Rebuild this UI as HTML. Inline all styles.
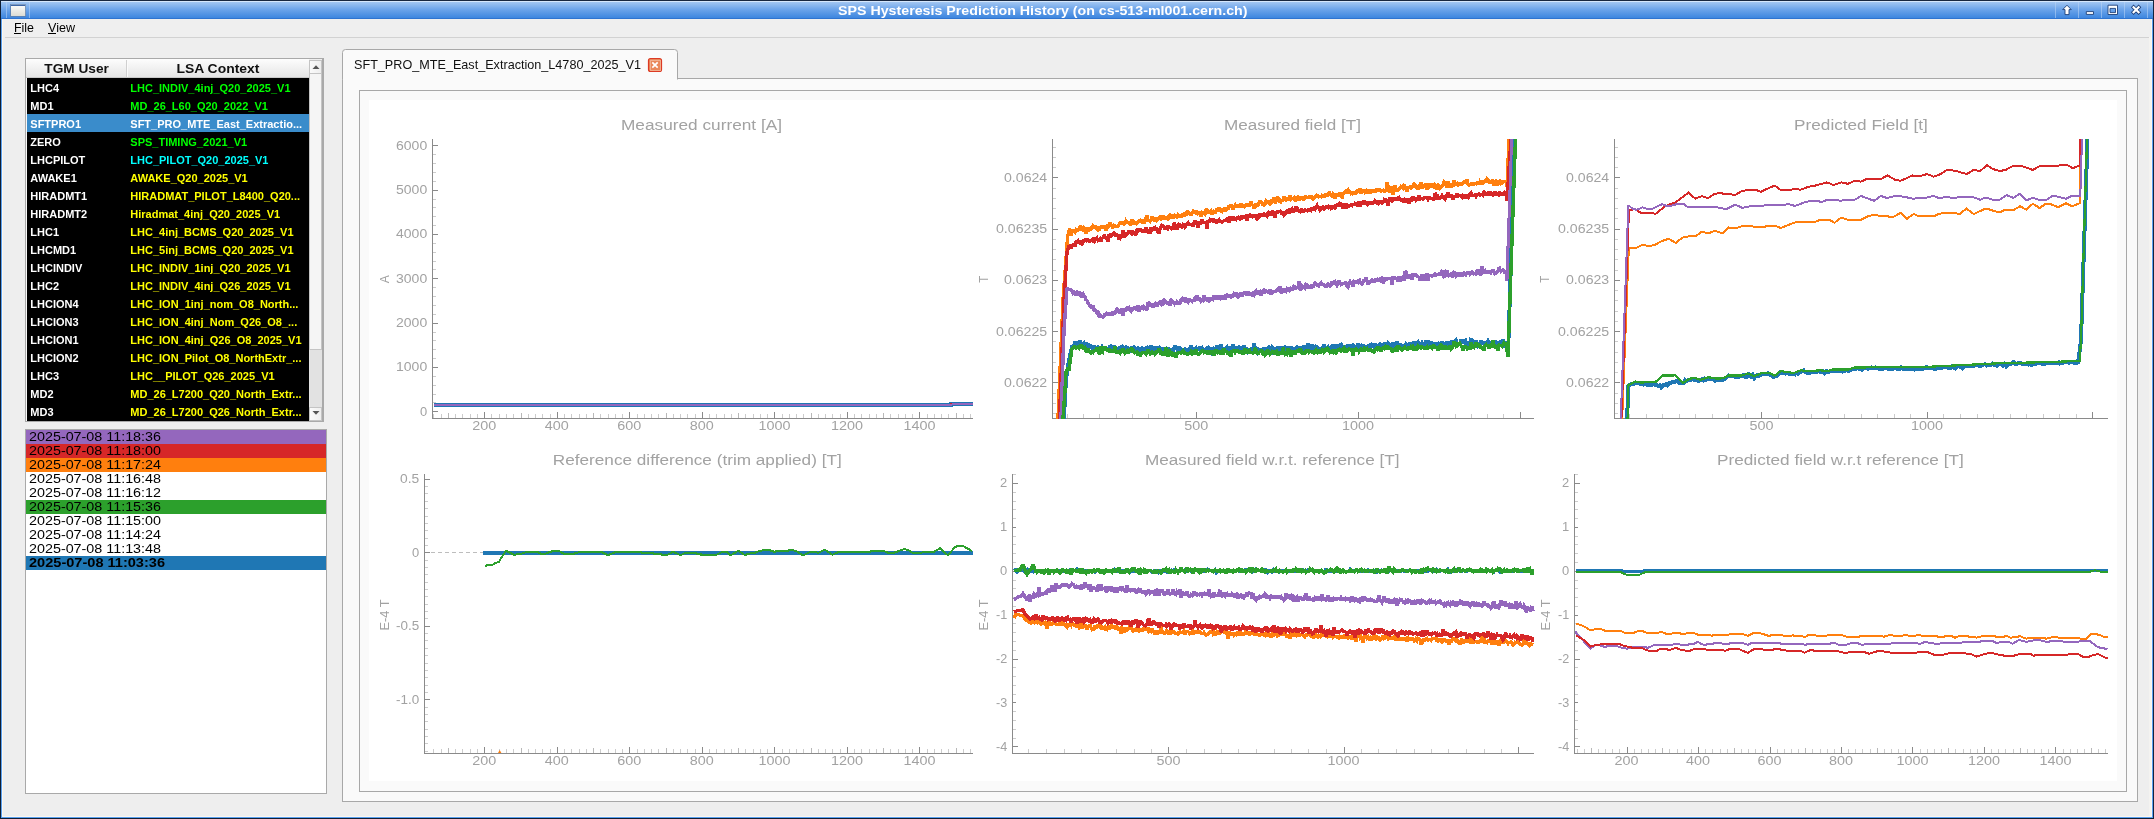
<!DOCTYPE html><html><head><meta charset="utf-8"><style>html,body{margin:0;padding:0;overflow:hidden;background:#eeeeee}svg{display:block;will-change:transform}text{font-family:"Liberation Sans",sans-serif}</style></head><body>
<svg width="2154" height="819" viewBox="0 0 2154 819" shape-rendering="crispEdges">
<defs>
<linearGradient id="tb" x1="0" y1="0" x2="0" y2="1"><stop offset="0" stop-color="#a9cbf3"/><stop offset="0.45" stop-color="#6ea5ea"/><stop offset="1" stop-color="#3883de"/></linearGradient>
<linearGradient id="hd" x1="0" y1="0" x2="0" y2="1"><stop offset="0" stop-color="#fdfdfd"/><stop offset="1" stop-color="#e4e4e4"/></linearGradient>
<linearGradient id="sb" x1="0" y1="0" x2="1" y2="0"><stop offset="0" stop-color="#fafafa"/><stop offset="1" stop-color="#eeeeee"/></linearGradient>
</defs>
<rect x="0" y="0" width="2154" height="819" fill="#eeeeee"/>
<rect x="0" y="0" width="2154" height="1" fill="#18273f"/>
<rect x="0" y="0" width="1" height="819" fill="#0f1e33"/>
<rect x="1" y="19" width="1" height="800" fill="#5aa0f0"/>
<rect x="2" y="19" width="1" height="798" fill="#fbf7ef"/>
<rect x="2153" y="0" width="1" height="819" fill="#13233c"/>
<rect x="2152" y="19" width="1" height="800" fill="#5aa0f0"/>
<rect x="2151" y="19" width="1" height="798" fill="#fbf7ef"/>
<rect x="2149" y="37" width="2" height="779" fill="#f4f3f0"/>
<rect x="0" y="818" width="2154" height="1" fill="#0f1e33"/>
<rect x="1" y="817" width="2152" height="1" fill="#5aa0f0"/>
<rect x="2" y="816" width="2150" height="1" fill="#fbf7ef"/>
<rect x="1" y="1" width="2152" height="18" fill="url(#tb)"/>
<rect x="1" y="18" width="2152" height="1" fill="#2f74d0"/>
<rect x="1" y="1" width="2152" height="1" fill="#d6e7fb"/>
<rect x="6" y="2" width="1" height="16" fill="#bcd6f6" opacity="0.55"/>
<rect x="29" y="2" width="1" height="16" fill="#bcd6f6" opacity="0.55"/>
<rect x="2055" y="2" width="1" height="16" fill="#bcd6f6" opacity="0.55"/>
<rect x="2078" y="2" width="1" height="16" fill="#bcd6f6" opacity="0.55"/>
<rect x="2101" y="2" width="1" height="16" fill="#bcd6f6" opacity="0.55"/>
<rect x="2124" y="2" width="1" height="16" fill="#bcd6f6" opacity="0.55"/>
<rect x="2147" y="2" width="1" height="16" fill="#bcd6f6" opacity="0.55"/>
<linearGradient id="wi" x1="0" y1="0" x2="0" y2="1"><stop offset="0" stop-color="#ffffff"/><stop offset="1" stop-color="#dcdcd4"/></linearGradient>
<rect x="10.5" y="4" width="15" height="12" fill="url(#wi)" stroke="#5d7fae" stroke-width="0.8"/>
<rect x="11" y="4.5" width="14" height="1.6" fill="#3e66a6"/>
<text x="838" y="14.9" font-size="13" fill="#ffffff" font-weight="bold" textLength="409.5" lengthAdjust="spacingAndGlyphs">SPS Hysteresis Prediction History (on cs-513-ml001.cern.ch)</text>
<path d="M2067,5.2 L2071.3,9.6 L2069,9.6 L2069,14.6 L2065,14.6 L2065,9.6 L2062.7,9.6 Z" fill="#ffffff" stroke="#1d3f78" stroke-width="0.9" stroke-linejoin="round" shape-rendering="geometricPrecision"/>
<path d="M2086.3,11.6 H2093.5 V14.4 H2086.3 Z" fill="#ffffff" stroke="#1d3f78" stroke-width="0.9" stroke-linejoin="round" shape-rendering="geometricPrecision"/>
<path d="M2108,5.2 H2117.5 V14.5 H2108 Z M2110,8.4 V12.6 H2115.5 V8.4 Z" fill="#ffffff" fill-rule="evenodd" stroke="#1d3f78" stroke-width="0.9" shape-rendering="geometricPrecision"/>
<path d="M2133.6,7.3 L2138.6,12.3 M2138.6,7.3 L2133.6,12.3" stroke="#1d3f78" stroke-width="3.8" stroke-linecap="square" shape-rendering="geometricPrecision"/>
<path d="M2133.6,7.3 L2138.6,12.3 M2138.6,7.3 L2133.6,12.3" stroke="#ffffff" stroke-width="2.2" stroke-linecap="square" shape-rendering="geometricPrecision"/>
<rect x="3" y="19" width="2147" height="18" fill="#efefef"/>
<rect x="5" y="37" width="2144" height="1" fill="#d2d2d2"/>
<text x="14" y="32" font-size="13" fill="#000" textLength="20" lengthAdjust="spacingAndGlyphs">File</text>
<rect x="14" y="33" width="7" height="1" fill="#000"/>
<text x="48" y="32" font-size="13" fill="#000" textLength="27" lengthAdjust="spacingAndGlyphs">View</text>
<rect x="48" y="33" width="8" height="1" fill="#000"/>
<rect x="25" y="58" width="299" height="364" fill="#a9a9a9"/>
<rect x="26" y="59" width="297" height="362" fill="#f8f8f8"/>
<rect x="26" y="59" width="283" height="19" fill="url(#hd)"/>
<rect x="26" y="77" width="283" height="1" fill="#c9c9c9"/>
<rect x="126" y="60" width="1" height="17" fill="#d0d0d0"/>
<rect x="127" y="60" width="1" height="17" fill="#fbfbfb"/>
<text x="44.3" y="72.9" font-size="12" fill="#111" font-weight="bold" textLength="64.5" lengthAdjust="spacingAndGlyphs">TGM User</text>
<text x="176.4" y="72.9" font-size="12" fill="#111" font-weight="bold" textLength="83" lengthAdjust="spacingAndGlyphs">LSA Context</text>
<rect x="27" y="78" width="282" height="343" fill="#000000"/>
<text x="30.3" y="92" font-size="11" fill="#ffffff" font-weight="bold">LHC4</text>
<text x="130.3" y="92" font-size="11" fill="#00ff00" font-weight="bold">LHC_INDIV_4inj_Q20_2025_V1</text>
<text x="30.3" y="110" font-size="11" fill="#ffffff" font-weight="bold">MD1</text>
<text x="130.3" y="110" font-size="11" fill="#00ff00" font-weight="bold">MD_26_L60_Q20_2022_V1</text>
<rect x="27" y="114" width="282" height="18" fill="#3a8ccb"/>
<text x="30.3" y="128" font-size="11" fill="#ffffff" font-weight="bold">SFTPRO1</text>
<text x="130.3" y="128" font-size="11" fill="#ffffff" font-weight="bold">SFT_PRO_MTE_East_Extractio...</text>
<text x="30.3" y="146" font-size="11" fill="#ffffff" font-weight="bold">ZERO</text>
<text x="130.3" y="146" font-size="11" fill="#00ff00" font-weight="bold">SPS_TIMING_2021_V1</text>
<text x="30.3" y="164" font-size="11" fill="#ffffff" font-weight="bold">LHCPILOT</text>
<text x="130.3" y="164" font-size="11" fill="#00ffff" font-weight="bold">LHC_PILOT_Q20_2025_V1</text>
<text x="30.3" y="182" font-size="11" fill="#ffffff" font-weight="bold">AWAKE1</text>
<text x="130.3" y="182" font-size="11" fill="#ffff00" font-weight="bold">AWAKE_Q20_2025_V1</text>
<text x="30.3" y="200" font-size="11" fill="#ffffff" font-weight="bold">HIRADMT1</text>
<text x="130.3" y="200" font-size="11" fill="#ffff00" font-weight="bold">HIRADMAT_PILOT_L8400_Q20...</text>
<text x="30.3" y="218" font-size="11" fill="#ffffff" font-weight="bold">HIRADMT2</text>
<text x="130.3" y="218" font-size="11" fill="#ffff00" font-weight="bold">Hiradmat_4inj_Q20_2025_V1</text>
<text x="30.3" y="236" font-size="11" fill="#ffffff" font-weight="bold">LHC1</text>
<text x="130.3" y="236" font-size="11" fill="#ffff00" font-weight="bold">LHC_4inj_BCMS_Q20_2025_V1</text>
<text x="30.3" y="254" font-size="11" fill="#ffffff" font-weight="bold">LHCMD1</text>
<text x="130.3" y="254" font-size="11" fill="#ffff00" font-weight="bold">LHC_5inj_BCMS_Q20_2025_V1</text>
<text x="30.3" y="272" font-size="11" fill="#ffffff" font-weight="bold">LHCINDIV</text>
<text x="130.3" y="272" font-size="11" fill="#ffff00" font-weight="bold">LHC_INDIV_1inj_Q20_2025_V1</text>
<text x="30.3" y="290" font-size="11" fill="#ffffff" font-weight="bold">LHC2</text>
<text x="130.3" y="290" font-size="11" fill="#ffff00" font-weight="bold">LHC_INDIV_4inj_Q26_2025_V1</text>
<text x="30.3" y="308" font-size="11" fill="#ffffff" font-weight="bold">LHCION4</text>
<text x="130.3" y="308" font-size="11" fill="#ffff00" font-weight="bold">LHC_ION_1inj_nom_O8_North...</text>
<text x="30.3" y="326" font-size="11" fill="#ffffff" font-weight="bold">LHCION3</text>
<text x="130.3" y="326" font-size="11" fill="#ffff00" font-weight="bold">LHC_ION_4inj_Nom_Q26_O8_...</text>
<text x="30.3" y="344" font-size="11" fill="#ffffff" font-weight="bold">LHCION1</text>
<text x="130.3" y="344" font-size="11" fill="#ffff00" font-weight="bold">LHC_ION_4inj_Q26_O8_2025_V1</text>
<text x="30.3" y="362" font-size="11" fill="#ffffff" font-weight="bold">LHCION2</text>
<text x="130.3" y="362" font-size="11" fill="#ffff00" font-weight="bold">LHC_ION_Pilot_O8_NorthExtr_...</text>
<text x="30.3" y="380" font-size="11" fill="#ffffff" font-weight="bold">LHC3</text>
<text x="130.3" y="380" font-size="11" fill="#ffff00" font-weight="bold">LHC__PILOT_Q26_2025_V1</text>
<text x="30.3" y="398" font-size="11" fill="#ffffff" font-weight="bold">MD2</text>
<text x="130.3" y="398" font-size="11" fill="#ffff00" font-weight="bold">MD_26_L7200_Q20_North_Extr...</text>
<text x="30.3" y="416" font-size="11" fill="#ffffff" font-weight="bold">MD3</text>
<text x="130.3" y="416" font-size="11" fill="#ffff00" font-weight="bold">MD_26_L7200_Q26_North_Extr...</text>
<rect x="309" y="59" width="14" height="362" fill="#eeeeee"/>
<rect x="309" y="60" width="13" height="14" fill="#c4c4c4"/>
<rect x="310" y="61" width="11" height="12" fill="url(#sb)"/>
<path d="M312.5,69 L316,65.3 L319.5,69 Z" fill="#555" shape-rendering="geometricPrecision"/>
<rect x="309" y="74" width="13" height="276" fill="#c4c4c4"/>
<rect x="310" y="74" width="11" height="275" fill="#f5f5f5"/>
<rect x="309" y="350" width="13" height="57" fill="#e2e2e2"/>
<rect x="309" y="407" width="13" height="14" fill="#c4c4c4"/>
<rect x="310" y="408" width="11" height="12" fill="url(#sb)"/>
<path d="M312.5,411 L316,414.7 L319.5,411 Z" fill="#555" shape-rendering="geometricPrecision"/>
<rect x="322" y="59" width="1" height="362" fill="#a9a9a9"/>
<rect x="25" y="429" width="302" height="365" fill="#a9a9a9"/>
<rect x="26" y="430" width="300" height="363" fill="#ffffff"/>
<rect x="26" y="430" width="300" height="14" fill="#9467bd"/>
<text x="29" y="441" font-size="12" fill="#000" textLength="132" lengthAdjust="spacingAndGlyphs">2025-07-08 11:18:36</text>
<rect x="26" y="444" width="300" height="14" fill="#d62728"/>
<text x="29" y="455" font-size="12" fill="#000" textLength="132" lengthAdjust="spacingAndGlyphs">2025-07-08 11:18:00</text>
<rect x="26" y="458" width="300" height="14" fill="#ff7f0e"/>
<text x="29" y="469" font-size="12" fill="#000" textLength="132" lengthAdjust="spacingAndGlyphs">2025-07-08 11:17:24</text>
<text x="29" y="483" font-size="12" fill="#000" textLength="132" lengthAdjust="spacingAndGlyphs">2025-07-08 11:16:48</text>
<text x="29" y="497" font-size="12" fill="#000" textLength="132" lengthAdjust="spacingAndGlyphs">2025-07-08 11:16:12</text>
<rect x="26" y="500" width="300" height="14" fill="#2ca02c"/>
<text x="29" y="511" font-size="12" fill="#000" textLength="132" lengthAdjust="spacingAndGlyphs">2025-07-08 11:15:36</text>
<text x="29" y="525" font-size="12" fill="#000" textLength="132" lengthAdjust="spacingAndGlyphs">2025-07-08 11:15:00</text>
<text x="29" y="539" font-size="12" fill="#000" textLength="132" lengthAdjust="spacingAndGlyphs">2025-07-08 11:14:24</text>
<text x="29" y="553" font-size="12" fill="#000" textLength="132" lengthAdjust="spacingAndGlyphs">2025-07-08 11:13:48</text>
<rect x="26" y="556" width="300" height="14" fill="#1f77b4"/>
<text x="29" y="567" font-size="12" fill="#000" font-weight="bold" textLength="136" lengthAdjust="spacingAndGlyphs">2025-07-08 11:03:36</text>
<rect x="342" y="78" width="1796" height="724" fill="#a8a8a8"/>
<rect x="343" y="79" width="1794" height="722" fill="#fafafa"/>
<path d="M342.5,79.5 V52.5 Q342.5,49.5 345.5,49.5 H674.5 Q677.5,49.5 677.5,52.5 V79.5" fill="#fafafa" stroke="#a8a8a8" stroke-width="1" shape-rendering="geometricPrecision"/>
<rect x="343" y="78" width="334" height="2" fill="#fafafa"/>
<text x="354" y="69.3" font-size="13" fill="#111" textLength="287" lengthAdjust="spacingAndGlyphs">SFT_PRO_MTE_East_Extraction_L4780_2025_V1</text>
<rect x="648.5" y="58.5" width="13" height="13" rx="2" fill="#e9875a" stroke="#dc3a24" stroke-width="1.2" shape-rendering="geometricPrecision"/>
<rect x="650" y="60" width="10" height="10" fill="none" stroke="#f3b89a" stroke-width="0.8"/>
<path d="M652.3,62.3 L657.7,67.7 M657.7,62.3 L652.3,67.7" stroke="#ffffff" stroke-width="1.7" stroke-linecap="butt" shape-rendering="geometricPrecision"/>
<rect x="359" y="90" width="1768" height="702" fill="#a8a8a8"/>
<rect x="360" y="91" width="1766" height="700" fill="#fafafa"/>
<rect x="369" y="100" width="1748" height="681" fill="#ffffff"/>
<defs>
<clipPath id="c1"><rect x="433" y="139" width="541" height="280"/></clipPath>
<clipPath id="c2"><rect x="1053" y="139" width="482" height="280"/></clipPath>
<clipPath id="c3"><rect x="1615" y="139" width="494" height="280"/></clipPath>
<clipPath id="c4"><rect x="425" y="474" width="549" height="280"/></clipPath>
<clipPath id="c5"><rect x="1013" y="474" width="522" height="280"/></clipPath>
<clipPath id="c6"><rect x="1575" y="474" width="534" height="280"/></clipPath>
</defs>
<text x="621.0" y="129.8" font-size="15.4" fill="#a2a2a2" textLength="161.0" lengthAdjust="spacingAndGlyphs">Measured current [A]</text>
<text x="1224.1" y="129.7" font-size="15.4" fill="#a2a2a2" textLength="136.8" lengthAdjust="spacingAndGlyphs">Measured field [T]</text>
<text x="1794.1" y="129.6" font-size="15.4" fill="#a2a2a2" textLength="133.7" lengthAdjust="spacingAndGlyphs">Predicted Field [t]</text>
<text x="552.8" y="465" font-size="15.4" fill="#a2a2a2" textLength="288.9" lengthAdjust="spacingAndGlyphs">Reference difference (trim applied) [T]</text>
<text x="1145.0" y="465.2" font-size="15.4" fill="#a2a2a2" textLength="254.5" lengthAdjust="spacingAndGlyphs">Measured field w.r.t. reference [T]</text>
<text x="1717.0" y="465.1" font-size="15.4" fill="#a2a2a2" textLength="246.7" lengthAdjust="spacingAndGlyphs">Predicted field w.r.t reference [T]</text>
<rect x="432" y="139" width="1" height="280" fill="#8a8a8a"/>
<rect x="432" y="418" width="541" height="1" fill="#8a8a8a"/>
<rect x="432" y="411" width="6" height="1" fill="#8a8a8a"/>
<text x="427.2" y="415.6" font-size="12" fill="#a2a2a2" text-anchor="end" textLength="7.2" lengthAdjust="spacingAndGlyphs">0</text>
<rect x="432" y="367" width="6" height="1" fill="#8a8a8a"/>
<text x="427.2" y="371.3" font-size="12" fill="#a2a2a2" text-anchor="end" textLength="31.2" lengthAdjust="spacingAndGlyphs">1000</text>
<rect x="432" y="323" width="6" height="1" fill="#8a8a8a"/>
<text x="427.2" y="326.9" font-size="12" fill="#a2a2a2" text-anchor="end" textLength="31.2" lengthAdjust="spacingAndGlyphs">2000</text>
<rect x="432" y="278" width="6" height="1" fill="#8a8a8a"/>
<text x="427.2" y="282.6" font-size="12" fill="#a2a2a2" text-anchor="end" textLength="31.2" lengthAdjust="spacingAndGlyphs">3000</text>
<rect x="432" y="234" width="6" height="1" fill="#8a8a8a"/>
<text x="427.2" y="238.3" font-size="12" fill="#a2a2a2" text-anchor="end" textLength="31.2" lengthAdjust="spacingAndGlyphs">4000</text>
<rect x="432" y="190" width="6" height="1" fill="#8a8a8a"/>
<text x="427.2" y="193.9" font-size="12" fill="#a2a2a2" text-anchor="end" textLength="31.2" lengthAdjust="spacingAndGlyphs">5000</text>
<rect x="432" y="145" width="6" height="1" fill="#8a8a8a"/>
<text x="427.2" y="149.6" font-size="12" fill="#a2a2a2" text-anchor="end" textLength="31.2" lengthAdjust="spacingAndGlyphs">6000</text>
<rect x="433" y="402" width="3" height="1" fill="#cccccc"/>
<rect x="433" y="394" width="3" height="1" fill="#cccccc"/>
<rect x="433" y="385" width="3" height="1" fill="#cccccc"/>
<rect x="433" y="376" width="3" height="1" fill="#cccccc"/>
<rect x="433" y="358" width="3" height="1" fill="#cccccc"/>
<rect x="433" y="349" width="3" height="1" fill="#cccccc"/>
<rect x="433" y="340" width="3" height="1" fill="#cccccc"/>
<rect x="433" y="332" width="3" height="1" fill="#cccccc"/>
<rect x="433" y="314" width="3" height="1" fill="#cccccc"/>
<rect x="433" y="305" width="3" height="1" fill="#cccccc"/>
<rect x="433" y="296" width="3" height="1" fill="#cccccc"/>
<rect x="433" y="287" width="3" height="1" fill="#cccccc"/>
<rect x="433" y="269" width="3" height="1" fill="#cccccc"/>
<rect x="433" y="261" width="3" height="1" fill="#cccccc"/>
<rect x="433" y="252" width="3" height="1" fill="#cccccc"/>
<rect x="433" y="243" width="3" height="1" fill="#cccccc"/>
<rect x="433" y="225" width="3" height="1" fill="#cccccc"/>
<rect x="433" y="216" width="3" height="1" fill="#cccccc"/>
<rect x="433" y="207" width="3" height="1" fill="#cccccc"/>
<rect x="433" y="199" width="3" height="1" fill="#cccccc"/>
<rect x="433" y="181" width="3" height="1" fill="#cccccc"/>
<rect x="433" y="172" width="3" height="1" fill="#cccccc"/>
<rect x="433" y="163" width="3" height="1" fill="#cccccc"/>
<rect x="433" y="154" width="3" height="1" fill="#cccccc"/>
<rect x="484" y="412" width="1" height="6" fill="#8a8a8a"/>
<text x="484.2" y="430" font-size="12" fill="#a2a2a2" text-anchor="middle" textLength="24" lengthAdjust="spacingAndGlyphs">200</text>
<rect x="557" y="412" width="1" height="6" fill="#8a8a8a"/>
<text x="556.8" y="430" font-size="12" fill="#a2a2a2" text-anchor="middle" textLength="24" lengthAdjust="spacingAndGlyphs">400</text>
<rect x="629" y="412" width="1" height="6" fill="#8a8a8a"/>
<text x="629.3" y="430" font-size="12" fill="#a2a2a2" text-anchor="middle" textLength="24" lengthAdjust="spacingAndGlyphs">600</text>
<rect x="702" y="412" width="1" height="6" fill="#8a8a8a"/>
<text x="701.8" y="430" font-size="12" fill="#a2a2a2" text-anchor="middle" textLength="24" lengthAdjust="spacingAndGlyphs">800</text>
<rect x="774" y="412" width="1" height="6" fill="#8a8a8a"/>
<text x="774.4" y="430" font-size="12" fill="#a2a2a2" text-anchor="middle" textLength="32" lengthAdjust="spacingAndGlyphs">1000</text>
<rect x="847" y="412" width="1" height="6" fill="#8a8a8a"/>
<text x="846.9" y="430" font-size="12" fill="#a2a2a2" text-anchor="middle" textLength="32" lengthAdjust="spacingAndGlyphs">1200</text>
<rect x="919" y="412" width="1" height="6" fill="#8a8a8a"/>
<text x="919.4" y="430" font-size="12" fill="#a2a2a2" text-anchor="middle" textLength="32" lengthAdjust="spacingAndGlyphs">1400</text>
<rect x="433" y="414" width="1" height="4" fill="#cccccc"/>
<rect x="441" y="414" width="1" height="4" fill="#cccccc"/>
<rect x="455" y="414" width="1" height="4" fill="#cccccc"/>
<rect x="462" y="414" width="1" height="4" fill="#cccccc"/>
<rect x="470" y="414" width="1" height="4" fill="#cccccc"/>
<rect x="477" y="414" width="1" height="4" fill="#cccccc"/>
<rect x="491" y="414" width="1" height="4" fill="#cccccc"/>
<rect x="499" y="414" width="1" height="4" fill="#cccccc"/>
<rect x="506" y="414" width="1" height="4" fill="#cccccc"/>
<rect x="513" y="414" width="1" height="4" fill="#cccccc"/>
<rect x="528" y="414" width="1" height="4" fill="#cccccc"/>
<rect x="535" y="414" width="1" height="4" fill="#cccccc"/>
<rect x="542" y="414" width="1" height="4" fill="#cccccc"/>
<rect x="550" y="414" width="1" height="4" fill="#cccccc"/>
<rect x="564" y="414" width="1" height="4" fill="#cccccc"/>
<rect x="571" y="414" width="1" height="4" fill="#cccccc"/>
<rect x="579" y="414" width="1" height="4" fill="#cccccc"/>
<rect x="586" y="414" width="1" height="4" fill="#cccccc"/>
<rect x="600" y="414" width="1" height="4" fill="#cccccc"/>
<rect x="608" y="414" width="1" height="4" fill="#cccccc"/>
<rect x="615" y="414" width="1" height="4" fill="#cccccc"/>
<rect x="622" y="414" width="1" height="4" fill="#cccccc"/>
<rect x="637" y="414" width="1" height="4" fill="#cccccc"/>
<rect x="644" y="414" width="1" height="4" fill="#cccccc"/>
<rect x="651" y="414" width="1" height="4" fill="#cccccc"/>
<rect x="658" y="414" width="1" height="4" fill="#cccccc"/>
<rect x="673" y="414" width="1" height="4" fill="#cccccc"/>
<rect x="680" y="414" width="1" height="4" fill="#cccccc"/>
<rect x="687" y="414" width="1" height="4" fill="#cccccc"/>
<rect x="695" y="414" width="1" height="4" fill="#cccccc"/>
<rect x="709" y="414" width="1" height="4" fill="#cccccc"/>
<rect x="716" y="414" width="1" height="4" fill="#cccccc"/>
<rect x="724" y="414" width="1" height="4" fill="#cccccc"/>
<rect x="731" y="414" width="1" height="4" fill="#cccccc"/>
<rect x="745" y="414" width="1" height="4" fill="#cccccc"/>
<rect x="753" y="414" width="1" height="4" fill="#cccccc"/>
<rect x="760" y="414" width="1" height="4" fill="#cccccc"/>
<rect x="767" y="414" width="1" height="4" fill="#cccccc"/>
<rect x="782" y="414" width="1" height="4" fill="#cccccc"/>
<rect x="789" y="414" width="1" height="4" fill="#cccccc"/>
<rect x="796" y="414" width="1" height="4" fill="#cccccc"/>
<rect x="803" y="414" width="1" height="4" fill="#cccccc"/>
<rect x="818" y="414" width="1" height="4" fill="#cccccc"/>
<rect x="825" y="414" width="1" height="4" fill="#cccccc"/>
<rect x="832" y="414" width="1" height="4" fill="#cccccc"/>
<rect x="840" y="414" width="1" height="4" fill="#cccccc"/>
<rect x="854" y="414" width="1" height="4" fill="#cccccc"/>
<rect x="861" y="414" width="1" height="4" fill="#cccccc"/>
<rect x="869" y="414" width="1" height="4" fill="#cccccc"/>
<rect x="876" y="414" width="1" height="4" fill="#cccccc"/>
<rect x="890" y="414" width="1" height="4" fill="#cccccc"/>
<rect x="898" y="414" width="1" height="4" fill="#cccccc"/>
<rect x="905" y="414" width="1" height="4" fill="#cccccc"/>
<rect x="912" y="414" width="1" height="4" fill="#cccccc"/>
<rect x="927" y="414" width="1" height="4" fill="#cccccc"/>
<rect x="934" y="414" width="1" height="4" fill="#cccccc"/>
<rect x="941" y="414" width="1" height="4" fill="#cccccc"/>
<rect x="948" y="414" width="1" height="4" fill="#cccccc"/>
<rect x="963" y="414" width="1" height="4" fill="#cccccc"/>
<rect x="970" y="414" width="1" height="4" fill="#cccccc"/>
<rect x="448" y="413" width="1" height="5" fill="#b8b8b8"/>
<rect x="521" y="413" width="1" height="5" fill="#b8b8b8"/>
<rect x="593" y="413" width="1" height="5" fill="#b8b8b8"/>
<rect x="666" y="413" width="1" height="5" fill="#b8b8b8"/>
<rect x="738" y="413" width="1" height="5" fill="#b8b8b8"/>
<rect x="811" y="413" width="1" height="5" fill="#b8b8b8"/>
<rect x="883" y="413" width="1" height="5" fill="#b8b8b8"/>
<rect x="956" y="413" width="1" height="5" fill="#b8b8b8"/>
<text x="388.9" y="279.3" font-size="12" fill="#a2a2a2" text-anchor="middle" transform="rotate(-90 388.9 279.3)" textLength="8" lengthAdjust="spacingAndGlyphs">A</text>
<path d="M434.0,405.0 L951.0,405.0 L951.0,404.0 L972.5,404.0" fill="none" stroke="#1f77b4" stroke-width="4" stroke-linejoin="miter" stroke-miterlimit="2" clip-path="url(#c1)" shape-rendering="crispEdges"/>
<path d="M434.0,405.0 L951.0,405.0 L951.0,404.0 L972.5,404.0" fill="none" stroke="#9467bd" stroke-width="2" stroke-linejoin="miter" stroke-miterlimit="2" clip-path="url(#c1)" shape-rendering="crispEdges"/>
<rect x="950" y="403" width="2" height="1.2" fill="#d62728"/>
<rect x="1052" y="139" width="1" height="280" fill="#8a8a8a"/>
<rect x="1052" y="418" width="482" height="1" fill="#8a8a8a"/>
<rect x="1052" y="177" width="6" height="1" fill="#8a8a8a"/>
<text x="1047.2" y="181.6" font-size="12" fill="#a2a2a2" text-anchor="end" textLength="43.2" lengthAdjust="spacingAndGlyphs">0.0624</text>
<rect x="1052" y="229" width="6" height="1" fill="#8a8a8a"/>
<text x="1047.2" y="232.9" font-size="12" fill="#a2a2a2" text-anchor="end" textLength="51.2" lengthAdjust="spacingAndGlyphs">0.06235</text>
<rect x="1052" y="280" width="6" height="1" fill="#8a8a8a"/>
<text x="1047.2" y="284.2" font-size="12" fill="#a2a2a2" text-anchor="end" textLength="43.2" lengthAdjust="spacingAndGlyphs">0.0623</text>
<rect x="1052" y="331" width="6" height="1" fill="#8a8a8a"/>
<text x="1047.2" y="335.5" font-size="12" fill="#a2a2a2" text-anchor="end" textLength="51.2" lengthAdjust="spacingAndGlyphs">0.06225</text>
<rect x="1052" y="382" width="6" height="1" fill="#8a8a8a"/>
<text x="1047.2" y="386.8" font-size="12" fill="#a2a2a2" text-anchor="end" textLength="43.2" lengthAdjust="spacingAndGlyphs">0.0622</text>
<rect x="1053" y="147" width="3" height="1" fill="#cccccc"/>
<rect x="1053" y="157" width="3" height="1" fill="#cccccc"/>
<rect x="1053" y="167" width="3" height="1" fill="#cccccc"/>
<rect x="1053" y="188" width="3" height="1" fill="#cccccc"/>
<rect x="1053" y="198" width="3" height="1" fill="#cccccc"/>
<rect x="1053" y="208" width="3" height="1" fill="#cccccc"/>
<rect x="1053" y="218" width="3" height="1" fill="#cccccc"/>
<rect x="1053" y="239" width="3" height="1" fill="#cccccc"/>
<rect x="1053" y="249" width="3" height="1" fill="#cccccc"/>
<rect x="1053" y="259" width="3" height="1" fill="#cccccc"/>
<rect x="1053" y="270" width="3" height="1" fill="#cccccc"/>
<rect x="1053" y="290" width="3" height="1" fill="#cccccc"/>
<rect x="1053" y="300" width="3" height="1" fill="#cccccc"/>
<rect x="1053" y="311" width="3" height="1" fill="#cccccc"/>
<rect x="1053" y="321" width="3" height="1" fill="#cccccc"/>
<rect x="1053" y="341" width="3" height="1" fill="#cccccc"/>
<rect x="1053" y="352" width="3" height="1" fill="#cccccc"/>
<rect x="1053" y="362" width="3" height="1" fill="#cccccc"/>
<rect x="1053" y="372" width="3" height="1" fill="#cccccc"/>
<rect x="1053" y="393" width="3" height="1" fill="#cccccc"/>
<rect x="1053" y="403" width="3" height="1" fill="#cccccc"/>
<rect x="1053" y="413" width="3" height="1" fill="#cccccc"/>
<rect x="1196" y="412" width="1" height="6" fill="#8a8a8a"/>
<text x="1196.3" y="430" font-size="12" fill="#a2a2a2" text-anchor="middle" textLength="24" lengthAdjust="spacingAndGlyphs">500</text>
<rect x="1358" y="412" width="1" height="6" fill="#8a8a8a"/>
<text x="1357.9" y="430" font-size="12" fill="#a2a2a2" text-anchor="middle" textLength="32" lengthAdjust="spacingAndGlyphs">1000</text>
<rect x="1520" y="412" width="1" height="6" fill="#8a8a8a"/>
<rect x="1067" y="414" width="1" height="4" fill="#cccccc"/>
<rect x="1083" y="414" width="1" height="4" fill="#cccccc"/>
<rect x="1099" y="414" width="1" height="4" fill="#cccccc"/>
<rect x="1116" y="414" width="1" height="4" fill="#cccccc"/>
<rect x="1132" y="414" width="1" height="4" fill="#cccccc"/>
<rect x="1148" y="414" width="1" height="4" fill="#cccccc"/>
<rect x="1164" y="414" width="1" height="4" fill="#cccccc"/>
<rect x="1180" y="414" width="1" height="4" fill="#cccccc"/>
<rect x="1212" y="414" width="1" height="4" fill="#cccccc"/>
<rect x="1229" y="414" width="1" height="4" fill="#cccccc"/>
<rect x="1245" y="414" width="1" height="4" fill="#cccccc"/>
<rect x="1261" y="414" width="1" height="4" fill="#cccccc"/>
<rect x="1277" y="414" width="1" height="4" fill="#cccccc"/>
<rect x="1293" y="414" width="1" height="4" fill="#cccccc"/>
<rect x="1309" y="414" width="1" height="4" fill="#cccccc"/>
<rect x="1326" y="414" width="1" height="4" fill="#cccccc"/>
<rect x="1342" y="414" width="1" height="4" fill="#cccccc"/>
<rect x="1374" y="414" width="1" height="4" fill="#cccccc"/>
<rect x="1390" y="414" width="1" height="4" fill="#cccccc"/>
<rect x="1406" y="414" width="1" height="4" fill="#cccccc"/>
<rect x="1423" y="414" width="1" height="4" fill="#cccccc"/>
<rect x="1439" y="414" width="1" height="4" fill="#cccccc"/>
<rect x="1455" y="414" width="1" height="4" fill="#cccccc"/>
<rect x="1471" y="414" width="1" height="4" fill="#cccccc"/>
<rect x="1487" y="414" width="1" height="4" fill="#cccccc"/>
<rect x="1503" y="414" width="1" height="4" fill="#cccccc"/>
<text x="987.8" y="279.3" font-size="12" fill="#a2a2a2" text-anchor="middle" transform="rotate(-90 987.8 279.3)" textLength="7" lengthAdjust="spacingAndGlyphs">T</text>
<path d="M1057.0,430.0 L1058.0,418.0 L1063.0,300.0 L1067.6,237.0 L1069.0,230.7 L1070.0,229.0 L1071.0,235.2 L1072.0,231.6 L1073.0,230.6 L1074.0,230.9 L1075.0,231.9 L1076.0,229.6 L1077.0,230.1 L1078.0,230.3 L1079.0,228.9 L1080.0,226.9 L1081.0,226.7 L1082.0,229.8 L1083.0,230.1 L1084.0,228.2 L1085.0,229.5 L1086.0,233.2 L1087.0,230.7 L1088.0,227.6 L1089.0,229.9 L1090.0,229.7 L1091.0,228.3 L1092.0,228.5 L1093.0,225.9 L1094.0,227.0 L1095.0,226.6 L1096.0,226.9 L1097.0,229.1 L1098.0,230.3 L1099.0,229.8 L1100.0,227.2 L1101.0,227.0 L1102.0,226.7 L1103.0,227.2 L1104.0,227.0 L1105.0,226.6 L1106.0,230.4 L1107.0,226.1 L1108.0,226.8 L1109.0,224.9 L1110.0,222.1 L1111.0,225.7 L1112.0,226.0 L1113.0,227.8 L1114.0,225.4 L1115.0,226.0 L1116.0,226.2 L1117.0,226.6 L1118.0,226.4 L1119.0,224.4 L1120.0,222.9 L1121.0,223.4 L1122.0,222.5 L1123.0,222.5 L1124.0,223.9 L1125.0,223.0 L1126.0,220.6 L1127.0,221.8 L1128.0,222.5 L1129.0,222.9 L1130.0,224.0 L1131.0,225.1 L1132.0,219.2 L1133.0,222.9 L1134.0,222.5 L1135.0,224.7 L1136.0,221.2 L1137.0,223.3 L1138.0,221.9 L1139.0,221.1 L1140.0,220.4 L1141.0,221.4 L1142.0,219.4 L1143.0,221.3 L1144.0,223.1 L1145.0,221.4 L1146.0,218.2 L1147.0,215.6 L1148.0,220.0 L1149.0,220.6 L1150.0,221.5 L1151.0,219.5 L1152.0,216.0 L1153.0,219.7 L1154.0,220.1 L1155.0,219.9 L1156.0,217.7 L1157.0,220.4 L1158.0,219.6 L1159.0,218.5 L1160.0,216.9 L1161.0,217.0 L1162.0,220.1 L1163.0,215.3 L1164.0,219.6 L1165.0,218.1 L1166.0,218.0 L1167.0,218.8 L1168.0,219.1 L1169.0,216.0 L1170.0,215.2 L1171.0,218.0 L1172.0,216.0 L1173.0,216.6 L1174.0,217.2 L1175.0,215.2 L1176.0,215.4 L1177.0,216.8 L1178.0,215.0 L1179.0,216.6 L1180.0,214.6 L1181.0,217.1 L1182.0,214.8 L1183.0,215.0 L1184.0,214.0 L1185.0,215.0 L1186.0,214.8 L1187.0,212.1 L1188.0,211.9 L1189.0,214.2 L1190.0,212.3 L1191.0,214.9 L1192.0,212.8 L1193.0,211.4 L1194.0,213.1 L1195.0,210.1 L1196.0,213.4 L1197.0,213.8 L1198.0,212.3 L1199.0,212.9 L1200.0,211.8 L1201.0,216.6 L1202.0,212.5 L1203.0,213.1 L1204.0,213.5 L1205.0,214.2 L1206.0,209.2 L1207.0,210.1 L1208.0,212.1 L1209.0,211.8 L1210.0,212.1 L1211.0,211.1 L1212.0,214.5 L1213.0,211.6 L1214.0,210.4 L1215.0,213.6 L1216.0,211.5 L1217.0,208.2 L1218.0,210.3 L1219.0,207.0 L1220.0,210.8 L1221.0,211.0 L1222.0,211.5 L1223.0,209.3 L1224.0,209.1 L1225.0,211.4 L1226.0,209.9 L1227.0,207.8 L1228.0,209.5 L1229.0,205.3 L1230.0,207.0 L1231.0,204.4 L1232.0,207.5 L1233.0,209.1 L1234.0,206.6 L1235.0,205.4 L1236.0,207.7 L1237.0,204.3 L1238.0,206.7 L1239.0,204.8 L1240.0,207.1 L1241.0,203.7 L1242.0,205.4 L1243.0,206.2 L1244.0,206.8 L1245.0,205.6 L1246.0,204.8 L1247.0,205.5 L1248.0,205.1 L1249.0,204.7 L1250.0,205.1 L1251.0,201.3 L1252.0,204.5 L1253.0,205.3 L1254.0,208.4 L1255.0,205.8 L1256.0,203.8 L1257.0,205.6 L1258.0,204.9 L1259.0,203.1 L1260.0,200.4 L1261.0,202.2 L1262.0,202.5 L1263.0,205.8 L1264.0,204.5 L1265.0,204.5 L1266.0,201.2 L1267.0,202.1 L1268.0,200.8 L1269.0,203.6 L1270.0,203.9 L1271.0,200.0 L1272.0,202.5 L1273.0,201.6 L1274.0,197.6 L1275.0,203.0 L1276.0,201.6 L1277.0,197.6 L1278.0,197.5 L1279.0,199.0 L1280.0,202.9 L1281.0,201.3 L1282.0,200.7 L1283.0,199.8 L1284.0,196.4 L1285.0,197.8 L1286.0,199.9 L1287.0,199.1 L1288.0,198.9 L1289.0,199.1 L1290.0,195.0 L1291.0,199.5 L1292.0,198.7 L1293.0,198.4 L1294.0,197.6 L1295.0,200.1 L1296.0,200.3 L1297.0,196.0 L1298.0,198.8 L1299.0,198.0 L1300.0,198.9 L1301.0,197.3 L1302.0,197.4 L1303.0,199.3 L1304.0,199.4 L1305.0,197.2 L1306.0,196.5 L1307.0,197.4 L1308.0,197.2 L1309.0,196.9 L1310.0,197.7 L1311.0,196.9 L1312.0,196.7 L1313.0,198.9 L1314.0,198.6 L1315.0,196.2 L1316.0,197.6 L1317.0,195.3 L1318.0,195.5 L1319.0,196.7 L1320.0,196.2 L1321.0,196.8 L1322.0,195.4 L1323.0,196.2 L1324.0,196.8 L1325.0,196.2 L1326.0,193.7 L1327.0,196.2 L1328.0,194.6 L1329.0,192.2 L1330.0,194.2 L1331.0,194.7 L1332.0,195.8 L1333.0,193.9 L1334.0,195.1 L1335.0,198.9 L1336.0,195.7 L1337.0,193.2 L1338.0,196.1 L1339.0,194.1 L1340.0,194.8 L1341.0,192.3 L1342.0,198.2 L1343.0,193.7 L1344.0,192.7 L1345.0,191.8 L1346.0,193.4 L1347.0,191.0 L1348.0,190.1 L1349.0,192.3 L1350.0,191.9 L1351.0,193.6 L1352.0,192.7 L1353.0,193.8 L1354.0,193.2 L1355.0,192.5 L1356.0,193.0 L1357.0,191.0 L1358.0,189.4 L1359.0,192.2 L1360.0,188.2 L1361.0,193.5 L1362.0,190.9 L1363.0,191.7 L1364.0,190.9 L1365.0,192.3 L1366.0,191.1 L1367.0,192.9 L1368.0,191.2 L1369.0,190.1 L1370.0,193.3 L1371.0,190.6 L1372.0,190.7 L1373.0,191.5 L1374.0,190.9 L1375.0,191.3 L1376.0,190.9 L1377.0,188.3 L1378.0,190.3 L1379.0,190.0 L1380.0,190.1 L1381.0,191.3 L1382.0,190.4 L1383.0,190.2 L1384.0,191.0 L1385.0,190.9 L1386.0,190.5 L1387.0,182.7 L1388.0,185.6 L1389.0,192.2 L1390.0,189.3 L1391.0,186.1 L1392.0,189.4 L1393.0,194.3 L1394.0,187.8 L1395.0,185.3 L1396.0,188.6 L1397.0,190.7 L1398.0,190.6 L1399.0,189.1 L1400.0,188.2 L1401.0,186.6 L1402.0,187.5 L1403.0,186.0 L1404.0,188.0 L1405.0,186.6 L1406.0,188.3 L1407.0,191.0 L1408.0,187.8 L1409.0,187.8 L1410.0,187.2 L1411.0,188.2 L1412.0,186.7 L1413.0,186.1 L1414.0,184.1 L1415.0,184.8 L1416.0,187.4 L1417.0,187.2 L1418.0,189.7 L1419.0,187.0 L1420.0,184.9 L1421.0,182.4 L1422.0,188.3 L1423.0,184.9 L1424.0,187.4 L1425.0,184.6 L1426.0,184.7 L1427.0,189.7 L1428.0,185.9 L1429.0,183.4 L1430.0,186.7 L1431.0,186.3 L1432.0,183.7 L1433.0,185.6 L1434.0,186.8 L1435.0,184.9 L1436.0,185.9 L1437.0,190.1 L1438.0,185.0 L1439.0,185.7 L1440.0,187.7 L1441.0,186.5 L1442.0,186.1 L1443.0,185.5 L1444.0,181.8 L1445.0,182.6 L1446.0,184.2 L1447.0,187.8 L1448.0,181.7 L1449.0,185.3 L1450.0,185.4 L1451.0,186.9 L1452.0,183.9 L1453.0,187.1 L1454.0,180.6 L1455.0,184.0 L1456.0,183.7 L1457.0,183.4 L1458.0,184.8 L1459.0,183.7 L1460.0,184.2 L1461.0,183.8 L1462.0,184.0 L1463.0,183.0 L1464.0,182.8 L1465.0,180.3 L1466.0,183.9 L1467.0,179.6 L1468.0,183.7 L1469.0,185.0 L1470.0,184.3 L1471.0,184.0 L1472.0,184.1 L1473.0,184.3 L1474.0,184.1 L1475.0,183.3 L1476.0,183.6 L1477.0,182.5 L1478.0,182.9 L1479.0,184.3 L1480.0,181.7 L1481.0,182.9 L1482.0,181.7 L1483.0,182.9 L1484.0,181.7 L1485.0,181.1 L1486.0,182.2 L1487.0,178.6 L1488.0,179.4 L1489.0,181.0 L1490.0,183.0 L1491.0,181.3 L1492.0,181.0 L1493.0,180.8 L1494.0,185.8 L1495.0,180.0 L1496.0,182.3 L1497.0,184.9 L1498.0,183.2 L1499.0,181.3 L1500.0,181.1 L1501.0,183.7 L1502.0,183.2 L1503.0,181.7 L1504.0,181.2 L1505.0,181.6 L1506.0,181.4 L1507.0,187.0 L1509.0,139.0 L1510.0,100.0" fill="none" stroke="#ff7f0e" stroke-width="3.4" stroke-linejoin="miter" stroke-miterlimit="2" clip-path="url(#c2)" shape-rendering="crispEdges"/>
<path d="M1058.0,430.0 L1059.5,418.0 L1064.0,300.0 L1067.0,252.0 L1068.0,248.9 L1069.0,245.1 L1070.0,247.0 L1071.0,248.3 L1072.0,244.3 L1073.0,246.0 L1074.0,243.6 L1075.0,246.4 L1076.0,242.1 L1077.0,242.0 L1078.0,241.0 L1079.0,243.4 L1080.0,240.5 L1081.0,243.6 L1082.0,244.2 L1083.0,242.4 L1084.0,239.5 L1085.0,241.0 L1086.0,238.6 L1087.0,240.4 L1088.0,239.9 L1089.0,241.5 L1090.0,241.2 L1091.0,240.7 L1092.0,239.6 L1093.0,241.4 L1094.0,241.8 L1095.0,237.4 L1096.0,239.4 L1097.0,238.3 L1098.0,240.4 L1099.0,239.5 L1100.0,238.8 L1101.0,241.5 L1102.0,237.4 L1103.0,238.7 L1104.0,235.0 L1105.0,237.2 L1106.0,238.3 L1107.0,237.8 L1108.0,241.7 L1109.0,234.0 L1110.0,235.7 L1111.0,235.9 L1112.0,234.7 L1113.0,234.5 L1114.0,233.3 L1115.0,235.1 L1116.0,234.7 L1117.0,234.8 L1118.0,236.1 L1119.0,239.8 L1120.0,237.8 L1121.0,235.2 L1122.0,234.8 L1123.0,230.1 L1124.0,236.5 L1125.0,236.3 L1126.0,234.2 L1127.0,234.5 L1128.0,232.7 L1129.0,231.0 L1130.0,233.7 L1131.0,232.2 L1132.0,233.7 L1133.0,232.3 L1134.0,233.3 L1135.0,233.9 L1136.0,234.2 L1137.0,230.0 L1138.0,230.7 L1139.0,228.8 L1140.0,231.5 L1141.0,230.0 L1142.0,231.1 L1143.0,230.9 L1144.0,231.7 L1145.0,231.0 L1146.0,227.7 L1147.0,230.8 L1148.0,232.0 L1149.0,231.0 L1150.0,233.4 L1151.0,227.4 L1152.0,230.0 L1153.0,229.8 L1154.0,227.8 L1155.0,227.4 L1156.0,229.5 L1157.0,229.2 L1158.0,231.9 L1159.0,233.5 L1160.0,228.6 L1161.0,226.4 L1162.0,225.3 L1163.0,225.6 L1164.0,226.8 L1165.0,229.6 L1166.0,228.2 L1167.0,227.2 L1168.0,228.6 L1169.0,227.0 L1170.0,227.4 L1171.0,228.1 L1172.0,226.4 L1173.0,229.6 L1174.0,222.9 L1175.0,224.7 L1176.0,225.5 L1177.0,229.4 L1178.0,225.7 L1179.0,224.3 L1180.0,225.1 L1181.0,226.7 L1182.0,227.1 L1183.0,224.9 L1184.0,223.3 L1185.0,226.7 L1186.0,225.7 L1187.0,223.5 L1188.0,222.5 L1189.0,224.8 L1190.0,223.3 L1191.0,225.7 L1192.0,223.7 L1193.0,226.0 L1194.0,223.1 L1195.0,220.1 L1196.0,222.9 L1197.0,224.1 L1198.0,227.2 L1199.0,221.8 L1200.0,223.1 L1201.0,223.4 L1202.0,219.8 L1203.0,223.5 L1204.0,222.2 L1205.0,222.3 L1206.0,222.7 L1207.0,228.7 L1208.0,220.1 L1209.0,222.9 L1210.0,219.6 L1211.0,220.5 L1212.0,220.8 L1213.0,218.5 L1214.0,222.2 L1215.0,219.3 L1216.0,222.5 L1217.0,222.3 L1218.0,220.3 L1219.0,219.6 L1220.0,222.8 L1221.0,220.4 L1222.0,221.9 L1223.0,221.6 L1224.0,220.5 L1225.0,220.2 L1226.0,220.3 L1227.0,219.1 L1228.0,218.3 L1229.0,222.3 L1230.0,216.2 L1231.0,220.5 L1232.0,216.9 L1233.0,219.9 L1234.0,218.1 L1235.0,218.6 L1236.0,219.5 L1237.0,218.1 L1238.0,217.3 L1239.0,218.5 L1240.0,219.1 L1241.0,216.9 L1242.0,216.6 L1243.0,217.8 L1244.0,217.7 L1245.0,215.2 L1246.0,217.3 L1247.0,220.0 L1248.0,217.5 L1249.0,214.2 L1250.0,215.6 L1251.0,215.9 L1252.0,216.6 L1253.0,215.1 L1254.0,217.7 L1255.0,216.0 L1256.0,214.8 L1257.0,219.0 L1258.0,218.3 L1259.0,216.3 L1260.0,213.5 L1261.0,215.7 L1262.0,215.3 L1263.0,215.0 L1264.0,214.0 L1265.0,214.9 L1266.0,215.5 L1267.0,216.4 L1268.0,212.6 L1269.0,211.4 L1270.0,214.3 L1271.0,215.4 L1272.0,210.9 L1273.0,214.3 L1274.0,213.2 L1275.0,217.4 L1276.0,212.5 L1277.0,211.8 L1278.0,212.5 L1279.0,211.7 L1280.0,211.2 L1281.0,212.2 L1282.0,214.0 L1283.0,211.9 L1284.0,215.2 L1285.0,214.3 L1286.0,211.8 L1287.0,211.2 L1288.0,209.9 L1289.0,213.3 L1290.0,208.8 L1291.0,210.5 L1292.0,209.3 L1293.0,211.5 L1294.0,211.2 L1295.0,209.3 L1296.0,206.9 L1297.0,210.1 L1298.0,209.6 L1299.0,211.1 L1300.0,211.5 L1301.0,210.3 L1302.0,212.1 L1303.0,210.4 L1304.0,211.0 L1305.0,210.0 L1306.0,210.5 L1307.0,210.8 L1308.0,209.5 L1309.0,209.2 L1310.0,209.8 L1311.0,210.5 L1312.0,207.7 L1313.0,210.4 L1314.0,208.5 L1315.0,209.5 L1316.0,206.6 L1317.0,205.5 L1318.0,208.3 L1319.0,206.7 L1320.0,209.7 L1321.0,208.6 L1322.0,207.3 L1323.0,207.0 L1324.0,208.8 L1325.0,208.1 L1326.0,207.1 L1327.0,207.3 L1328.0,207.7 L1329.0,206.3 L1330.0,206.6 L1331.0,208.5 L1332.0,207.8 L1333.0,206.0 L1334.0,207.8 L1335.0,208.1 L1336.0,204.3 L1337.0,206.2 L1338.0,203.7 L1339.0,206.1 L1340.0,203.2 L1341.0,203.8 L1342.0,204.4 L1343.0,208.5 L1344.0,204.0 L1345.0,208.3 L1346.0,203.5 L1347.0,206.6 L1348.0,207.7 L1349.0,204.5 L1350.0,205.6 L1351.0,204.8 L1352.0,205.6 L1353.0,204.4 L1354.0,204.6 L1355.0,203.4 L1356.0,203.8 L1357.0,205.0 L1358.0,204.2 L1359.0,201.6 L1360.0,207.0 L1361.0,201.1 L1362.0,204.1 L1363.0,201.9 L1364.0,201.8 L1365.0,202.9 L1366.0,203.7 L1367.0,201.1 L1368.0,204.2 L1369.0,203.3 L1370.0,202.6 L1371.0,202.6 L1372.0,204.5 L1373.0,202.2 L1374.0,203.6 L1375.0,201.2 L1376.0,202.5 L1377.0,202.9 L1378.0,200.9 L1379.0,203.1 L1380.0,202.0 L1381.0,202.0 L1382.0,203.0 L1383.0,202.6 L1384.0,200.4 L1385.0,198.2 L1386.0,202.3 L1387.0,199.8 L1388.0,205.3 L1389.0,200.4 L1390.0,197.8 L1391.0,200.4 L1392.0,200.9 L1393.0,200.5 L1394.0,197.8 L1395.0,200.4 L1396.0,198.2 L1397.0,200.8 L1398.0,197.8 L1399.0,197.3 L1400.0,199.0 L1401.0,199.9 L1402.0,199.6 L1403.0,199.9 L1404.0,201.8 L1405.0,199.8 L1406.0,200.7 L1407.0,201.0 L1408.0,198.7 L1409.0,203.5 L1410.0,198.1 L1411.0,199.8 L1412.0,200.0 L1413.0,196.2 L1414.0,200.8 L1415.0,197.5 L1416.0,200.3 L1417.0,199.5 L1418.0,199.1 L1419.0,195.3 L1420.0,198.9 L1421.0,198.4 L1422.0,198.4 L1423.0,198.9 L1424.0,198.1 L1425.0,197.3 L1426.0,197.4 L1427.0,198.3 L1428.0,199.6 L1429.0,198.1 L1430.0,197.8 L1431.0,198.4 L1432.0,198.6 L1433.0,198.9 L1434.0,199.0 L1435.0,192.9 L1436.0,196.5 L1437.0,197.8 L1438.0,196.3 L1439.0,198.1 L1440.0,197.9 L1441.0,197.0 L1442.0,195.5 L1443.0,196.9 L1444.0,197.9 L1445.0,198.9 L1446.0,196.2 L1447.0,196.4 L1448.0,192.8 L1449.0,195.8 L1450.0,196.6 L1451.0,195.7 L1452.0,195.8 L1453.0,199.3 L1454.0,197.6 L1455.0,195.4 L1456.0,197.9 L1457.0,193.7 L1458.0,196.7 L1459.0,195.2 L1460.0,195.4 L1461.0,196.4 L1462.0,197.4 L1463.0,195.8 L1464.0,197.1 L1465.0,197.0 L1466.0,194.6 L1467.0,197.3 L1468.0,197.8 L1469.0,196.3 L1470.0,193.7 L1471.0,192.7 L1472.0,195.4 L1473.0,195.6 L1474.0,195.6 L1475.0,195.1 L1476.0,196.6 L1477.0,195.0 L1478.0,194.6 L1479.0,194.1 L1480.0,195.3 L1481.0,194.8 L1482.0,194.4 L1483.0,195.1 L1484.0,192.2 L1485.0,192.9 L1486.0,194.2 L1487.0,193.4 L1488.0,193.1 L1489.0,194.9 L1490.0,191.6 L1491.0,195.8 L1492.0,194.0 L1493.0,195.0 L1494.0,194.7 L1495.0,191.0 L1496.0,195.1 L1497.0,194.1 L1498.0,193.5 L1499.0,194.8 L1500.0,192.9 L1501.0,193.2 L1502.0,194.0 L1503.0,193.3 L1504.0,194.8 L1505.0,192.4 L1506.0,193.3 L1507.0,201.0 L1511.0,139.0 L1512.0,100.0" fill="none" stroke="#d62728" stroke-width="3.4" stroke-linejoin="miter" stroke-miterlimit="2" clip-path="url(#c2)" shape-rendering="crispEdges"/>
<path d="M1059.0,430.0 L1061.0,418.0 L1064.0,330.0 L1067.0,288.0 L1068.0,288.8 L1069.0,289.2 L1070.0,289.4 L1071.0,290.3 L1072.0,290.8 L1073.0,293.0 L1074.0,292.2 L1075.0,294.3 L1076.0,294.1 L1077.0,292.6 L1078.0,294.1 L1079.0,293.1 L1080.0,293.0 L1081.0,297.0 L1082.0,295.6 L1083.0,294.1 L1084.0,296.1 L1085.0,296.4 L1086.0,299.8 L1087.0,300.4 L1088.0,303.1 L1089.0,304.6 L1090.0,306.2 L1091.0,305.7 L1092.0,308.4 L1093.0,305.6 L1094.0,310.2 L1095.0,310.1 L1096.0,310.6 L1097.0,312.9 L1098.0,312.1 L1099.0,315.8 L1100.0,315.0 L1101.0,315.8 L1102.0,316.7 L1103.0,316.9 L1104.0,315.9 L1105.0,314.0 L1106.0,315.8 L1107.0,313.2 L1108.0,313.8 L1109.0,314.2 L1110.0,313.9 L1111.0,313.4 L1112.0,315.0 L1113.0,312.1 L1114.0,313.4 L1115.0,313.1 L1116.0,310.7 L1117.0,309.3 L1118.0,310.9 L1119.0,311.5 L1120.0,313.4 L1121.0,310.0 L1122.0,310.0 L1123.0,316.0 L1124.0,308.1 L1125.0,312.0 L1126.0,308.7 L1127.0,308.0 L1128.0,309.2 L1129.0,308.1 L1130.0,310.4 L1131.0,311.1 L1132.0,307.3 L1133.0,309.2 L1134.0,308.0 L1135.0,306.4 L1136.0,309.3 L1137.0,309.7 L1138.0,305.7 L1139.0,311.5 L1140.0,306.0 L1141.0,309.9 L1142.0,306.9 L1143.0,306.5 L1144.0,308.2 L1145.0,307.3 L1146.0,308.1 L1147.0,310.1 L1148.0,302.3 L1149.0,303.1 L1150.0,306.1 L1151.0,304.6 L1152.0,305.1 L1153.0,307.0 L1154.0,305.1 L1155.0,304.0 L1156.0,306.6 L1157.0,303.1 L1158.0,304.5 L1159.0,303.1 L1160.0,302.5 L1161.0,300.4 L1162.0,304.8 L1163.0,304.4 L1164.0,300.1 L1165.0,300.4 L1166.0,301.5 L1167.0,303.1 L1168.0,303.3 L1169.0,301.7 L1170.0,305.3 L1171.0,300.0 L1172.0,300.5 L1173.0,302.4 L1174.0,303.5 L1175.0,301.2 L1176.0,304.5 L1177.0,301.9 L1178.0,302.6 L1179.0,302.7 L1180.0,303.9 L1181.0,299.5 L1182.0,298.6 L1183.0,300.0 L1184.0,300.6 L1185.0,297.5 L1186.0,301.2 L1187.0,301.2 L1188.0,302.1 L1189.0,298.2 L1190.0,300.8 L1191.0,300.5 L1192.0,301.4 L1193.0,299.6 L1194.0,301.3 L1195.0,298.3 L1196.0,296.9 L1197.0,295.8 L1198.0,300.8 L1199.0,298.6 L1200.0,299.1 L1201.0,301.2 L1202.0,300.3 L1203.0,300.8 L1204.0,295.7 L1205.0,298.7 L1206.0,297.5 L1207.0,300.9 L1208.0,299.4 L1209.0,301.0 L1210.0,299.9 L1211.0,297.6 L1212.0,299.0 L1213.0,299.5 L1214.0,295.8 L1215.0,299.3 L1216.0,297.6 L1217.0,295.5 L1218.0,298.0 L1219.0,297.6 L1220.0,295.8 L1221.0,298.8 L1222.0,298.5 L1223.0,296.8 L1224.0,296.4 L1225.0,299.0 L1226.0,297.3 L1227.0,295.1 L1228.0,295.5 L1229.0,297.5 L1230.0,294.7 L1231.0,297.2 L1232.0,296.8 L1233.0,296.5 L1234.0,293.9 L1235.0,294.9 L1236.0,294.6 L1237.0,293.1 L1238.0,297.0 L1239.0,296.3 L1240.0,294.4 L1241.0,292.4 L1242.0,296.8 L1243.0,292.1 L1244.0,293.9 L1245.0,291.9 L1246.0,293.6 L1247.0,294.9 L1248.0,291.6 L1249.0,295.7 L1250.0,292.5 L1251.0,294.3 L1252.0,294.9 L1253.0,293.6 L1254.0,294.8 L1255.0,292.1 L1256.0,291.1 L1257.0,294.4 L1258.0,292.4 L1259.0,291.9 L1260.0,291.4 L1261.0,295.5 L1262.0,293.6 L1263.0,290.8 L1264.0,290.1 L1265.0,291.8 L1266.0,290.8 L1267.0,291.3 L1268.0,291.5 L1269.0,293.4 L1270.0,289.5 L1271.0,294.2 L1272.0,292.2 L1273.0,292.3 L1274.0,291.4 L1275.0,291.4 L1276.0,291.1 L1277.0,289.9 L1278.0,289.9 L1279.0,287.7 L1280.0,287.5 L1281.0,293.2 L1282.0,290.2 L1283.0,290.1 L1284.0,290.9 L1285.0,290.2 L1286.0,291.0 L1287.0,288.5 L1288.0,289.5 L1289.0,287.5 L1290.0,289.7 L1291.0,288.4 L1292.0,288.7 L1293.0,289.1 L1294.0,286.3 L1295.0,286.5 L1296.0,288.0 L1297.0,287.4 L1298.0,287.5 L1299.0,280.8 L1300.0,288.7 L1301.0,289.9 L1302.0,285.6 L1303.0,286.2 L1304.0,287.7 L1305.0,288.3 L1306.0,284.4 L1307.0,285.3 L1308.0,287.3 L1309.0,287.6 L1310.0,287.1 L1311.0,288.6 L1312.0,284.9 L1313.0,287.7 L1314.0,284.5 L1315.0,283.2 L1316.0,284.6 L1317.0,285.5 L1318.0,284.5 L1319.0,285.6 L1320.0,283.6 L1321.0,282.6 L1322.0,284.3 L1323.0,284.3 L1324.0,285.6 L1325.0,285.7 L1326.0,287.1 L1327.0,284.4 L1328.0,284.1 L1329.0,284.9 L1330.0,286.0 L1331.0,284.3 L1332.0,281.6 L1333.0,283.3 L1334.0,282.1 L1335.0,281.6 L1336.0,283.9 L1337.0,285.4 L1338.0,283.4 L1339.0,280.5 L1340.0,282.7 L1341.0,284.6 L1342.0,284.1 L1343.0,283.7 L1344.0,283.4 L1345.0,282.5 L1346.0,283.2 L1347.0,286.3 L1348.0,287.2 L1349.0,282.7 L1350.0,281.5 L1351.0,282.9 L1352.0,281.9 L1353.0,286.5 L1354.0,281.6 L1355.0,282.4 L1356.0,281.5 L1357.0,282.0 L1358.0,282.7 L1359.0,279.1 L1360.0,281.4 L1361.0,283.4 L1362.0,283.9 L1363.0,282.3 L1364.0,279.8 L1365.0,281.3 L1366.0,277.2 L1367.0,280.7 L1368.0,284.5 L1369.0,282.8 L1370.0,280.3 L1371.0,282.1 L1372.0,280.1 L1373.0,280.2 L1374.0,281.0 L1375.0,281.1 L1376.0,278.2 L1377.0,281.1 L1378.0,279.5 L1379.0,280.0 L1380.0,280.7 L1381.0,278.2 L1382.0,278.0 L1383.0,283.1 L1384.0,280.9 L1385.0,278.6 L1386.0,278.8 L1387.0,279.5 L1388.0,278.6 L1389.0,278.3 L1390.0,278.5 L1391.0,278.8 L1392.0,284.3 L1393.0,276.6 L1394.0,278.3 L1395.0,277.9 L1396.0,278.4 L1397.0,279.6 L1398.0,277.9 L1399.0,278.0 L1400.0,281.7 L1401.0,276.0 L1402.0,279.0 L1403.0,278.9 L1404.0,279.2 L1405.0,272.5 L1406.0,272.0 L1407.0,276.4 L1408.0,278.4 L1409.0,276.7 L1410.0,274.2 L1411.0,278.3 L1412.0,279.4 L1413.0,273.5 L1414.0,276.2 L1415.0,274.7 L1416.0,275.1 L1417.0,276.3 L1418.0,276.6 L1419.0,277.5 L1420.0,280.2 L1421.0,276.6 L1422.0,277.4 L1423.0,274.6 L1424.0,280.7 L1425.0,277.6 L1426.0,276.9 L1427.0,273.4 L1428.0,280.7 L1429.0,276.2 L1430.0,275.7 L1431.0,275.4 L1432.0,276.1 L1433.0,275.6 L1434.0,274.9 L1435.0,273.7 L1436.0,274.9 L1437.0,274.3 L1438.0,274.5 L1439.0,274.6 L1440.0,272.9 L1441.0,275.5 L1442.0,271.4 L1443.0,271.8 L1444.0,276.5 L1445.0,276.0 L1446.0,271.3 L1447.0,271.6 L1448.0,276.6 L1449.0,275.6 L1450.0,275.5 L1451.0,274.2 L1452.0,276.0 L1453.0,275.9 L1454.0,272.2 L1455.0,272.8 L1456.0,275.6 L1457.0,274.5 L1458.0,276.6 L1459.0,272.2 L1460.0,275.9 L1461.0,274.2 L1462.0,275.0 L1463.0,275.2 L1464.0,272.8 L1465.0,273.2 L1466.0,274.6 L1467.0,273.3 L1468.0,271.3 L1469.0,273.4 L1470.0,274.6 L1471.0,273.6 L1472.0,272.1 L1473.0,272.5 L1474.0,273.8 L1475.0,273.7 L1476.0,274.2 L1477.0,270.1 L1478.0,271.1 L1479.0,270.9 L1480.0,274.0 L1481.0,275.0 L1482.0,266.7 L1483.0,272.7 L1484.0,271.7 L1485.0,270.7 L1486.0,273.6 L1487.0,270.2 L1488.0,272.7 L1489.0,270.3 L1490.0,274.0 L1491.0,271.4 L1492.0,271.3 L1493.0,269.6 L1494.0,272.5 L1495.0,273.8 L1496.0,273.3 L1497.0,272.0 L1498.0,271.1 L1499.0,267.0 L1500.0,269.8 L1501.0,271.3 L1502.0,270.6 L1503.0,269.6 L1504.0,270.5 L1505.0,273.9 L1506.0,270.3 L1507.0,281.0 L1512.0,139.0 L1513.0,100.0" fill="none" stroke="#9467bd" stroke-width="3.4" stroke-linejoin="miter" stroke-miterlimit="2" clip-path="url(#c2)" shape-rendering="crispEdges"/>
<path d="M1062.0,430.0 L1064.0,418.0 L1066.0,380.0 L1069.0,360.0 L1072.0,347.0 L1073.0,347.4 L1074.0,345.8 L1075.0,341.3 L1076.0,346.4 L1077.0,342.2 L1078.0,343.8 L1079.0,343.6 L1080.0,341.1 L1081.0,343.5 L1082.0,343.8 L1083.0,344.1 L1084.0,343.3 L1085.0,345.3 L1086.0,342.8 L1087.0,344.5 L1088.0,346.0 L1089.0,345.5 L1090.0,348.0 L1091.0,346.4 L1092.0,347.8 L1093.0,348.6 L1094.0,345.6 L1095.0,350.9 L1096.0,349.1 L1097.0,347.9 L1098.0,347.3 L1099.0,349.7 L1100.0,346.7 L1101.0,348.5 L1102.0,346.9 L1103.0,348.3 L1104.0,347.9 L1105.0,348.1 L1106.0,348.7 L1107.0,349.1 L1108.0,349.5 L1109.0,349.2 L1110.0,346.5 L1111.0,346.4 L1112.0,350.1 L1113.0,347.7 L1114.0,346.9 L1115.0,347.1 L1116.0,348.0 L1117.0,351.2 L1118.0,349.6 L1119.0,348.1 L1120.0,348.3 L1121.0,347.4 L1122.0,346.8 L1123.0,350.4 L1124.0,350.1 L1125.0,348.2 L1126.0,347.4 L1127.0,348.8 L1128.0,348.0 L1129.0,348.9 L1130.0,349.9 L1131.0,348.3 L1132.0,348.9 L1133.0,348.4 L1134.0,347.6 L1135.0,349.2 L1136.0,347.6 L1137.0,349.5 L1138.0,348.4 L1139.0,347.5 L1140.0,352.9 L1141.0,347.4 L1142.0,348.6 L1143.0,350.6 L1144.0,349.2 L1145.0,349.7 L1146.0,347.9 L1147.0,347.6 L1148.0,349.6 L1149.0,348.0 L1150.0,350.3 L1151.0,345.8 L1152.0,346.9 L1153.0,350.7 L1154.0,349.4 L1155.0,346.9 L1156.0,349.9 L1157.0,350.4 L1158.0,348.1 L1159.0,347.6 L1160.0,350.4 L1161.0,350.2 L1162.0,349.3 L1163.0,350.5 L1164.0,350.1 L1165.0,347.4 L1166.0,351.2 L1167.0,349.5 L1168.0,350.8 L1169.0,349.3 L1170.0,350.1 L1171.0,351.2 L1172.0,348.7 L1173.0,350.5 L1174.0,349.0 L1175.0,345.6 L1176.0,347.7 L1177.0,349.0 L1178.0,350.4 L1179.0,348.9 L1180.0,347.2 L1181.0,350.7 L1182.0,352.5 L1183.0,349.9 L1184.0,349.9 L1185.0,349.2 L1186.0,349.4 L1187.0,349.9 L1188.0,350.2 L1189.0,349.9 L1190.0,347.9 L1191.0,349.1 L1192.0,347.9 L1193.0,349.7 L1194.0,349.6 L1195.0,349.0 L1196.0,348.0 L1197.0,350.0 L1198.0,349.0 L1199.0,349.5 L1200.0,346.7 L1201.0,349.1 L1202.0,348.3 L1203.0,350.0 L1204.0,352.4 L1205.0,350.5 L1206.0,349.1 L1207.0,348.2 L1208.0,347.7 L1209.0,349.8 L1210.0,352.6 L1211.0,353.2 L1212.0,347.3 L1213.0,349.0 L1214.0,350.5 L1215.0,349.8 L1216.0,349.1 L1217.0,345.1 L1218.0,348.4 L1219.0,349.6 L1220.0,346.5 L1221.0,345.0 L1222.0,349.0 L1223.0,350.4 L1224.0,349.6 L1225.0,349.2 L1226.0,348.4 L1227.0,347.3 L1228.0,350.0 L1229.0,348.9 L1230.0,346.6 L1231.0,349.5 L1232.0,348.8 L1233.0,344.4 L1234.0,350.7 L1235.0,346.3 L1236.0,349.3 L1237.0,348.6 L1238.0,349.1 L1239.0,347.7 L1240.0,348.9 L1241.0,348.5 L1242.0,349.7 L1243.0,350.2 L1244.0,345.2 L1245.0,349.6 L1246.0,347.5 L1247.0,349.2 L1248.0,351.6 L1249.0,350.5 L1250.0,350.2 L1251.0,349.4 L1252.0,350.1 L1253.0,354.0 L1254.0,343.4 L1255.0,347.8 L1256.0,351.1 L1257.0,352.2 L1258.0,349.3 L1259.0,350.0 L1260.0,349.6 L1261.0,349.8 L1262.0,350.1 L1263.0,349.3 L1264.0,350.2 L1265.0,349.5 L1266.0,347.7 L1267.0,350.9 L1268.0,347.9 L1269.0,347.3 L1270.0,350.4 L1271.0,349.6 L1272.0,347.6 L1273.0,349.0 L1274.0,354.6 L1275.0,349.6 L1276.0,347.4 L1277.0,349.6 L1278.0,346.5 L1279.0,349.4 L1280.0,348.4 L1281.0,349.1 L1282.0,350.8 L1283.0,346.3 L1284.0,351.1 L1285.0,347.8 L1286.0,346.2 L1287.0,350.6 L1288.0,350.0 L1289.0,347.0 L1290.0,350.7 L1291.0,351.5 L1292.0,348.1 L1293.0,348.7 L1294.0,353.1 L1295.0,350.3 L1296.0,348.0 L1297.0,347.4 L1298.0,349.6 L1299.0,347.8 L1300.0,347.7 L1301.0,348.2 L1302.0,349.2 L1303.0,349.6 L1304.0,346.0 L1305.0,347.3 L1306.0,350.8 L1307.0,350.5 L1308.0,343.5 L1309.0,348.4 L1310.0,350.0 L1311.0,346.6 L1312.0,344.8 L1313.0,347.8 L1314.0,347.5 L1315.0,346.7 L1316.0,348.8 L1317.0,347.7 L1318.0,349.0 L1319.0,353.0 L1320.0,347.0 L1321.0,350.5 L1322.0,351.0 L1323.0,347.8 L1324.0,345.0 L1325.0,348.9 L1326.0,347.9 L1327.0,348.2 L1328.0,347.2 L1329.0,348.8 L1330.0,347.9 L1331.0,347.1 L1332.0,349.6 L1333.0,344.3 L1334.0,349.1 L1335.0,346.8 L1336.0,346.2 L1337.0,346.9 L1338.0,346.3 L1339.0,348.3 L1340.0,345.1 L1341.0,344.5 L1342.0,346.8 L1343.0,351.5 L1344.0,348.0 L1345.0,345.7 L1346.0,348.5 L1347.0,345.1 L1348.0,347.2 L1349.0,346.3 L1350.0,345.7 L1351.0,346.2 L1352.0,346.9 L1353.0,345.4 L1354.0,346.7 L1355.0,347.6 L1356.0,346.9 L1357.0,350.0 L1358.0,345.4 L1359.0,345.4 L1360.0,346.3 L1361.0,346.5 L1362.0,346.0 L1363.0,344.5 L1364.0,348.8 L1365.0,347.8 L1366.0,346.9 L1367.0,346.5 L1368.0,347.4 L1369.0,348.5 L1370.0,344.0 L1371.0,346.0 L1372.0,344.8 L1373.0,345.5 L1374.0,346.6 L1375.0,344.0 L1376.0,345.6 L1377.0,345.6 L1378.0,346.2 L1379.0,346.9 L1380.0,344.2 L1381.0,344.8 L1382.0,345.2 L1383.0,346.0 L1384.0,344.9 L1385.0,342.8 L1386.0,345.5 L1387.0,346.3 L1388.0,343.7 L1389.0,344.8 L1390.0,343.4 L1391.0,346.9 L1392.0,346.0 L1393.0,342.8 L1394.0,346.1 L1395.0,347.4 L1396.0,343.4 L1397.0,341.5 L1398.0,345.0 L1399.0,346.6 L1400.0,345.3 L1401.0,344.1 L1402.0,347.9 L1403.0,345.1 L1404.0,346.6 L1405.0,346.6 L1406.0,344.6 L1407.0,345.9 L1408.0,346.9 L1409.0,343.1 L1410.0,344.5 L1411.0,344.0 L1412.0,344.2 L1413.0,345.8 L1414.0,341.6 L1415.0,346.0 L1416.0,345.3 L1417.0,343.8 L1418.0,342.7 L1419.0,345.1 L1420.0,345.8 L1421.0,344.4 L1422.0,342.9 L1423.0,344.2 L1424.0,343.6 L1425.0,343.4 L1426.0,341.1 L1427.0,346.2 L1428.0,340.6 L1429.0,345.3 L1430.0,342.7 L1431.0,342.6 L1432.0,343.6 L1433.0,343.9 L1434.0,344.7 L1435.0,343.9 L1436.0,344.3 L1437.0,342.7 L1438.0,346.3 L1439.0,343.6 L1440.0,344.1 L1441.0,346.9 L1442.0,341.9 L1443.0,344.0 L1444.0,345.3 L1445.0,344.8 L1446.0,343.6 L1447.0,341.7 L1448.0,343.6 L1449.0,345.0 L1450.0,345.0 L1451.0,342.9 L1452.0,340.6 L1453.0,346.0 L1454.0,342.5 L1455.0,341.6 L1456.0,340.5 L1457.0,343.3 L1458.0,344.1 L1459.0,344.1 L1460.0,345.0 L1461.0,339.6 L1462.0,342.2 L1463.0,342.1 L1464.0,341.4 L1465.0,340.9 L1466.0,347.1 L1467.0,344.4 L1468.0,343.8 L1469.0,341.7 L1470.0,344.8 L1471.0,339.9 L1472.0,340.3 L1473.0,346.4 L1474.0,344.6 L1475.0,343.4 L1476.0,341.2 L1477.0,343.5 L1478.0,346.2 L1479.0,345.7 L1480.0,343.2 L1481.0,341.4 L1482.0,343.1 L1483.0,343.5 L1484.0,343.3 L1485.0,342.9 L1486.0,345.5 L1487.0,342.5 L1488.0,341.0 L1489.0,342.6 L1490.0,342.6 L1491.0,343.8 L1492.0,343.4 L1493.0,343.8 L1494.0,343.4 L1495.0,341.1 L1496.0,342.9 L1497.0,343.1 L1498.0,343.0 L1499.0,343.0 L1500.0,344.0 L1501.0,341.9 L1502.0,342.3 L1503.0,339.6 L1504.0,342.8 L1505.0,347.4 L1506.0,341.4 L1508.0,356.0 L1515.0,139.0 L1516.0,100.0" fill="none" stroke="#1f77b4" stroke-width="3.9" stroke-linejoin="miter" stroke-miterlimit="2" clip-path="url(#c2)" shape-rendering="crispEdges"/>
<path d="M1061.0,430.0 L1063.0,418.0 L1065.0,390.0 L1066.0,372.0 L1068.0,368.0 L1069.0,371.0 L1070.0,362.0 L1072.0,349.0 L1074.0,347.0 L1075.0,347.0 L1076.0,347.9 L1077.0,347.8 L1078.0,347.2 L1079.0,348.2 L1080.0,345.1 L1081.0,346.5 L1082.0,346.0 L1083.0,348.4 L1084.0,348.1 L1085.0,347.4 L1086.0,351.0 L1087.0,352.7 L1088.0,348.5 L1089.0,351.1 L1090.0,351.3 L1091.0,352.8 L1092.0,351.7 L1093.0,352.5 L1094.0,350.4 L1095.0,350.6 L1096.0,350.4 L1097.0,347.7 L1098.0,349.9 L1099.0,352.8 L1100.0,354.0 L1101.0,346.3 L1102.0,354.1 L1103.0,350.2 L1104.0,346.3 L1105.0,349.1 L1106.0,348.5 L1107.0,350.5 L1108.0,350.2 L1109.0,348.9 L1110.0,352.4 L1111.0,351.3 L1112.0,350.8 L1113.0,352.5 L1114.0,350.5 L1115.0,346.4 L1116.0,353.2 L1117.0,351.7 L1118.0,351.9 L1119.0,352.8 L1120.0,353.4 L1121.0,349.4 L1122.0,352.5 L1123.0,348.6 L1124.0,351.5 L1125.0,353.1 L1126.0,351.5 L1127.0,350.5 L1128.0,353.6 L1129.0,350.7 L1130.0,349.8 L1131.0,348.6 L1132.0,349.1 L1133.0,352.7 L1134.0,351.4 L1135.0,352.8 L1136.0,352.3 L1137.0,352.0 L1138.0,355.9 L1139.0,353.4 L1140.0,353.3 L1141.0,354.6 L1142.0,352.6 L1143.0,352.2 L1144.0,352.8 L1145.0,352.8 L1146.0,354.2 L1147.0,352.2 L1148.0,349.9 L1149.0,352.3 L1150.0,353.2 L1151.0,354.8 L1152.0,351.9 L1153.0,352.3 L1154.0,352.3 L1155.0,354.6 L1156.0,353.6 L1157.0,351.0 L1158.0,352.7 L1159.0,348.2 L1160.0,351.3 L1161.0,353.7 L1162.0,353.9 L1163.0,352.8 L1164.0,353.3 L1165.0,355.5 L1166.0,347.7 L1167.0,352.2 L1168.0,356.4 L1169.0,349.4 L1170.0,356.2 L1171.0,351.4 L1172.0,353.2 L1173.0,354.7 L1174.0,352.8 L1175.0,354.4 L1176.0,357.8 L1177.0,354.0 L1178.0,352.6 L1179.0,352.8 L1180.0,352.6 L1181.0,352.9 L1182.0,352.8 L1183.0,351.3 L1184.0,353.3 L1185.0,352.9 L1186.0,353.5 L1187.0,353.9 L1188.0,354.0 L1189.0,353.7 L1190.0,353.1 L1191.0,351.5 L1192.0,353.2 L1193.0,354.9 L1194.0,350.3 L1195.0,352.4 L1196.0,349.3 L1197.0,354.7 L1198.0,353.7 L1199.0,353.9 L1200.0,353.3 L1201.0,352.2 L1202.0,351.1 L1203.0,350.8 L1204.0,352.3 L1205.0,351.4 L1206.0,352.2 L1207.0,350.8 L1208.0,354.4 L1209.0,349.9 L1210.0,354.3 L1211.0,352.5 L1212.0,352.2 L1213.0,351.2 L1214.0,355.2 L1215.0,352.8 L1216.0,349.4 L1217.0,351.0 L1218.0,352.7 L1219.0,352.0 L1220.0,353.0 L1221.0,352.2 L1222.0,351.3 L1223.0,354.4 L1224.0,348.8 L1225.0,351.1 L1226.0,351.3 L1227.0,351.7 L1228.0,353.9 L1229.0,351.6 L1230.0,354.7 L1231.0,356.3 L1232.0,351.2 L1233.0,351.1 L1234.0,350.9 L1235.0,352.6 L1236.0,351.3 L1237.0,350.4 L1238.0,350.9 L1239.0,352.5 L1240.0,352.6 L1241.0,350.2 L1242.0,352.9 L1243.0,352.7 L1244.0,353.1 L1245.0,348.5 L1246.0,352.6 L1247.0,351.5 L1248.0,353.7 L1249.0,348.9 L1250.0,352.5 L1251.0,352.7 L1252.0,352.5 L1253.0,353.1 L1254.0,351.4 L1255.0,349.2 L1256.0,349.9 L1257.0,353.0 L1258.0,354.6 L1259.0,352.4 L1260.0,351.7 L1261.0,351.6 L1262.0,350.0 L1263.0,353.8 L1264.0,353.3 L1265.0,355.2 L1266.0,353.8 L1267.0,350.8 L1268.0,350.5 L1269.0,351.7 L1270.0,354.0 L1271.0,352.9 L1272.0,351.6 L1273.0,352.1 L1274.0,352.9 L1275.0,353.1 L1276.0,350.3 L1277.0,351.7 L1278.0,355.3 L1279.0,353.6 L1280.0,352.6 L1281.0,353.1 L1282.0,354.3 L1283.0,347.8 L1284.0,352.2 L1285.0,354.2 L1286.0,353.0 L1287.0,353.9 L1288.0,349.6 L1289.0,349.8 L1290.0,351.5 L1291.0,356.3 L1292.0,352.6 L1293.0,350.9 L1294.0,354.1 L1295.0,350.9 L1296.0,352.5 L1297.0,351.0 L1298.0,350.3 L1299.0,352.5 L1300.0,350.1 L1301.0,349.9 L1302.0,353.2 L1303.0,352.7 L1304.0,353.5 L1305.0,353.2 L1306.0,351.0 L1307.0,351.0 L1308.0,349.4 L1309.0,352.0 L1310.0,351.2 L1311.0,351.3 L1312.0,352.3 L1313.0,352.8 L1314.0,353.3 L1315.0,351.2 L1316.0,350.0 L1317.0,352.3 L1318.0,351.9 L1319.0,353.7 L1320.0,349.2 L1321.0,351.4 L1322.0,350.1 L1323.0,348.2 L1324.0,351.9 L1325.0,351.0 L1326.0,348.6 L1327.0,348.2 L1328.0,349.1 L1329.0,350.7 L1330.0,352.6 L1331.0,351.8 L1332.0,351.9 L1333.0,349.2 L1334.0,352.7 L1335.0,352.5 L1336.0,352.9 L1337.0,350.3 L1338.0,350.1 L1339.0,349.3 L1340.0,350.7 L1341.0,351.0 L1342.0,349.7 L1343.0,348.9 L1344.0,348.0 L1345.0,352.7 L1346.0,351.1 L1347.0,348.9 L1348.0,350.3 L1349.0,349.1 L1350.0,349.6 L1351.0,350.0 L1352.0,348.8 L1353.0,355.5 L1354.0,349.9 L1355.0,349.5 L1356.0,349.1 L1357.0,351.8 L1358.0,349.3 L1359.0,351.5 L1360.0,350.2 L1361.0,349.2 L1362.0,350.0 L1363.0,350.0 L1364.0,348.5 L1365.0,349.9 L1366.0,348.7 L1367.0,348.4 L1368.0,350.0 L1369.0,349.8 L1370.0,350.5 L1371.0,350.1 L1372.0,350.9 L1373.0,351.4 L1374.0,351.9 L1375.0,349.5 L1376.0,348.5 L1377.0,349.4 L1378.0,346.6 L1379.0,349.2 L1380.0,349.4 L1381.0,351.7 L1382.0,347.2 L1383.0,348.4 L1384.0,348.7 L1385.0,347.4 L1386.0,349.8 L1387.0,347.5 L1388.0,346.1 L1389.0,349.5 L1390.0,348.4 L1391.0,349.1 L1392.0,351.2 L1393.0,351.2 L1394.0,349.5 L1395.0,348.4 L1396.0,347.6 L1397.0,351.5 L1398.0,345.9 L1399.0,347.3 L1400.0,348.0 L1401.0,348.8 L1402.0,350.0 L1403.0,349.3 L1404.0,348.3 L1405.0,347.3 L1406.0,348.7 L1407.0,349.4 L1408.0,349.6 L1409.0,346.0 L1410.0,349.4 L1411.0,347.1 L1412.0,348.3 L1413.0,346.5 L1414.0,348.0 L1415.0,350.2 L1416.0,348.3 L1417.0,348.9 L1418.0,346.3 L1419.0,347.5 L1420.0,347.7 L1421.0,345.8 L1422.0,347.7 L1423.0,347.2 L1424.0,347.2 L1425.0,349.7 L1426.0,347.7 L1427.0,346.7 L1428.0,348.3 L1429.0,347.8 L1430.0,346.8 L1431.0,347.3 L1432.0,348.1 L1433.0,345.7 L1434.0,345.8 L1435.0,347.1 L1436.0,347.3 L1437.0,348.6 L1438.0,350.0 L1439.0,347.4 L1440.0,346.2 L1441.0,345.3 L1442.0,349.3 L1443.0,345.9 L1444.0,349.1 L1445.0,345.6 L1446.0,347.1 L1447.0,347.9 L1448.0,347.3 L1449.0,349.5 L1450.0,345.2 L1451.0,349.3 L1452.0,348.4 L1453.0,346.7 L1454.0,341.0 L1455.0,345.0 L1456.0,346.6 L1457.0,346.3 L1458.0,342.7 L1459.0,344.9 L1460.0,343.5 L1461.0,345.3 L1462.0,347.0 L1463.0,350.6 L1464.0,345.7 L1465.0,346.7 L1466.0,347.0 L1467.0,347.8 L1468.0,349.9 L1469.0,346.4 L1470.0,349.3 L1471.0,342.5 L1472.0,346.1 L1473.0,347.1 L1474.0,347.6 L1475.0,345.1 L1476.0,343.1 L1477.0,345.7 L1478.0,345.1 L1479.0,345.1 L1480.0,347.1 L1481.0,347.3 L1482.0,348.1 L1483.0,346.2 L1484.0,350.2 L1485.0,345.7 L1486.0,344.6 L1487.0,346.6 L1488.0,344.4 L1489.0,348.2 L1490.0,347.0 L1491.0,345.6 L1492.0,343.8 L1493.0,340.6 L1494.0,346.7 L1495.0,347.4 L1496.0,347.1 L1497.0,345.2 L1498.0,350.9 L1499.0,345.1 L1500.0,345.7 L1501.0,345.6 L1502.0,346.6 L1503.0,345.3 L1504.0,343.1 L1505.0,344.3 L1506.0,344.1 L1508.0,357.0 L1515.5,139.0 L1516.5,100.0" fill="none" stroke="#2ca02c" stroke-width="3.4" stroke-linejoin="miter" stroke-miterlimit="2" clip-path="url(#c2)" shape-rendering="crispEdges"/>
<rect x="1614" y="139" width="1" height="280" fill="#8a8a8a"/>
<rect x="1614" y="418" width="494" height="1" fill="#8a8a8a"/>
<rect x="1614" y="177" width="6" height="1" fill="#8a8a8a"/>
<text x="1609.2" y="181.6" font-size="12" fill="#a2a2a2" text-anchor="end" textLength="43.2" lengthAdjust="spacingAndGlyphs">0.0624</text>
<rect x="1614" y="229" width="6" height="1" fill="#8a8a8a"/>
<text x="1609.2" y="232.9" font-size="12" fill="#a2a2a2" text-anchor="end" textLength="51.2" lengthAdjust="spacingAndGlyphs">0.06235</text>
<rect x="1614" y="280" width="6" height="1" fill="#8a8a8a"/>
<text x="1609.2" y="284.2" font-size="12" fill="#a2a2a2" text-anchor="end" textLength="43.2" lengthAdjust="spacingAndGlyphs">0.0623</text>
<rect x="1614" y="331" width="6" height="1" fill="#8a8a8a"/>
<text x="1609.2" y="335.5" font-size="12" fill="#a2a2a2" text-anchor="end" textLength="51.2" lengthAdjust="spacingAndGlyphs">0.06225</text>
<rect x="1614" y="382" width="6" height="1" fill="#8a8a8a"/>
<text x="1609.2" y="386.8" font-size="12" fill="#a2a2a2" text-anchor="end" textLength="43.2" lengthAdjust="spacingAndGlyphs">0.0622</text>
<rect x="1615" y="147" width="3" height="1" fill="#cccccc"/>
<rect x="1615" y="157" width="3" height="1" fill="#cccccc"/>
<rect x="1615" y="167" width="3" height="1" fill="#cccccc"/>
<rect x="1615" y="188" width="3" height="1" fill="#cccccc"/>
<rect x="1615" y="198" width="3" height="1" fill="#cccccc"/>
<rect x="1615" y="208" width="3" height="1" fill="#cccccc"/>
<rect x="1615" y="218" width="3" height="1" fill="#cccccc"/>
<rect x="1615" y="239" width="3" height="1" fill="#cccccc"/>
<rect x="1615" y="249" width="3" height="1" fill="#cccccc"/>
<rect x="1615" y="259" width="3" height="1" fill="#cccccc"/>
<rect x="1615" y="270" width="3" height="1" fill="#cccccc"/>
<rect x="1615" y="290" width="3" height="1" fill="#cccccc"/>
<rect x="1615" y="300" width="3" height="1" fill="#cccccc"/>
<rect x="1615" y="311" width="3" height="1" fill="#cccccc"/>
<rect x="1615" y="321" width="3" height="1" fill="#cccccc"/>
<rect x="1615" y="341" width="3" height="1" fill="#cccccc"/>
<rect x="1615" y="352" width="3" height="1" fill="#cccccc"/>
<rect x="1615" y="362" width="3" height="1" fill="#cccccc"/>
<rect x="1615" y="372" width="3" height="1" fill="#cccccc"/>
<rect x="1615" y="393" width="3" height="1" fill="#cccccc"/>
<rect x="1615" y="403" width="3" height="1" fill="#cccccc"/>
<rect x="1615" y="413" width="3" height="1" fill="#cccccc"/>
<rect x="1761" y="412" width="1" height="6" fill="#8a8a8a"/>
<text x="1761.4" y="430" font-size="12" fill="#a2a2a2" text-anchor="middle" textLength="24" lengthAdjust="spacingAndGlyphs">500</text>
<rect x="1927" y="412" width="1" height="6" fill="#8a8a8a"/>
<text x="1926.9" y="430" font-size="12" fill="#a2a2a2" text-anchor="middle" textLength="32" lengthAdjust="spacingAndGlyphs">1000</text>
<rect x="2092" y="412" width="1" height="6" fill="#8a8a8a"/>
<rect x="1629" y="414" width="1" height="4" fill="#cccccc"/>
<rect x="1646" y="414" width="1" height="4" fill="#cccccc"/>
<rect x="1662" y="414" width="1" height="4" fill="#cccccc"/>
<rect x="1679" y="414" width="1" height="4" fill="#cccccc"/>
<rect x="1695" y="414" width="1" height="4" fill="#cccccc"/>
<rect x="1712" y="414" width="1" height="4" fill="#cccccc"/>
<rect x="1728" y="414" width="1" height="4" fill="#cccccc"/>
<rect x="1745" y="414" width="1" height="4" fill="#cccccc"/>
<rect x="1778" y="414" width="1" height="4" fill="#cccccc"/>
<rect x="1794" y="414" width="1" height="4" fill="#cccccc"/>
<rect x="1811" y="414" width="1" height="4" fill="#cccccc"/>
<rect x="1828" y="414" width="1" height="4" fill="#cccccc"/>
<rect x="1844" y="414" width="1" height="4" fill="#cccccc"/>
<rect x="1861" y="414" width="1" height="4" fill="#cccccc"/>
<rect x="1877" y="414" width="1" height="4" fill="#cccccc"/>
<rect x="1894" y="414" width="1" height="4" fill="#cccccc"/>
<rect x="1910" y="414" width="1" height="4" fill="#cccccc"/>
<rect x="1943" y="414" width="1" height="4" fill="#cccccc"/>
<rect x="1960" y="414" width="1" height="4" fill="#cccccc"/>
<rect x="1977" y="414" width="1" height="4" fill="#cccccc"/>
<rect x="1993" y="414" width="1" height="4" fill="#cccccc"/>
<rect x="2010" y="414" width="1" height="4" fill="#cccccc"/>
<rect x="2026" y="414" width="1" height="4" fill="#cccccc"/>
<rect x="2043" y="414" width="1" height="4" fill="#cccccc"/>
<rect x="2059" y="414" width="1" height="4" fill="#cccccc"/>
<rect x="2076" y="414" width="1" height="4" fill="#cccccc"/>
<text x="1549.5" y="279.3" font-size="12" fill="#a2a2a2" text-anchor="middle" transform="rotate(-90 1549.5 279.3)" textLength="7" lengthAdjust="spacingAndGlyphs">T</text>
<path d="M1626.5,430.0 L1627.2,418.0 L1628.2,386.0 L1628.2,385.9 L1629.7,385.1 L1631.2,384.3 L1632.7,384.5 L1634.2,383.7 L1635.7,382.4 L1637.2,383.0 L1638.7,382.6 L1640.2,384.0 L1641.7,384.2 L1643.2,384.5 L1644.7,383.8 L1646.2,384.6 L1647.7,384.7 L1649.2,384.6 L1650.7,384.8 L1652.2,384.8 L1653.7,384.3 L1655.2,385.0 L1656.7,384.8 L1658.2,386.0 L1659.7,385.2 L1661.2,387.3 L1662.7,385.3 L1664.2,385.2 L1665.7,384.3 L1667.2,385.3 L1668.7,383.4 L1670.2,382.7 L1671.7,382.5 L1673.2,381.6 L1674.7,381.8 L1676.2,381.0 L1677.7,381.8 L1679.2,382.9 L1680.7,382.6 L1682.2,383.3 L1683.7,382.7 L1685.2,380.1 L1686.7,380.9 L1688.2,379.9 L1689.7,380.0 L1691.2,379.5 L1692.7,378.9 L1694.2,379.9 L1695.7,379.4 L1697.2,380.2 L1698.7,380.9 L1700.2,380.5 L1701.7,379.2 L1703.2,380.3 L1704.7,378.7 L1706.2,380.0 L1707.7,378.6 L1709.2,379.2 L1710.7,378.4 L1712.2,379.0 L1713.7,378.8 L1715.2,380.8 L1716.7,379.7 L1718.2,380.2 L1719.7,380.1 L1721.2,379.4 L1722.7,379.9 L1724.2,379.0 L1725.7,377.9 L1727.2,376.8 L1728.7,375.7 L1730.2,376.3 L1731.7,376.2 L1733.2,376.3 L1734.7,376.6 L1736.2,376.9 L1737.7,376.9 L1739.2,376.7 L1740.7,376.3 L1742.2,376.1 L1743.7,375.1 L1745.2,377.3 L1746.7,377.2 L1748.2,373.3 L1749.7,375.7 L1751.2,376.7 L1752.7,375.1 L1754.2,378.2 L1755.7,376.3 L1757.2,375.4 L1758.7,375.7 L1760.2,375.1 L1761.7,374.1 L1763.2,373.7 L1764.7,373.9 L1766.2,374.2 L1767.7,373.3 L1769.2,374.4 L1770.7,375.0 L1772.2,375.9 L1773.7,376.9 L1775.2,376.3 L1776.7,375.8 L1778.2,374.8 L1779.7,372.4 L1781.2,372.8 L1782.7,372.5 L1784.2,372.9 L1785.7,373.5 L1787.2,373.3 L1788.7,373.6 L1790.2,373.9 L1791.7,373.8 L1793.2,374.4 L1794.7,374.5 L1796.2,372.9 L1797.7,373.8 L1799.2,372.4 L1800.7,371.9 L1802.2,371.3 L1803.7,370.5 L1805.2,372.2 L1806.7,372.7 L1808.2,372.0 L1809.7,373.0 L1811.2,372.0 L1812.7,372.3 L1814.2,371.7 L1815.7,372.0 L1817.2,371.7 L1818.7,371.1 L1820.2,372.0 L1821.7,371.8 L1823.2,371.3 L1824.7,373.0 L1826.2,371.0 L1827.7,371.6 L1829.2,371.6 L1830.7,371.3 L1832.2,370.7 L1833.7,371.0 L1835.2,370.7 L1836.7,371.0 L1838.2,370.0 L1839.7,371.0 L1841.2,370.5 L1842.7,371.4 L1844.2,370.2 L1845.7,370.6 L1847.2,370.3 L1848.7,370.9 L1850.2,370.5 L1851.7,369.2 L1853.2,368.8 L1854.7,368.9 L1856.2,368.8 L1857.7,367.9 L1859.2,368.9 L1860.7,368.0 L1862.2,369.6 L1863.7,368.3 L1865.2,367.8 L1866.7,367.9 L1868.2,368.7 L1869.7,368.1 L1871.2,367.5 L1872.7,368.2 L1874.2,368.2 L1875.7,367.5 L1877.2,368.0 L1878.7,368.7 L1880.2,368.6 L1881.7,368.8 L1883.2,368.8 L1884.7,368.1 L1886.2,368.2 L1887.7,368.6 L1889.2,369.3 L1890.7,369.2 L1892.2,369.1 L1893.7,368.3 L1895.2,368.5 L1896.7,368.3 L1898.2,369.3 L1899.7,368.7 L1901.2,367.2 L1902.7,368.3 L1904.2,369.2 L1905.7,368.3 L1907.2,369.0 L1908.7,368.8 L1910.2,368.8 L1911.7,368.5 L1913.2,368.6 L1914.7,369.5 L1916.2,368.4 L1917.7,368.6 L1919.2,368.4 L1920.7,369.2 L1922.2,368.8 L1923.7,368.4 L1925.2,368.3 L1926.7,367.1 L1928.2,368.1 L1929.7,367.7 L1931.2,367.8 L1932.7,368.4 L1934.2,368.7 L1935.7,369.2 L1937.2,367.4 L1938.7,368.2 L1940.2,367.7 L1941.7,367.9 L1943.2,367.5 L1944.7,366.9 L1946.2,366.8 L1947.7,367.6 L1949.2,368.0 L1950.7,368.4 L1952.2,366.7 L1953.7,367.4 L1955.2,368.5 L1956.7,366.6 L1958.2,366.3 L1959.7,366.7 L1961.2,366.9 L1962.7,368.2 L1964.2,366.9 L1965.7,365.9 L1967.2,365.7 L1968.7,366.0 L1970.2,365.8 L1971.7,365.5 L1973.2,365.5 L1974.7,365.5 L1976.2,365.3 L1977.7,365.4 L1979.2,365.7 L1980.7,365.7 L1982.2,364.6 L1983.7,364.6 L1985.2,364.3 L1986.7,365.4 L1988.2,364.6 L1989.7,365.3 L1991.2,364.7 L1992.7,363.6 L1994.2,364.9 L1995.7,364.4 L1997.2,365.6 L1998.7,364.6 L2000.2,364.2 L2001.7,363.8 L2003.2,365.8 L2004.7,364.1 L2006.2,366.3 L2007.7,364.4 L2009.2,364.2 L2010.7,364.0 L2012.2,363.1 L2013.7,362.0 L2015.2,364.1 L2016.7,364.3 L2018.2,363.3 L2019.7,363.3 L2021.2,363.1 L2022.7,364.1 L2024.2,364.3 L2025.7,363.7 L2027.2,363.8 L2028.7,364.5 L2030.2,364.0 L2031.7,364.9 L2033.2,363.5 L2034.7,363.6 L2036.2,363.9 L2037.7,363.2 L2039.2,363.4 L2040.7,362.7 L2042.2,364.1 L2043.7,364.3 L2045.2,363.4 L2046.7,363.0 L2048.2,363.3 L2049.7,363.0 L2051.2,362.7 L2052.7,363.1 L2054.2,363.0 L2055.7,363.0 L2057.2,363.3 L2058.7,362.3 L2060.2,363.5 L2061.7,363.4 L2063.2,362.9 L2064.7,362.0 L2066.2,362.1 L2067.7,362.4 L2069.2,362.9 L2070.7,362.2 L2072.2,362.4 L2073.7,362.6 L2075.2,362.7 L2076.7,362.9 L2078.2,362.0 L2081.0,340.0 L2087.5,139.0 L2088.0,100.0" fill="none" stroke="#1f77b4" stroke-width="4.0" stroke-linejoin="miter" stroke-miterlimit="2" clip-path="url(#c3)" shape-rendering="crispEdges"/>
<path d="M1627.0,430.0 L1627.6,418.0 L1628.2,385.2 L1628.2,385.2 L1635.7,381.5 L1641.0,382.6 L1649.6,382.0 L1656.0,381.5 L1662.4,375.6 L1675.2,375.4 L1682.7,383.1 L1689.1,378.8 L1694.4,378.0 L1700.8,379.9 L1708.3,377.2 L1715.8,378.6 L1723.2,378.3 L1728.6,375.6 L1742.5,375.4 L1747.8,373.5 L1754.2,376.2 L1761.7,373.0 L1769.2,373.0 L1774.5,375.6 L1780.9,371.1 L1793.7,373.0 L1801.2,370.1 L1806.5,371.4 L1820.4,370.3 L1827.9,371.1 L1833.2,369.4 L1849.2,369.4 L1854.6,367.6 L1872.8,367.3 L1918.3,367.3 L1952.4,365.6 L1997.9,363.3 L2043.4,362.2 L2079.6,361.0 L2081.0,340.0 L2087.0,139.0 L2087.5,100.0" fill="none" stroke="#2ca02c" stroke-width="2.2" stroke-linejoin="miter" stroke-miterlimit="2" clip-path="url(#c3)" shape-rendering="crispEdges"/>
<path d="M1621.7,430.0 L1622.2,418.0 L1628.8,248.4 L1630.7,247.9 L1636.1,247.9 L1642.5,244.7 L1649.3,246.2 L1655.2,244.7 L1661.0,241.5 L1668.8,238.6 L1675.7,243.0 L1682.5,237.6 L1686.4,236.7 L1696.2,235.7 L1701.1,232.3 L1709.9,232.8 L1714.8,230.8 L1722.6,233.2 L1728.4,227.4 L1735.3,228.4 L1743.1,225.9 L1751.9,225.9 L1753.8,227.1 L1765.4,226.9 L1766.5,225.8 L1775.3,225.8 L1780.8,228.0 L1794.0,222.7 L1798.4,222.0 L1814.8,222.0 L1820.3,219.8 L1829.1,219.8 L1834.6,222.7 L1841.2,217.6 L1847.8,219.8 L1861.0,219.8 L1868.7,216.0 L1874.2,214.8 L1879.7,215.9 L1887.4,215.9 L1889.6,217.0 L1894.0,216.5 L1900.5,212.9 L1907.0,218.7 L1913.7,214.0 L1918.0,215.9 L1934.6,215.9 L1939.0,213.7 L1950.0,212.6 L1956.7,213.5 L1959.6,214.0 L1966.5,208.6 L1973.8,214.0 L1986.0,208.4 L1995.8,211.5 L2001.6,211.5 L2005.5,209.6 L2014.3,209.6 L2020.2,206.2 L2026.1,209.6 L2032.9,203.7 L2039.7,208.1 L2045.6,203.7 L2050.5,204.2 L2058.3,207.1 L2066.1,203.2 L2072.0,206.2 L2079.8,203.2 L2080.5,139.0 L2081.0,100.0" fill="none" stroke="#ff7f0e" stroke-width="2.0" stroke-linejoin="miter" stroke-miterlimit="2" clip-path="url(#c3)" shape-rendering="crispEdges"/>
<path d="M1621.0,430.0 L1621.5,418.0 L1629.0,209.8 L1629.8,209.8 L1634.7,209.3 L1641.5,213.0 L1653.2,213.2 L1655.2,214.2 L1665.0,206.4 L1670.8,203.9 L1674.7,203.0 L1688.4,192.7 L1695.2,198.6 L1702.1,196.1 L1707.9,198.1 L1714.8,193.7 L1721.6,193.2 L1724.5,194.2 L1730.4,194.2 L1735.3,195.1 L1742.1,190.7 L1749.0,190.3 L1756.6,190.1 L1761.0,191.8 L1766.5,189.0 L1774.7,185.7 L1781.3,190.4 L1790.7,189.6 L1797.3,189.0 L1800.5,189.8 L1808.2,186.8 L1816.0,185.4 L1827.0,182.4 L1833.5,185.0 L1841.2,182.4 L1847.8,183.8 L1854.4,181.0 L1861.0,181.6 L1866.5,179.1 L1880.8,179.1 L1887.4,175.3 L1895.0,179.7 L1900.5,180.8 L1912.6,175.5 L1921.4,175.8 L1927.0,174.0 L1933.5,176.6 L1939.0,175.0 L1946.7,170.0 L1948.9,170.0 L1956.7,171.0 L1962.6,173.0 L1967.0,173.9 L1973.3,170.0 L1980.2,171.0 L1987.0,165.1 L1992.9,169.0 L1999.7,171.0 L2005.5,170.0 L2013.4,165.6 L2022.1,166.1 L2032.9,170.0 L2039.7,166.1 L2046.6,165.6 L2057.3,165.6 L2067.1,165.1 L2072.9,168.1 L2079.8,165.6 L2080.3,139.0 L2080.5,100.0" fill="none" stroke="#d62728" stroke-width="2.0" stroke-linejoin="miter" stroke-miterlimit="2" clip-path="url(#c3)" shape-rendering="crispEdges"/>
<path d="M1620.3,430.0 L1620.8,418.0 L1628.3,206.4 L1629.8,206.4 L1632.7,208.8 L1636.6,209.8 L1642.5,207.4 L1648.3,209.3 L1652.2,208.8 L1662.0,204.2 L1665.9,205.6 L1671.8,205.6 L1678.6,203.6 L1683.5,203.9 L1687.4,206.9 L1713.8,206.6 L1719.6,207.8 L1726.5,209.1 L1735.3,204.6 L1742.1,207.8 L1749.9,206.4 L1763.2,206.0 L1765.4,204.7 L1785.2,204.7 L1788.0,203.8 L1795.0,206.0 L1805.0,202.2 L1811.5,200.8 L1818.0,200.8 L1820.9,202.2 L1827.0,200.0 L1838.0,200.0 L1840.7,201.1 L1843.4,200.0 L1854.4,200.0 L1861.0,196.0 L1874.2,200.8 L1880.8,196.0 L1887.4,198.1 L1890.7,196.7 L1898.4,196.0 L1903.8,196.7 L1913.7,198.9 L1917.0,197.8 L1925.8,197.8 L1933.5,196.0 L1940.0,198.4 L1944.5,197.0 L1953.8,197.9 L1961.6,196.9 L1972.3,196.9 L1980.2,199.8 L1986.0,197.4 L1992.9,199.8 L1999.7,199.8 L2006.5,195.1 L2013.4,197.9 L2019.7,193.9 L2026.5,200.3 L2032.9,197.9 L2038.8,199.8 L2046.6,199.8 L2052.4,195.7 L2058.3,196.7 L2066.1,198.8 L2072.0,195.7 L2080.3,195.7 L2082.0,139.0 L2083.0,100.0" fill="none" stroke="#9467bd" stroke-width="2.0" stroke-linejoin="miter" stroke-miterlimit="2" clip-path="url(#c3)" shape-rendering="crispEdges"/>
<rect x="424" y="474" width="1" height="280" fill="#8a8a8a"/>
<rect x="424" y="753" width="549" height="1" fill="#8a8a8a"/>
<rect x="424" y="479" width="6" height="1" fill="#8a8a8a"/>
<text x="419.2" y="483.1" font-size="12" fill="#a2a2a2" text-anchor="end" textLength="19.2" lengthAdjust="spacingAndGlyphs">0.5</text>
<rect x="424" y="552" width="6" height="1" fill="#8a8a8a"/>
<text x="419.2" y="556.6" font-size="12" fill="#a2a2a2" text-anchor="end" textLength="7.2" lengthAdjust="spacingAndGlyphs">0</text>
<rect x="424" y="626" width="6" height="1" fill="#8a8a8a"/>
<text x="419.2" y="630.1" font-size="12" fill="#a2a2a2" text-anchor="end" textLength="23.2" lengthAdjust="spacingAndGlyphs">-0.5</text>
<rect x="424" y="699" width="6" height="1" fill="#8a8a8a"/>
<text x="419.2" y="703.6" font-size="12" fill="#a2a2a2" text-anchor="end" textLength="23.2" lengthAdjust="spacingAndGlyphs">-1.0</text>
<rect x="425" y="751" width="3" height="1" fill="#cccccc"/>
<rect x="425" y="743" width="3" height="1" fill="#cccccc"/>
<rect x="425" y="736" width="3" height="1" fill="#cccccc"/>
<rect x="425" y="729" width="3" height="1" fill="#cccccc"/>
<rect x="425" y="721" width="3" height="1" fill="#cccccc"/>
<rect x="425" y="714" width="3" height="1" fill="#cccccc"/>
<rect x="425" y="707" width="3" height="1" fill="#cccccc"/>
<rect x="425" y="692" width="3" height="1" fill="#cccccc"/>
<rect x="425" y="685" width="3" height="1" fill="#cccccc"/>
<rect x="425" y="677" width="3" height="1" fill="#cccccc"/>
<rect x="425" y="670" width="3" height="1" fill="#cccccc"/>
<rect x="425" y="663" width="3" height="1" fill="#cccccc"/>
<rect x="425" y="655" width="3" height="1" fill="#cccccc"/>
<rect x="425" y="648" width="3" height="1" fill="#cccccc"/>
<rect x="425" y="640" width="3" height="1" fill="#cccccc"/>
<rect x="425" y="633" width="3" height="1" fill="#cccccc"/>
<rect x="425" y="618" width="3" height="1" fill="#cccccc"/>
<rect x="425" y="611" width="3" height="1" fill="#cccccc"/>
<rect x="425" y="604" width="3" height="1" fill="#cccccc"/>
<rect x="425" y="596" width="3" height="1" fill="#cccccc"/>
<rect x="425" y="589" width="3" height="1" fill="#cccccc"/>
<rect x="425" y="582" width="3" height="1" fill="#cccccc"/>
<rect x="425" y="574" width="3" height="1" fill="#cccccc"/>
<rect x="425" y="567" width="3" height="1" fill="#cccccc"/>
<rect x="425" y="560" width="3" height="1" fill="#cccccc"/>
<rect x="425" y="545" width="3" height="1" fill="#cccccc"/>
<rect x="425" y="538" width="3" height="1" fill="#cccccc"/>
<rect x="425" y="530" width="3" height="1" fill="#cccccc"/>
<rect x="425" y="523" width="3" height="1" fill="#cccccc"/>
<rect x="425" y="516" width="3" height="1" fill="#cccccc"/>
<rect x="425" y="508" width="3" height="1" fill="#cccccc"/>
<rect x="425" y="501" width="3" height="1" fill="#cccccc"/>
<rect x="425" y="493" width="3" height="1" fill="#cccccc"/>
<rect x="425" y="486" width="3" height="1" fill="#cccccc"/>
<rect x="484" y="747" width="1" height="6" fill="#8a8a8a"/>
<text x="484.2" y="765" font-size="12" fill="#a2a2a2" text-anchor="middle" textLength="24" lengthAdjust="spacingAndGlyphs">200</text>
<rect x="557" y="747" width="1" height="6" fill="#8a8a8a"/>
<text x="556.8" y="765" font-size="12" fill="#a2a2a2" text-anchor="middle" textLength="24" lengthAdjust="spacingAndGlyphs">400</text>
<rect x="629" y="747" width="1" height="6" fill="#8a8a8a"/>
<text x="629.3" y="765" font-size="12" fill="#a2a2a2" text-anchor="middle" textLength="24" lengthAdjust="spacingAndGlyphs">600</text>
<rect x="702" y="747" width="1" height="6" fill="#8a8a8a"/>
<text x="701.8" y="765" font-size="12" fill="#a2a2a2" text-anchor="middle" textLength="24" lengthAdjust="spacingAndGlyphs">800</text>
<rect x="774" y="747" width="1" height="6" fill="#8a8a8a"/>
<text x="774.4" y="765" font-size="12" fill="#a2a2a2" text-anchor="middle" textLength="32" lengthAdjust="spacingAndGlyphs">1000</text>
<rect x="847" y="747" width="1" height="6" fill="#8a8a8a"/>
<text x="846.9" y="765" font-size="12" fill="#a2a2a2" text-anchor="middle" textLength="32" lengthAdjust="spacingAndGlyphs">1200</text>
<rect x="919" y="747" width="1" height="6" fill="#8a8a8a"/>
<text x="919.4" y="765" font-size="12" fill="#a2a2a2" text-anchor="middle" textLength="32" lengthAdjust="spacingAndGlyphs">1400</text>
<rect x="433" y="749" width="1" height="4" fill="#cccccc"/>
<rect x="441" y="749" width="1" height="4" fill="#cccccc"/>
<rect x="455" y="749" width="1" height="4" fill="#cccccc"/>
<rect x="462" y="749" width="1" height="4" fill="#cccccc"/>
<rect x="470" y="749" width="1" height="4" fill="#cccccc"/>
<rect x="477" y="749" width="1" height="4" fill="#cccccc"/>
<rect x="491" y="749" width="1" height="4" fill="#cccccc"/>
<rect x="499" y="749" width="1" height="4" fill="#cccccc"/>
<rect x="506" y="749" width="1" height="4" fill="#cccccc"/>
<rect x="513" y="749" width="1" height="4" fill="#cccccc"/>
<rect x="528" y="749" width="1" height="4" fill="#cccccc"/>
<rect x="535" y="749" width="1" height="4" fill="#cccccc"/>
<rect x="542" y="749" width="1" height="4" fill="#cccccc"/>
<rect x="550" y="749" width="1" height="4" fill="#cccccc"/>
<rect x="564" y="749" width="1" height="4" fill="#cccccc"/>
<rect x="571" y="749" width="1" height="4" fill="#cccccc"/>
<rect x="579" y="749" width="1" height="4" fill="#cccccc"/>
<rect x="586" y="749" width="1" height="4" fill="#cccccc"/>
<rect x="600" y="749" width="1" height="4" fill="#cccccc"/>
<rect x="608" y="749" width="1" height="4" fill="#cccccc"/>
<rect x="615" y="749" width="1" height="4" fill="#cccccc"/>
<rect x="622" y="749" width="1" height="4" fill="#cccccc"/>
<rect x="637" y="749" width="1" height="4" fill="#cccccc"/>
<rect x="644" y="749" width="1" height="4" fill="#cccccc"/>
<rect x="651" y="749" width="1" height="4" fill="#cccccc"/>
<rect x="658" y="749" width="1" height="4" fill="#cccccc"/>
<rect x="673" y="749" width="1" height="4" fill="#cccccc"/>
<rect x="680" y="749" width="1" height="4" fill="#cccccc"/>
<rect x="687" y="749" width="1" height="4" fill="#cccccc"/>
<rect x="695" y="749" width="1" height="4" fill="#cccccc"/>
<rect x="709" y="749" width="1" height="4" fill="#cccccc"/>
<rect x="716" y="749" width="1" height="4" fill="#cccccc"/>
<rect x="724" y="749" width="1" height="4" fill="#cccccc"/>
<rect x="731" y="749" width="1" height="4" fill="#cccccc"/>
<rect x="745" y="749" width="1" height="4" fill="#cccccc"/>
<rect x="753" y="749" width="1" height="4" fill="#cccccc"/>
<rect x="760" y="749" width="1" height="4" fill="#cccccc"/>
<rect x="767" y="749" width="1" height="4" fill="#cccccc"/>
<rect x="782" y="749" width="1" height="4" fill="#cccccc"/>
<rect x="789" y="749" width="1" height="4" fill="#cccccc"/>
<rect x="796" y="749" width="1" height="4" fill="#cccccc"/>
<rect x="803" y="749" width="1" height="4" fill="#cccccc"/>
<rect x="818" y="749" width="1" height="4" fill="#cccccc"/>
<rect x="825" y="749" width="1" height="4" fill="#cccccc"/>
<rect x="832" y="749" width="1" height="4" fill="#cccccc"/>
<rect x="840" y="749" width="1" height="4" fill="#cccccc"/>
<rect x="854" y="749" width="1" height="4" fill="#cccccc"/>
<rect x="861" y="749" width="1" height="4" fill="#cccccc"/>
<rect x="869" y="749" width="1" height="4" fill="#cccccc"/>
<rect x="876" y="749" width="1" height="4" fill="#cccccc"/>
<rect x="890" y="749" width="1" height="4" fill="#cccccc"/>
<rect x="898" y="749" width="1" height="4" fill="#cccccc"/>
<rect x="905" y="749" width="1" height="4" fill="#cccccc"/>
<rect x="912" y="749" width="1" height="4" fill="#cccccc"/>
<rect x="927" y="749" width="1" height="4" fill="#cccccc"/>
<rect x="934" y="749" width="1" height="4" fill="#cccccc"/>
<rect x="941" y="749" width="1" height="4" fill="#cccccc"/>
<rect x="948" y="749" width="1" height="4" fill="#cccccc"/>
<rect x="963" y="749" width="1" height="4" fill="#cccccc"/>
<rect x="970" y="749" width="1" height="4" fill="#cccccc"/>
<rect x="448" y="748" width="1" height="5" fill="#b8b8b8"/>
<rect x="521" y="748" width="1" height="5" fill="#b8b8b8"/>
<rect x="593" y="748" width="1" height="5" fill="#b8b8b8"/>
<rect x="666" y="748" width="1" height="5" fill="#b8b8b8"/>
<rect x="738" y="748" width="1" height="5" fill="#b8b8b8"/>
<rect x="811" y="748" width="1" height="5" fill="#b8b8b8"/>
<rect x="883" y="748" width="1" height="5" fill="#b8b8b8"/>
<rect x="956" y="748" width="1" height="5" fill="#b8b8b8"/>
<text x="388.9" y="614.9" font-size="12" fill="#a2a2a2" text-anchor="middle" transform="rotate(-90 388.9 614.9)" textLength="31" lengthAdjust="spacingAndGlyphs">E-4 T</text>
<line x1="431" y1="552.5" x2="483" y2="552.5" stroke="#bdbdbd" stroke-width="1" stroke-dasharray="4,3"/>
<path d="M483.0,553.0 L972.5,553.0" fill="none" stroke="#1f77b4" stroke-width="4" stroke-linejoin="miter" stroke-miterlimit="2" clip-path="url(#c4)"/>
<path d="M485.3,566.0 L488.1,564.8 L492.3,564.8 L495.1,563.2 L499.2,561.8 L500.6,558.7 L506.2,550.7 L514.6,555.2 L517.4,553.8 L522.2,553.5 L527.1,551.7 L536.9,551.7 L541.0,553.8 L545.9,553.5 L553.6,550.7 L558.4,550.7 L563.3,553.5 L574.5,553.5 L581.4,551.7 L600.9,551.7 L607.9,555.2 L614.8,552.4 L615.0,551.9 L641.5,551.9 L642.2,553.0 L652.6,553.0 L653.3,553.7 L661.0,553.7 L661.7,555.1 L667.2,555.1 L672.8,551.7 L680.5,555.2 L685.3,553.0 L695.8,553.0 L696.5,553.7 L700.7,553.7 L701.4,555.1 L716.0,555.1 L722.9,551.7 L726.4,551.7 L730.6,555.2 L738.3,550.9 L745.2,555.2 L747.3,553.9 L754.3,553.0 L759.8,550.9 L767.0,549.8 L772.5,550.9 L774.6,552.1 L776.7,550.9 L787.9,550.9 L788.9,549.8 L796.2,550.9 L803.2,555.5 L810.1,551.9 L815.7,551.9 L817.8,553.0 L824.8,549.8 L832.4,554.8 L838.7,551.9 L870.0,551.9 L870.7,550.9 L884.0,550.9 L888.8,553.2 L893.7,552.8 L899.3,550.9 L904.2,548.9 L910.0,550.9 L912.0,552.6 L933.0,552.4 L940.0,548.3 L948.0,555.5 L955.0,546.8 L962.0,545.5 L968.0,548.7 L972.0,551.0" fill="none" stroke="#2ca02c" stroke-width="2.0" stroke-linejoin="miter" stroke-miterlimit="2" clip-path="url(#c4)" shape-rendering="crispEdges"/>
<path d="M498,753 L499.7,750 L501.4,753 Z" fill="#ff7f0e" shape-rendering="geometricPrecision"/>
<rect x="1012" y="474" width="1" height="280" fill="#8a8a8a"/>
<rect x="1012" y="753" width="522" height="1" fill="#8a8a8a"/>
<rect x="1012" y="483" width="6" height="1" fill="#8a8a8a"/>
<text x="1007.2" y="487.3" font-size="12" fill="#a2a2a2" text-anchor="end" textLength="7.2" lengthAdjust="spacingAndGlyphs">2</text>
<rect x="1012" y="527" width="4" height="1" fill="#8a8a8a"/>
<text x="1007.2" y="531.2" font-size="12" fill="#a2a2a2" text-anchor="end" textLength="7.2" lengthAdjust="spacingAndGlyphs">1</text>
<rect x="1012" y="571" width="6" height="1" fill="#8a8a8a"/>
<text x="1007.2" y="575.1" font-size="12" fill="#a2a2a2" text-anchor="end" textLength="7.2" lengthAdjust="spacingAndGlyphs">0</text>
<rect x="1012" y="615" width="4" height="1" fill="#8a8a8a"/>
<text x="1007.2" y="619.0" font-size="12" fill="#a2a2a2" text-anchor="end" textLength="11.2" lengthAdjust="spacingAndGlyphs">-1</text>
<rect x="1012" y="659" width="6" height="1" fill="#8a8a8a"/>
<text x="1007.2" y="662.9" font-size="12" fill="#a2a2a2" text-anchor="end" textLength="11.2" lengthAdjust="spacingAndGlyphs">-2</text>
<rect x="1012" y="702" width="4" height="1" fill="#8a8a8a"/>
<text x="1007.2" y="706.8" font-size="12" fill="#a2a2a2" text-anchor="end" textLength="11.2" lengthAdjust="spacingAndGlyphs">-3</text>
<rect x="1012" y="746" width="6" height="1" fill="#8a8a8a"/>
<text x="1007.2" y="750.7" font-size="12" fill="#a2a2a2" text-anchor="end" textLength="11.2" lengthAdjust="spacingAndGlyphs">-4</text>
<rect x="1013" y="738" width="3" height="1" fill="#cccccc"/>
<rect x="1013" y="729" width="3" height="1" fill="#cccccc"/>
<rect x="1013" y="720" width="3" height="1" fill="#cccccc"/>
<rect x="1013" y="711" width="3" height="1" fill="#cccccc"/>
<rect x="1013" y="694" width="3" height="1" fill="#cccccc"/>
<rect x="1013" y="685" width="3" height="1" fill="#cccccc"/>
<rect x="1013" y="676" width="3" height="1" fill="#cccccc"/>
<rect x="1013" y="667" width="3" height="1" fill="#cccccc"/>
<rect x="1013" y="650" width="3" height="1" fill="#cccccc"/>
<rect x="1013" y="641" width="3" height="1" fill="#cccccc"/>
<rect x="1013" y="632" width="3" height="1" fill="#cccccc"/>
<rect x="1013" y="623" width="3" height="1" fill="#cccccc"/>
<rect x="1013" y="606" width="3" height="1" fill="#cccccc"/>
<rect x="1013" y="597" width="3" height="1" fill="#cccccc"/>
<rect x="1013" y="588" width="3" height="1" fill="#cccccc"/>
<rect x="1013" y="580" width="3" height="1" fill="#cccccc"/>
<rect x="1013" y="562" width="3" height="1" fill="#cccccc"/>
<rect x="1013" y="553" width="3" height="1" fill="#cccccc"/>
<rect x="1013" y="544" width="3" height="1" fill="#cccccc"/>
<rect x="1013" y="536" width="3" height="1" fill="#cccccc"/>
<rect x="1013" y="518" width="3" height="1" fill="#cccccc"/>
<rect x="1013" y="509" width="3" height="1" fill="#cccccc"/>
<rect x="1013" y="501" width="3" height="1" fill="#cccccc"/>
<rect x="1013" y="492" width="3" height="1" fill="#cccccc"/>
<rect x="1013" y="474" width="3" height="1" fill="#cccccc"/>
<rect x="1168" y="747" width="1" height="6" fill="#8a8a8a"/>
<text x="1168.5" y="765" font-size="12" fill="#a2a2a2" text-anchor="middle" textLength="24" lengthAdjust="spacingAndGlyphs">500</text>
<rect x="1344" y="747" width="1" height="6" fill="#8a8a8a"/>
<text x="1343.5" y="765" font-size="12" fill="#a2a2a2" text-anchor="middle" textLength="32" lengthAdjust="spacingAndGlyphs">1000</text>
<rect x="1518" y="747" width="1" height="6" fill="#8a8a8a"/>
<rect x="1028" y="749" width="1" height="4" fill="#cccccc"/>
<rect x="1046" y="749" width="1" height="4" fill="#cccccc"/>
<rect x="1064" y="749" width="1" height="4" fill="#cccccc"/>
<rect x="1081" y="749" width="1" height="4" fill="#cccccc"/>
<rect x="1098" y="749" width="1" height="4" fill="#cccccc"/>
<rect x="1116" y="749" width="1" height="4" fill="#cccccc"/>
<rect x="1134" y="749" width="1" height="4" fill="#cccccc"/>
<rect x="1151" y="749" width="1" height="4" fill="#cccccc"/>
<rect x="1186" y="749" width="1" height="4" fill="#cccccc"/>
<rect x="1204" y="749" width="1" height="4" fill="#cccccc"/>
<rect x="1221" y="749" width="1" height="4" fill="#cccccc"/>
<rect x="1238" y="749" width="1" height="4" fill="#cccccc"/>
<rect x="1256" y="749" width="1" height="4" fill="#cccccc"/>
<rect x="1274" y="749" width="1" height="4" fill="#cccccc"/>
<rect x="1291" y="749" width="1" height="4" fill="#cccccc"/>
<rect x="1308" y="749" width="1" height="4" fill="#cccccc"/>
<rect x="1326" y="749" width="1" height="4" fill="#cccccc"/>
<rect x="1361" y="749" width="1" height="4" fill="#cccccc"/>
<rect x="1378" y="749" width="1" height="4" fill="#cccccc"/>
<rect x="1396" y="749" width="1" height="4" fill="#cccccc"/>
<rect x="1414" y="749" width="1" height="4" fill="#cccccc"/>
<rect x="1431" y="749" width="1" height="4" fill="#cccccc"/>
<rect x="1448" y="749" width="1" height="4" fill="#cccccc"/>
<rect x="1466" y="749" width="1" height="4" fill="#cccccc"/>
<rect x="1484" y="749" width="1" height="4" fill="#cccccc"/>
<rect x="1501" y="749" width="1" height="4" fill="#cccccc"/>
<text x="987.8" y="615" font-size="12" fill="#a2a2a2" text-anchor="middle" transform="rotate(-90 987.8 615)" textLength="31" lengthAdjust="spacingAndGlyphs">E-4 T</text>
<path d="M1014.0,570.8 L1015.5,569.8 L1017.0,572.1 L1018.5,570.9 L1020.0,570.4 L1021.5,570.2 L1023.0,570.5 L1024.5,571.5 L1026.0,571.1 L1027.5,569.1 L1029.0,570.5 L1030.5,570.8 L1032.0,571.7 L1033.5,571.9 L1035.0,570.8 L1036.5,571.2 L1038.0,570.4 L1039.5,571.4 L1041.0,571.3 L1042.5,571.2 L1044.0,570.9 L1045.5,570.2 L1047.0,571.3 L1048.5,570.2 L1050.0,571.1 L1051.5,570.5 L1053.0,570.2 L1054.5,570.7 L1056.0,571.7 L1057.5,570.8 L1059.0,571.0 L1060.5,572.1 L1062.0,571.3 L1063.5,570.7 L1065.0,570.8 L1066.5,571.0 L1068.0,571.1 L1069.5,570.1 L1071.0,571.1 L1072.5,570.8 L1074.0,570.8 L1075.5,570.7 L1077.0,569.0 L1078.5,570.6 L1080.0,571.7 L1081.5,570.9 L1083.0,571.3 L1084.5,570.7 L1086.0,570.3 L1087.5,570.3 L1089.0,570.8 L1090.5,570.4 L1092.0,572.0 L1093.5,571.0 L1095.0,572.1 L1096.5,571.0 L1098.0,570.4 L1099.5,570.9 L1101.0,570.9 L1102.5,571.0 L1104.0,571.3 L1105.5,571.1 L1107.0,571.3 L1108.5,571.1 L1110.0,570.6 L1111.5,571.3 L1113.0,570.9 L1114.5,569.1 L1116.0,570.4 L1117.5,571.2 L1119.0,570.0 L1120.5,570.9 L1122.0,570.9 L1123.5,571.1 L1125.0,571.6 L1126.5,570.5 L1128.0,571.0 L1129.5,572.6 L1131.0,570.2 L1132.5,571.5 L1134.0,571.1 L1135.5,570.7 L1137.0,571.4 L1138.5,570.7 L1140.0,571.5 L1141.5,570.7 L1143.0,570.6 L1144.5,570.8 L1146.0,571.0 L1147.5,570.7 L1149.0,570.3 L1150.5,570.6 L1152.0,572.2 L1153.5,571.2 L1155.0,570.7 L1156.5,571.3 L1158.0,572.5 L1159.5,570.6 L1161.0,570.7 L1162.5,570.8 L1164.0,571.5 L1165.5,570.7 L1167.0,571.8 L1168.5,570.3 L1170.0,570.7 L1171.5,570.2 L1173.0,571.3 L1174.5,569.5 L1176.0,570.3 L1177.5,570.4 L1179.0,571.1 L1180.5,570.3 L1182.0,569.8 L1183.5,570.8 L1185.0,570.0 L1186.5,571.1 L1188.0,570.5 L1189.5,570.6 L1191.0,571.2 L1192.5,571.2 L1194.0,570.2 L1195.5,570.5 L1197.0,569.8 L1198.5,569.5 L1200.0,570.4 L1201.5,570.8 L1203.0,571.0 L1204.5,571.1 L1206.0,570.7 L1207.5,569.2 L1209.0,570.2 L1210.5,570.3 L1212.0,570.5 L1213.5,571.3 L1215.0,569.7 L1216.5,572.7 L1218.0,571.5 L1219.5,571.2 L1221.0,571.3 L1222.5,571.1 L1224.0,571.5 L1225.5,570.3 L1227.0,570.3 L1228.5,570.4 L1230.0,570.6 L1231.5,571.2 L1233.0,571.1 L1234.5,570.4 L1236.0,570.2 L1237.5,570.3 L1239.0,571.0 L1240.5,571.3 L1242.0,571.2 L1243.5,570.4 L1245.0,569.8 L1246.5,570.3 L1248.0,570.8 L1249.5,570.0 L1251.0,571.1 L1252.5,571.9 L1254.0,570.7 L1255.5,569.4 L1257.0,570.2 L1258.5,570.5 L1260.0,570.6 L1261.5,570.2 L1263.0,571.2 L1264.5,569.5 L1266.0,569.8 L1267.5,572.4 L1269.0,570.8 L1270.5,571.5 L1272.0,572.0 L1273.5,569.7 L1275.0,571.5 L1276.5,571.0 L1278.0,570.9 L1279.5,571.7 L1281.0,571.0 L1282.5,570.8 L1284.0,570.6 L1285.5,570.6 L1287.0,571.9 L1288.5,570.8 L1290.0,571.5 L1291.5,570.8 L1293.0,570.1 L1294.5,571.4 L1296.0,570.5 L1297.5,570.9 L1299.0,570.8 L1300.5,570.6 L1302.0,569.5 L1303.5,570.4 L1305.0,570.3 L1306.5,571.2 L1308.0,570.1 L1309.5,570.3 L1311.0,570.1 L1312.5,570.9 L1314.0,571.6 L1315.5,570.5 L1317.0,571.4 L1318.5,571.2 L1320.0,570.7 L1321.5,570.3 L1323.0,571.5 L1324.5,572.3 L1326.0,568.8 L1327.5,571.1 L1329.0,570.4 L1330.5,571.2 L1332.0,571.0 L1333.5,570.5 L1335.0,571.5 L1336.5,571.0 L1338.0,570.2 L1339.5,571.0 L1341.0,570.5 L1342.5,570.8 L1344.0,570.8 L1345.5,571.5 L1347.0,571.3 L1348.5,571.5 L1350.0,569.5 L1351.5,571.2 L1353.0,570.6 L1354.5,571.2 L1356.0,570.3 L1357.5,570.5 L1359.0,570.7 L1360.5,570.8 L1362.0,571.6 L1363.5,571.0 L1365.0,571.4 L1366.5,570.4 L1368.0,570.0 L1369.5,571.2 L1371.0,571.1 L1372.5,570.9 L1374.0,570.8 L1375.5,572.4 L1377.0,572.2 L1378.5,570.8 L1380.0,571.7 L1381.5,570.0 L1383.0,570.6 L1384.5,570.7 L1386.0,571.2 L1387.5,570.6 L1389.0,571.2 L1390.5,570.3 L1392.0,570.9 L1393.5,570.2 L1395.0,571.0 L1396.5,570.8 L1398.0,571.0 L1399.5,571.1 L1401.0,571.2 L1402.5,570.1 L1404.0,571.4 L1405.5,571.3 L1407.0,571.3 L1408.5,570.6 L1410.0,570.4 L1411.5,570.3 L1413.0,571.0 L1414.5,571.3 L1416.0,570.5 L1417.5,571.4 L1419.0,570.5 L1420.5,570.9 L1422.0,570.8 L1423.5,570.1 L1425.0,571.5 L1426.5,570.3 L1428.0,570.9 L1429.5,570.8 L1431.0,570.6 L1432.5,570.4 L1434.0,571.2 L1435.5,571.5 L1437.0,569.6 L1438.5,571.4 L1440.0,571.3 L1441.5,570.5 L1443.0,570.2 L1444.5,570.4 L1446.0,570.4 L1447.5,569.3 L1449.0,573.3 L1450.5,570.8 L1452.0,571.0 L1453.5,571.0 L1455.0,569.8 L1456.5,570.2 L1458.0,570.1 L1459.5,570.9 L1461.0,571.0 L1462.5,570.8 L1464.0,570.3 L1465.5,571.3 L1467.0,570.9 L1468.5,570.5 L1470.0,570.5 L1471.5,570.9 L1473.0,571.1 L1474.5,570.7 L1476.0,570.3 L1477.5,570.5 L1479.0,570.4 L1480.5,571.5 L1482.0,570.7 L1483.5,571.2 L1485.0,571.1 L1486.5,571.3 L1488.0,570.8 L1489.5,570.7 L1491.0,570.4 L1492.5,570.6 L1494.0,571.6 L1495.5,570.0 L1497.0,570.4 L1498.5,570.9 L1500.0,572.0 L1501.5,570.4 L1503.0,570.3 L1504.5,570.5 L1506.0,570.6 L1507.5,571.1 L1509.0,570.5 L1510.5,570.6 L1512.0,571.5 L1513.5,571.0 L1515.0,570.1 L1516.5,570.5 L1518.0,570.8 L1519.5,570.7 L1521.0,570.9 L1522.5,570.9 L1524.0,571.1 L1525.5,570.3 L1527.0,571.3 L1528.5,570.8 L1530.0,570.3 L1531.5,571.5 L1533.0,570.3" fill="none" stroke="#1f77b4" stroke-width="3.4" stroke-linejoin="miter" stroke-miterlimit="2" clip-path="url(#c5)" shape-rendering="crispEdges"/>
<path d="M1014.0,618.0 L1016.0,614.0 L1023.0,616.0 L1026.0,620.0 L1029.0,622.0 L1030.0,620.4 L1031.0,622.8 L1032.0,622.1 L1033.0,622.3 L1034.0,620.6 L1035.0,622.8 L1036.0,622.3 L1037.0,621.2 L1038.0,622.7 L1039.0,622.5 L1040.0,622.7 L1041.0,624.0 L1042.0,623.1 L1043.0,621.8 L1044.0,622.8 L1045.0,622.4 L1046.0,624.5 L1047.0,628.6 L1048.0,622.5 L1049.0,622.8 L1050.0,622.8 L1051.0,625.0 L1052.0,622.7 L1053.0,624.5 L1054.0,621.5 L1055.0,624.6 L1056.0,623.4 L1057.0,624.5 L1058.0,624.5 L1059.0,624.0 L1060.0,624.0 L1061.0,624.4 L1062.0,625.5 L1063.0,620.6 L1064.0,626.0 L1065.0,624.2 L1066.0,626.4 L1067.0,627.1 L1068.0,625.3 L1069.0,625.5 L1070.0,624.2 L1071.0,625.4 L1072.0,622.7 L1073.0,624.6 L1074.0,624.9 L1075.0,625.6 L1076.0,626.3 L1077.0,625.1 L1078.0,625.7 L1079.0,627.2 L1080.0,625.2 L1081.0,626.3 L1082.0,628.9 L1083.0,623.6 L1084.0,624.5 L1085.0,626.1 L1086.0,626.1 L1087.0,629.6 L1088.0,626.7 L1089.0,625.5 L1090.0,625.2 L1091.0,627.3 L1092.0,629.3 L1093.0,628.5 L1094.0,628.9 L1095.0,625.9 L1096.0,628.1 L1097.0,625.9 L1098.0,625.9 L1099.0,627.6 L1100.0,623.9 L1101.0,627.8 L1102.0,627.1 L1103.0,628.0 L1104.0,627.4 L1105.0,626.7 L1106.0,630.9 L1107.0,628.5 L1108.0,626.6 L1109.0,629.5 L1110.0,625.4 L1111.0,626.6 L1112.0,626.0 L1113.0,628.6 L1114.0,625.8 L1115.0,627.9 L1116.0,628.0 L1117.0,626.8 L1118.0,628.8 L1119.0,629.6 L1120.0,628.8 L1121.0,633.2 L1122.0,628.5 L1123.0,627.1 L1124.0,632.2 L1125.0,627.3 L1126.0,630.2 L1127.0,629.9 L1128.0,629.1 L1129.0,628.1 L1130.0,624.3 L1131.0,627.9 L1132.0,628.7 L1133.0,630.9 L1134.0,630.2 L1135.0,629.9 L1136.0,629.7 L1137.0,627.5 L1138.0,630.7 L1139.0,631.1 L1140.0,629.4 L1141.0,629.3 L1142.0,631.6 L1143.0,629.1 L1144.0,629.1 L1145.0,629.3 L1146.0,629.8 L1147.0,629.5 L1148.0,627.6 L1149.0,631.6 L1150.0,630.8 L1151.0,631.5 L1152.0,628.0 L1153.0,632.8 L1154.0,630.7 L1155.0,635.0 L1156.0,630.0 L1157.0,633.9 L1158.0,631.9 L1159.0,632.1 L1160.0,632.4 L1161.0,625.9 L1162.0,631.2 L1163.0,632.5 L1164.0,632.9 L1165.0,633.2 L1166.0,631.6 L1167.0,630.2 L1168.0,632.9 L1169.0,633.2 L1170.0,630.9 L1171.0,632.4 L1172.0,631.0 L1173.0,632.0 L1174.0,631.9 L1175.0,632.5 L1176.0,634.7 L1177.0,632.4 L1178.0,633.8 L1179.0,632.5 L1180.0,631.8 L1181.0,632.4 L1182.0,632.5 L1183.0,631.4 L1184.0,630.5 L1185.0,634.5 L1186.0,631.6 L1187.0,631.5 L1188.0,631.5 L1189.0,632.5 L1190.0,633.8 L1191.0,633.5 L1192.0,632.3 L1193.0,634.4 L1194.0,631.5 L1195.0,631.9 L1196.0,631.8 L1197.0,631.4 L1198.0,633.6 L1199.0,630.8 L1200.0,632.2 L1201.0,633.6 L1202.0,633.8 L1203.0,633.7 L1204.0,632.5 L1205.0,633.7 L1206.0,634.9 L1207.0,634.6 L1208.0,633.9 L1209.0,632.5 L1210.0,631.8 L1211.0,631.9 L1212.0,631.2 L1213.0,633.6 L1214.0,632.3 L1215.0,633.9 L1216.0,633.9 L1217.0,632.1 L1218.0,633.0 L1219.0,631.7 L1220.0,632.8 L1221.0,631.9 L1222.0,630.5 L1223.0,631.5 L1224.0,632.1 L1225.0,632.5 L1226.0,632.9 L1227.0,633.3 L1228.0,638.5 L1229.0,631.3 L1230.0,632.8 L1231.0,634.2 L1232.0,634.5 L1233.0,632.3 L1234.0,635.1 L1235.0,634.1 L1236.0,634.5 L1237.0,632.9 L1238.0,633.2 L1239.0,635.8 L1240.0,631.9 L1241.0,635.0 L1242.0,632.4 L1243.0,634.3 L1244.0,634.4 L1245.0,633.0 L1246.0,629.7 L1247.0,633.3 L1248.0,633.8 L1249.0,634.1 L1250.0,631.9 L1251.0,633.7 L1252.0,633.3 L1253.0,632.1 L1254.0,631.5 L1255.0,635.8 L1256.0,631.8 L1257.0,633.5 L1258.0,634.7 L1259.0,635.4 L1260.0,635.6 L1261.0,634.3 L1262.0,634.4 L1263.0,634.6 L1264.0,635.1 L1265.0,632.2 L1266.0,635.1 L1267.0,634.0 L1268.0,636.7 L1269.0,634.0 L1270.0,635.1 L1271.0,637.4 L1272.0,634.0 L1273.0,635.0 L1274.0,634.9 L1275.0,633.5 L1276.0,634.8 L1277.0,635.1 L1278.0,636.7 L1279.0,634.6 L1280.0,633.8 L1281.0,635.7 L1282.0,633.5 L1283.0,634.4 L1284.0,633.3 L1285.0,634.6 L1286.0,635.0 L1287.0,637.6 L1288.0,635.8 L1289.0,634.5 L1290.0,638.1 L1291.0,635.5 L1292.0,636.7 L1293.0,633.6 L1294.0,636.1 L1295.0,634.5 L1296.0,635.2 L1297.0,633.3 L1298.0,634.9 L1299.0,636.4 L1300.0,633.2 L1301.0,635.6 L1302.0,633.6 L1303.0,635.1 L1304.0,635.5 L1305.0,636.7 L1306.0,634.8 L1307.0,635.3 L1308.0,633.6 L1309.0,634.4 L1310.0,635.6 L1311.0,636.0 L1312.0,635.9 L1313.0,637.1 L1314.0,637.2 L1315.0,635.1 L1316.0,634.4 L1317.0,636.1 L1318.0,637.0 L1319.0,636.0 L1320.0,636.7 L1321.0,634.5 L1322.0,634.9 L1323.0,636.8 L1324.0,631.0 L1325.0,633.5 L1326.0,635.6 L1327.0,635.0 L1328.0,636.7 L1329.0,636.4 L1330.0,635.9 L1331.0,635.0 L1332.0,635.1 L1333.0,637.1 L1334.0,636.4 L1335.0,636.6 L1336.0,636.8 L1337.0,637.0 L1338.0,636.8 L1339.0,637.9 L1340.0,636.5 L1341.0,637.0 L1342.0,637.1 L1343.0,637.6 L1344.0,636.9 L1345.0,635.2 L1346.0,637.3 L1347.0,637.8 L1348.0,636.5 L1349.0,637.6 L1350.0,637.0 L1351.0,636.6 L1352.0,639.0 L1353.0,635.8 L1354.0,636.0 L1355.0,637.1 L1356.0,641.3 L1357.0,636.4 L1358.0,635.8 L1359.0,634.9 L1360.0,637.6 L1361.0,636.4 L1362.0,637.9 L1363.0,642.2 L1364.0,638.1 L1365.0,636.1 L1366.0,636.1 L1367.0,638.1 L1368.0,636.9 L1369.0,638.6 L1370.0,637.9 L1371.0,640.3 L1372.0,637.9 L1373.0,636.9 L1374.0,638.1 L1375.0,637.0 L1376.0,638.8 L1377.0,638.0 L1378.0,636.3 L1379.0,638.5 L1380.0,639.8 L1381.0,639.1 L1382.0,638.4 L1383.0,635.7 L1384.0,638.5 L1385.0,638.1 L1386.0,635.2 L1387.0,636.1 L1388.0,638.3 L1389.0,639.7 L1390.0,637.5 L1391.0,639.4 L1392.0,637.8 L1393.0,638.3 L1394.0,637.0 L1395.0,638.9 L1396.0,639.0 L1397.0,638.0 L1398.0,639.5 L1399.0,639.2 L1400.0,639.1 L1401.0,639.2 L1402.0,638.7 L1403.0,639.2 L1404.0,638.5 L1405.0,639.1 L1406.0,638.5 L1407.0,641.0 L1408.0,638.1 L1409.0,638.4 L1410.0,640.5 L1411.0,638.7 L1412.0,638.2 L1413.0,638.3 L1414.0,640.1 L1415.0,641.7 L1416.0,639.5 L1417.0,640.7 L1418.0,638.2 L1419.0,638.6 L1420.0,639.8 L1421.0,644.6 L1422.0,639.4 L1423.0,640.7 L1424.0,638.4 L1425.0,640.0 L1426.0,638.9 L1427.0,638.3 L1428.0,640.2 L1429.0,639.6 L1430.0,639.6 L1431.0,640.3 L1432.0,638.7 L1433.0,638.8 L1434.0,638.6 L1435.0,638.6 L1436.0,638.2 L1437.0,640.8 L1438.0,641.3 L1439.0,639.6 L1440.0,639.8 L1441.0,640.1 L1442.0,641.8 L1443.0,641.0 L1444.0,638.4 L1445.0,640.4 L1446.0,640.5 L1447.0,642.3 L1448.0,639.3 L1449.0,645.0 L1450.0,640.0 L1451.0,642.0 L1452.0,640.2 L1453.0,638.8 L1454.0,639.1 L1455.0,639.9 L1456.0,639.3 L1457.0,642.4 L1458.0,641.1 L1459.0,642.7 L1460.0,644.5 L1461.0,641.2 L1462.0,639.0 L1463.0,643.2 L1464.0,640.5 L1465.0,640.5 L1466.0,642.4 L1467.0,640.5 L1468.0,640.4 L1469.0,637.5 L1470.0,643.2 L1471.0,640.3 L1472.0,637.4 L1473.0,643.5 L1474.0,640.7 L1475.0,641.3 L1476.0,641.4 L1477.0,642.2 L1478.0,642.4 L1479.0,641.4 L1480.0,641.0 L1481.0,642.7 L1482.0,636.3 L1483.0,642.7 L1484.0,638.3 L1485.0,643.4 L1486.0,641.4 L1487.0,642.3 L1488.0,640.7 L1489.0,641.2 L1490.0,641.3 L1491.0,642.5 L1492.0,643.9 L1493.0,640.8 L1494.0,638.2 L1495.0,643.4 L1496.0,643.3 L1497.0,641.7 L1498.0,641.6 L1499.0,646.1 L1500.0,641.2 L1501.0,641.5 L1502.0,639.5 L1503.0,643.5 L1504.0,641.8 L1505.0,640.2 L1506.0,641.3 L1507.0,641.6 L1508.0,643.6 L1509.0,642.4 L1510.0,642.4 L1511.0,641.9 L1512.0,643.2 L1513.0,645.2 L1514.0,644.6 L1515.0,642.4 L1516.0,642.7 L1517.0,642.0 L1518.0,641.2 L1519.0,642.5 L1520.0,644.1 L1521.0,644.7 L1522.0,645.3 L1523.0,644.1 L1524.0,639.8 L1525.0,642.1 L1526.0,643.0 L1527.0,642.7 L1528.0,643.7 L1529.0,644.7 L1530.0,642.2 L1531.0,644.7 L1532.0,644.5 L1533.0,645.1" fill="none" stroke="#ff7f0e" stroke-width="3.4" stroke-linejoin="miter" stroke-miterlimit="2" clip-path="url(#c5)" shape-rendering="crispEdges"/>
<path d="M1014.0,612.0 L1018.0,610.5 L1023.0,610.0 L1025.0,614.0 L1027.0,616.5 L1028.0,617.0 L1029.0,617.4 L1030.0,618.8 L1031.0,618.8 L1032.0,618.6 L1033.0,617.3 L1034.0,618.3 L1035.0,615.6 L1036.0,614.4 L1037.0,619.5 L1038.0,618.4 L1039.0,617.6 L1040.0,619.0 L1041.0,618.8 L1042.0,619.7 L1043.0,615.4 L1044.0,616.9 L1045.0,619.6 L1046.0,618.0 L1047.0,617.6 L1048.0,618.4 L1049.0,620.9 L1050.0,617.3 L1051.0,619.1 L1052.0,619.6 L1053.0,619.2 L1054.0,617.1 L1055.0,620.9 L1056.0,620.5 L1057.0,617.7 L1058.0,618.0 L1059.0,621.1 L1060.0,619.1 L1061.0,618.4 L1062.0,617.8 L1063.0,620.1 L1064.0,617.3 L1065.0,621.9 L1066.0,619.5 L1067.0,616.0 L1068.0,619.1 L1069.0,619.7 L1070.0,619.2 L1071.0,622.6 L1072.0,620.2 L1073.0,618.8 L1074.0,619.7 L1075.0,620.1 L1076.0,617.9 L1077.0,623.6 L1078.0,621.0 L1079.0,618.0 L1080.0,620.6 L1081.0,621.9 L1082.0,619.2 L1083.0,619.1 L1084.0,622.3 L1085.0,621.4 L1086.0,618.3 L1087.0,618.6 L1088.0,620.1 L1089.0,621.3 L1090.0,620.1 L1091.0,622.5 L1092.0,622.6 L1093.0,622.0 L1094.0,619.0 L1095.0,620.1 L1096.0,621.2 L1097.0,619.8 L1098.0,619.0 L1099.0,620.4 L1100.0,623.3 L1101.0,620.4 L1102.0,622.3 L1103.0,621.4 L1104.0,620.4 L1105.0,620.4 L1106.0,620.6 L1107.0,621.5 L1108.0,623.2 L1109.0,622.3 L1110.0,619.7 L1111.0,623.0 L1112.0,620.5 L1113.0,621.2 L1114.0,621.8 L1115.0,619.5 L1116.0,623.9 L1117.0,621.8 L1118.0,622.5 L1119.0,622.9 L1120.0,623.7 L1121.0,623.7 L1122.0,623.9 L1123.0,621.4 L1124.0,621.4 L1125.0,623.3 L1126.0,623.3 L1127.0,620.2 L1128.0,623.0 L1129.0,623.1 L1130.0,621.0 L1131.0,626.8 L1132.0,623.3 L1133.0,620.7 L1134.0,622.3 L1135.0,623.7 L1136.0,619.6 L1137.0,623.2 L1138.0,627.1 L1139.0,623.6 L1140.0,620.8 L1141.0,623.6 L1142.0,623.2 L1143.0,624.6 L1144.0,625.2 L1145.0,625.7 L1146.0,624.7 L1147.0,624.7 L1148.0,619.9 L1149.0,618.8 L1150.0,623.2 L1151.0,625.7 L1152.0,623.1 L1153.0,621.8 L1154.0,621.9 L1155.0,624.7 L1156.0,623.0 L1157.0,625.7 L1158.0,622.5 L1159.0,627.8 L1160.0,625.2 L1161.0,623.8 L1162.0,624.6 L1163.0,625.3 L1164.0,625.5 L1165.0,625.7 L1166.0,624.5 L1167.0,626.1 L1168.0,624.5 L1169.0,624.0 L1170.0,624.7 L1171.0,629.6 L1172.0,627.7 L1173.0,625.4 L1174.0,624.1 L1175.0,625.4 L1176.0,625.1 L1177.0,625.2 L1178.0,625.3 L1179.0,626.6 L1180.0,629.1 L1181.0,624.4 L1182.0,626.4 L1183.0,627.0 L1184.0,623.3 L1185.0,625.5 L1186.0,626.4 L1187.0,626.6 L1188.0,625.7 L1189.0,625.5 L1190.0,627.5 L1191.0,626.2 L1192.0,627.7 L1193.0,627.0 L1194.0,626.0 L1195.0,620.0 L1196.0,625.3 L1197.0,625.4 L1198.0,627.5 L1199.0,626.1 L1200.0,625.1 L1201.0,627.1 L1202.0,627.9 L1203.0,626.4 L1204.0,624.5 L1205.0,627.7 L1206.0,626.0 L1207.0,624.3 L1208.0,628.1 L1209.0,624.0 L1210.0,627.0 L1211.0,626.7 L1212.0,626.0 L1213.0,628.6 L1214.0,627.7 L1215.0,628.2 L1216.0,625.9 L1217.0,624.6 L1218.0,627.6 L1219.0,626.4 L1220.0,626.4 L1221.0,632.1 L1222.0,629.8 L1223.0,628.4 L1224.0,627.0 L1225.0,625.4 L1226.0,629.3 L1227.0,629.2 L1228.0,627.8 L1229.0,629.1 L1230.0,626.2 L1231.0,627.7 L1232.0,630.5 L1233.0,627.3 L1234.0,626.5 L1235.0,629.0 L1236.0,627.2 L1237.0,629.7 L1238.0,626.1 L1239.0,628.0 L1240.0,630.8 L1241.0,628.1 L1242.0,629.4 L1243.0,625.7 L1244.0,626.5 L1245.0,629.5 L1246.0,627.2 L1247.0,628.9 L1248.0,628.6 L1249.0,628.0 L1250.0,626.7 L1251.0,627.8 L1252.0,629.4 L1253.0,627.6 L1254.0,628.5 L1255.0,631.1 L1256.0,631.4 L1257.0,628.0 L1258.0,629.1 L1259.0,628.9 L1260.0,631.9 L1261.0,628.6 L1262.0,632.7 L1263.0,630.5 L1264.0,629.1 L1265.0,628.9 L1266.0,626.7 L1267.0,630.6 L1268.0,630.9 L1269.0,629.3 L1270.0,629.5 L1271.0,628.6 L1272.0,631.8 L1273.0,629.7 L1274.0,625.6 L1275.0,628.1 L1276.0,632.4 L1277.0,628.8 L1278.0,628.1 L1279.0,630.1 L1280.0,632.9 L1281.0,633.0 L1282.0,627.8 L1283.0,629.6 L1284.0,630.3 L1285.0,628.9 L1286.0,631.0 L1287.0,629.6 L1288.0,630.2 L1289.0,631.1 L1290.0,628.9 L1291.0,630.2 L1292.0,631.2 L1293.0,631.1 L1294.0,629.7 L1295.0,629.3 L1296.0,628.9 L1297.0,632.6 L1298.0,629.1 L1299.0,631.1 L1300.0,630.8 L1301.0,630.1 L1302.0,630.9 L1303.0,632.9 L1304.0,630.0 L1305.0,628.3 L1306.0,630.1 L1307.0,630.2 L1308.0,627.1 L1309.0,634.0 L1310.0,629.3 L1311.0,631.6 L1312.0,632.8 L1313.0,634.8 L1314.0,632.5 L1315.0,631.3 L1316.0,628.6 L1317.0,632.9 L1318.0,630.6 L1319.0,632.7 L1320.0,630.3 L1321.0,625.8 L1322.0,630.4 L1323.0,632.0 L1324.0,630.9 L1325.0,633.5 L1326.0,636.5 L1327.0,631.0 L1328.0,631.7 L1329.0,630.8 L1330.0,634.7 L1331.0,630.2 L1332.0,632.0 L1333.0,635.5 L1334.0,627.5 L1335.0,631.9 L1336.0,631.7 L1337.0,632.0 L1338.0,632.6 L1339.0,632.1 L1340.0,631.4 L1341.0,630.6 L1342.0,629.9 L1343.0,630.4 L1344.0,631.7 L1345.0,631.8 L1346.0,632.3 L1347.0,635.3 L1348.0,632.6 L1349.0,632.5 L1350.0,631.0 L1351.0,632.1 L1352.0,630.8 L1353.0,634.0 L1354.0,632.2 L1355.0,637.7 L1356.0,630.6 L1357.0,634.7 L1358.0,630.4 L1359.0,630.0 L1360.0,632.2 L1361.0,631.3 L1362.0,632.6 L1363.0,632.4 L1364.0,632.9 L1365.0,631.6 L1366.0,633.1 L1367.0,631.6 L1368.0,629.2 L1369.0,630.8 L1370.0,631.8 L1371.0,632.1 L1372.0,633.6 L1373.0,633.5 L1374.0,633.3 L1375.0,630.0 L1376.0,628.6 L1377.0,631.5 L1378.0,631.5 L1379.0,633.7 L1380.0,628.7 L1381.0,631.0 L1382.0,630.4 L1383.0,629.4 L1384.0,633.9 L1385.0,632.5 L1386.0,632.9 L1387.0,633.0 L1388.0,631.1 L1389.0,635.9 L1390.0,634.1 L1391.0,633.8 L1392.0,631.6 L1393.0,631.6 L1394.0,630.3 L1395.0,633.2 L1396.0,634.5 L1397.0,635.2 L1398.0,635.9 L1399.0,632.7 L1400.0,632.6 L1401.0,631.7 L1402.0,634.0 L1403.0,632.2 L1404.0,633.7 L1405.0,633.9 L1406.0,632.2 L1407.0,633.0 L1408.0,633.6 L1409.0,631.5 L1410.0,631.5 L1411.0,634.6 L1412.0,633.1 L1413.0,634.1 L1414.0,633.8 L1415.0,633.4 L1416.0,633.1 L1417.0,633.9 L1418.0,633.4 L1419.0,634.2 L1420.0,633.1 L1421.0,632.3 L1422.0,636.8 L1423.0,631.8 L1424.0,632.1 L1425.0,634.4 L1426.0,633.9 L1427.0,630.8 L1428.0,633.3 L1429.0,633.5 L1430.0,635.3 L1431.0,632.3 L1432.0,634.1 L1433.0,633.4 L1434.0,633.3 L1435.0,633.0 L1436.0,634.5 L1437.0,633.6 L1438.0,636.6 L1439.0,633.4 L1440.0,634.5 L1441.0,636.3 L1442.0,634.3 L1443.0,629.8 L1444.0,632.9 L1445.0,631.8 L1446.0,635.4 L1447.0,633.9 L1448.0,634.0 L1449.0,635.4 L1450.0,636.5 L1451.0,635.9 L1452.0,633.3 L1453.0,635.0 L1454.0,632.4 L1455.0,632.5 L1456.0,631.8 L1457.0,637.5 L1458.0,635.2 L1459.0,634.4 L1460.0,636.3 L1461.0,633.2 L1462.0,633.9 L1463.0,634.2 L1464.0,634.1 L1465.0,632.5 L1466.0,635.0 L1467.0,638.3 L1468.0,635.4 L1469.0,634.9 L1470.0,634.7 L1471.0,635.8 L1472.0,635.7 L1473.0,637.1 L1474.0,638.0 L1475.0,633.9 L1476.0,634.3 L1477.0,633.4 L1478.0,633.9 L1479.0,636.7 L1480.0,635.2 L1481.0,634.5 L1482.0,634.7 L1483.0,634.1 L1484.0,634.8 L1485.0,633.2 L1486.0,637.4 L1487.0,636.2 L1488.0,631.9 L1489.0,635.4 L1490.0,633.6 L1491.0,639.7 L1492.0,634.4 L1493.0,635.0 L1494.0,639.1 L1495.0,635.7 L1496.0,636.3 L1497.0,634.4 L1498.0,635.6 L1499.0,635.4 L1500.0,635.7 L1501.0,635.7 L1502.0,638.5 L1503.0,640.1 L1504.0,638.6 L1505.0,634.6 L1506.0,632.9 L1507.0,637.4 L1508.0,636.2 L1509.0,636.8 L1510.0,635.5 L1511.0,637.3 L1512.0,637.7 L1513.0,635.8 L1514.0,634.8 L1515.0,636.7 L1516.0,635.8 L1517.0,637.8 L1518.0,636.5 L1519.0,637.3 L1520.0,639.5 L1521.0,638.8 L1522.0,634.6 L1523.0,638.2 L1524.0,636.7 L1525.0,637.8 L1526.0,637.0 L1527.0,635.9 L1528.0,640.9 L1529.0,637.5 L1530.0,638.0 L1531.0,638.5 L1532.0,637.4 L1533.0,641.7" fill="none" stroke="#d62728" stroke-width="3.4" stroke-linejoin="miter" stroke-miterlimit="2" clip-path="url(#c5)" shape-rendering="crispEdges"/>
<path d="M1014.0,600.0 L1018.0,597.0 L1021.0,596.0 L1023.0,593.5 L1025.0,597.0 L1027.0,600.0 L1028.0,596.6 L1029.0,596.0 L1030.0,601.8 L1031.0,596.8 L1032.0,597.6 L1033.0,597.6 L1034.0,593.9 L1035.0,594.6 L1036.0,596.1 L1037.0,594.7 L1038.0,595.3 L1039.0,587.5 L1040.0,595.1 L1041.0,594.7 L1042.0,593.6 L1043.0,594.5 L1044.0,593.5 L1045.0,592.5 L1046.0,594.3 L1047.0,590.9 L1048.0,591.1 L1049.0,589.2 L1050.0,591.0 L1051.0,590.5 L1052.0,585.6 L1053.0,587.4 L1054.0,588.0 L1055.0,591.7 L1056.0,583.3 L1057.0,587.0 L1058.0,586.7 L1059.0,586.9 L1060.0,587.1 L1061.0,586.5 L1062.0,584.7 L1063.0,585.1 L1064.0,585.2 L1065.0,586.5 L1066.0,583.4 L1067.0,585.7 L1068.0,585.9 L1069.0,586.8 L1070.0,585.3 L1071.0,585.2 L1072.0,583.6 L1073.0,584.3 L1074.0,585.5 L1075.0,586.8 L1076.0,586.3 L1077.0,588.3 L1078.0,586.1 L1079.0,588.8 L1080.0,586.4 L1081.0,589.6 L1082.0,584.8 L1083.0,587.4 L1084.0,587.3 L1085.0,582.1 L1086.0,587.7 L1087.0,586.3 L1088.0,585.2 L1089.0,590.0 L1090.0,584.5 L1091.0,592.1 L1092.0,587.9 L1093.0,587.9 L1094.0,587.9 L1095.0,588.7 L1096.0,587.6 L1097.0,591.4 L1098.0,585.9 L1099.0,584.6 L1100.0,591.2 L1101.0,584.4 L1102.0,589.6 L1103.0,588.5 L1104.0,588.4 L1105.0,588.1 L1106.0,591.1 L1107.0,591.0 L1108.0,586.1 L1109.0,590.2 L1110.0,589.2 L1111.0,586.3 L1112.0,591.3 L1113.0,587.8 L1114.0,591.2 L1115.0,590.9 L1116.0,587.1 L1117.0,592.6 L1118.0,590.2 L1119.0,587.3 L1120.0,588.8 L1121.0,589.6 L1122.0,587.2 L1123.0,588.9 L1124.0,590.6 L1125.0,591.0 L1126.0,592.5 L1127.0,585.1 L1128.0,590.4 L1129.0,590.0 L1130.0,588.5 L1131.0,590.7 L1132.0,590.3 L1133.0,590.0 L1134.0,589.3 L1135.0,590.1 L1136.0,592.3 L1137.0,592.0 L1138.0,590.5 L1139.0,591.0 L1140.0,588.0 L1141.0,592.5 L1142.0,590.9 L1143.0,593.7 L1144.0,591.9 L1145.0,590.6 L1146.0,593.8 L1147.0,592.8 L1148.0,591.1 L1149.0,590.9 L1150.0,593.5 L1151.0,592.5 L1152.0,592.1 L1153.0,592.0 L1154.0,591.0 L1155.0,595.6 L1156.0,588.9 L1157.0,592.2 L1158.0,589.7 L1159.0,595.3 L1160.0,591.6 L1161.0,591.4 L1162.0,589.9 L1163.0,592.1 L1164.0,594.9 L1165.0,592.8 L1166.0,593.2 L1167.0,593.0 L1168.0,589.4 L1169.0,593.5 L1170.0,594.5 L1171.0,593.6 L1172.0,593.2 L1173.0,589.6 L1174.0,595.0 L1175.0,592.5 L1176.0,593.8 L1177.0,591.5 L1178.0,592.6 L1179.0,594.3 L1180.0,589.4 L1181.0,597.4 L1182.0,592.7 L1183.0,593.1 L1184.0,594.3 L1185.0,593.9 L1186.0,594.3 L1187.0,592.1 L1188.0,594.6 L1189.0,596.5 L1190.0,596.6 L1191.0,594.9 L1192.0,595.7 L1193.0,594.4 L1194.0,592.0 L1195.0,595.0 L1196.0,592.7 L1197.0,595.0 L1198.0,594.4 L1199.0,594.8 L1200.0,594.1 L1201.0,593.9 L1202.0,595.3 L1203.0,593.8 L1204.0,593.3 L1205.0,594.2 L1206.0,594.2 L1207.0,593.4 L1208.0,594.2 L1209.0,589.8 L1210.0,593.6 L1211.0,596.1 L1212.0,594.9 L1213.0,597.2 L1214.0,592.8 L1215.0,595.3 L1216.0,595.3 L1217.0,595.2 L1218.0,595.1 L1219.0,593.4 L1220.0,589.9 L1221.0,595.5 L1222.0,595.9 L1223.0,594.2 L1224.0,595.2 L1225.0,596.1 L1226.0,592.0 L1227.0,595.1 L1228.0,595.4 L1229.0,594.6 L1230.0,595.2 L1231.0,596.5 L1232.0,593.9 L1233.0,594.6 L1234.0,595.4 L1235.0,597.0 L1236.0,594.2 L1237.0,594.1 L1238.0,598.5 L1239.0,595.4 L1240.0,595.2 L1241.0,594.9 L1242.0,596.8 L1243.0,596.3 L1244.0,597.7 L1245.0,595.9 L1246.0,594.6 L1247.0,596.8 L1248.0,592.1 L1249.0,593.7 L1250.0,593.5 L1251.0,593.4 L1252.0,598.8 L1253.0,593.4 L1254.0,596.9 L1255.0,598.7 L1256.0,599.8 L1257.0,596.9 L1258.0,599.0 L1259.0,597.3 L1260.0,596.3 L1261.0,597.1 L1262.0,596.6 L1263.0,596.1 L1264.0,596.1 L1265.0,593.8 L1266.0,594.8 L1267.0,598.7 L1268.0,596.2 L1269.0,596.5 L1270.0,598.3 L1271.0,596.8 L1272.0,598.5 L1273.0,595.3 L1274.0,597.9 L1275.0,595.5 L1276.0,597.6 L1277.0,595.4 L1278.0,598.2 L1279.0,596.9 L1280.0,597.0 L1281.0,596.4 L1282.0,599.1 L1283.0,597.2 L1284.0,599.8 L1285.0,598.8 L1286.0,593.7 L1287.0,597.5 L1288.0,597.3 L1289.0,596.3 L1290.0,598.2 L1291.0,598.7 L1292.0,595.3 L1293.0,595.8 L1294.0,601.2 L1295.0,596.8 L1296.0,597.8 L1297.0,597.0 L1298.0,601.5 L1299.0,598.5 L1300.0,596.5 L1301.0,598.1 L1302.0,598.9 L1303.0,598.7 L1304.0,597.5 L1305.0,600.1 L1306.0,592.9 L1307.0,600.1 L1308.0,598.4 L1309.0,596.7 L1310.0,598.9 L1311.0,599.3 L1312.0,599.8 L1313.0,599.1 L1314.0,599.8 L1315.0,597.5 L1316.0,598.4 L1317.0,600.5 L1318.0,596.9 L1319.0,598.4 L1320.0,599.4 L1321.0,599.8 L1322.0,594.4 L1323.0,599.0 L1324.0,598.9 L1325.0,598.8 L1326.0,600.2 L1327.0,599.8 L1328.0,595.7 L1329.0,599.2 L1330.0,601.5 L1331.0,597.7 L1332.0,599.7 L1333.0,600.2 L1334.0,598.3 L1335.0,598.5 L1336.0,599.5 L1337.0,598.8 L1338.0,598.7 L1339.0,598.6 L1340.0,599.1 L1341.0,597.7 L1342.0,599.4 L1343.0,599.2 L1344.0,599.2 L1345.0,598.4 L1346.0,599.5 L1347.0,599.0 L1348.0,598.7 L1349.0,599.1 L1350.0,600.6 L1351.0,598.9 L1352.0,596.2 L1353.0,601.4 L1354.0,597.6 L1355.0,600.2 L1356.0,599.1 L1357.0,600.1 L1358.0,599.8 L1359.0,602.9 L1360.0,600.5 L1361.0,598.1 L1362.0,601.3 L1363.0,596.0 L1364.0,599.8 L1365.0,598.1 L1366.0,599.2 L1367.0,600.1 L1368.0,601.3 L1369.0,598.5 L1370.0,601.0 L1371.0,599.4 L1372.0,600.0 L1373.0,600.6 L1374.0,600.9 L1375.0,601.2 L1376.0,601.4 L1377.0,601.5 L1378.0,598.5 L1379.0,595.3 L1380.0,600.4 L1381.0,601.1 L1382.0,602.4 L1383.0,600.0 L1384.0,596.4 L1385.0,602.0 L1386.0,600.2 L1387.0,599.5 L1388.0,600.6 L1389.0,599.0 L1390.0,603.8 L1391.0,600.8 L1392.0,600.8 L1393.0,599.6 L1394.0,603.8 L1395.0,599.2 L1396.0,599.6 L1397.0,605.7 L1398.0,603.6 L1399.0,600.5 L1400.0,599.9 L1401.0,598.3 L1402.0,601.7 L1403.0,600.3 L1404.0,602.8 L1405.0,602.9 L1406.0,600.9 L1407.0,601.9 L1408.0,600.3 L1409.0,601.7 L1410.0,601.1 L1411.0,601.3 L1412.0,604.0 L1413.0,601.8 L1414.0,601.2 L1415.0,603.1 L1416.0,603.4 L1417.0,601.5 L1418.0,601.9 L1419.0,599.3 L1420.0,603.1 L1421.0,603.3 L1422.0,600.4 L1423.0,600.9 L1424.0,601.4 L1425.0,601.5 L1426.0,602.9 L1427.0,602.9 L1428.0,601.6 L1429.0,600.5 L1430.0,602.1 L1431.0,601.1 L1432.0,603.5 L1433.0,602.0 L1434.0,602.6 L1435.0,601.6 L1436.0,603.2 L1437.0,602.3 L1438.0,601.5 L1439.0,602.2 L1440.0,601.3 L1441.0,602.9 L1442.0,603.5 L1443.0,603.9 L1444.0,605.3 L1445.0,603.8 L1446.0,605.1 L1447.0,602.8 L1448.0,602.4 L1449.0,604.0 L1450.0,605.0 L1451.0,602.9 L1452.0,603.7 L1453.0,602.7 L1454.0,601.2 L1455.0,605.0 L1456.0,604.6 L1457.0,605.0 L1458.0,601.2 L1459.0,603.7 L1460.0,603.4 L1461.0,599.9 L1462.0,605.0 L1463.0,602.4 L1464.0,602.9 L1465.0,604.7 L1466.0,604.7 L1467.0,601.7 L1468.0,603.4 L1469.0,605.6 L1470.0,606.4 L1471.0,602.4 L1472.0,603.6 L1473.0,602.0 L1474.0,604.1 L1475.0,606.1 L1476.0,603.9 L1477.0,604.4 L1478.0,602.1 L1479.0,606.5 L1480.0,604.4 L1481.0,604.7 L1482.0,606.0 L1483.0,605.5 L1484.0,601.1 L1485.0,604.6 L1486.0,604.6 L1487.0,605.3 L1488.0,604.1 L1489.0,607.0 L1490.0,605.3 L1491.0,607.8 L1492.0,606.9 L1493.0,603.0 L1494.0,601.4 L1495.0,606.4 L1496.0,608.0 L1497.0,604.5 L1498.0,608.9 L1499.0,607.0 L1500.0,604.4 L1501.0,600.6 L1502.0,605.2 L1503.0,603.7 L1504.0,603.6 L1505.0,601.2 L1506.0,606.6 L1507.0,604.0 L1508.0,605.3 L1509.0,604.6 L1510.0,608.5 L1511.0,605.0 L1512.0,605.1 L1513.0,606.8 L1514.0,608.7 L1515.0,606.8 L1516.0,601.6 L1517.0,607.9 L1518.0,607.4 L1519.0,604.9 L1520.0,603.7 L1521.0,605.9 L1522.0,607.2 L1523.0,607.7 L1524.0,605.4 L1525.0,606.7 L1526.0,612.1 L1527.0,609.5 L1528.0,608.1 L1529.0,609.8 L1530.0,610.1 L1531.0,609.1 L1532.0,606.0 L1533.0,611.3" fill="none" stroke="#9467bd" stroke-width="3.4" stroke-linejoin="miter" stroke-miterlimit="2" clip-path="url(#c5)" shape-rendering="crispEdges"/>
<path d="M1014.0,570.5 L1020.0,570.0 L1022.0,566.0 L1023.0,564.5 L1024.0,567.0 L1026.0,573.0 L1027.0,574.5 L1029.0,571.0 L1031.0,569.0 L1033.0,565.0 L1034.0,567.0 L1036.0,572.0 L1036.0,570.3 L1037.0,572.1 L1038.0,571.1 L1039.0,571.6 L1040.0,570.9 L1041.0,571.8 L1042.0,570.8 L1043.0,572.1 L1044.0,570.1 L1045.0,572.0 L1046.0,570.6 L1047.0,571.2 L1048.0,570.3 L1049.0,574.4 L1050.0,571.3 L1051.0,569.9 L1052.0,572.2 L1053.0,569.8 L1054.0,572.3 L1055.0,571.3 L1056.0,571.4 L1057.0,570.3 L1058.0,571.4 L1059.0,572.2 L1060.0,573.3 L1061.0,572.3 L1062.0,569.1 L1063.0,570.8 L1064.0,570.5 L1065.0,570.9 L1066.0,572.1 L1067.0,570.6 L1068.0,571.8 L1069.0,570.7 L1070.0,571.3 L1071.0,574.4 L1072.0,569.5 L1073.0,569.7 L1074.0,570.8 L1075.0,570.2 L1076.0,571.0 L1077.0,570.7 L1078.0,571.3 L1079.0,570.0 L1080.0,570.8 L1081.0,573.2 L1082.0,568.8 L1083.0,572.1 L1084.0,572.2 L1085.0,571.6 L1086.0,573.0 L1087.0,571.2 L1088.0,573.3 L1089.0,570.3 L1090.0,570.4 L1091.0,571.1 L1092.0,572.2 L1093.0,571.2 L1094.0,570.1 L1095.0,571.0 L1096.0,570.6 L1097.0,569.9 L1098.0,569.4 L1099.0,570.1 L1100.0,572.0 L1101.0,572.1 L1102.0,569.4 L1103.0,572.0 L1104.0,573.0 L1105.0,571.3 L1106.0,569.9 L1107.0,570.9 L1108.0,571.7 L1109.0,571.0 L1110.0,570.7 L1111.0,571.0 L1112.0,571.9 L1113.0,570.0 L1114.0,570.5 L1115.0,572.3 L1116.0,569.6 L1117.0,570.0 L1118.0,571.6 L1119.0,567.5 L1120.0,572.0 L1121.0,571.9 L1122.0,572.0 L1123.0,570.5 L1124.0,573.7 L1125.0,571.1 L1126.0,570.1 L1127.0,571.3 L1128.0,570.3 L1129.0,571.6 L1130.0,569.4 L1131.0,570.8 L1132.0,570.2 L1133.0,567.8 L1134.0,570.7 L1135.0,569.4 L1136.0,570.9 L1137.0,571.6 L1138.0,570.0 L1139.0,571.1 L1140.0,574.6 L1141.0,569.5 L1142.0,570.3 L1143.0,571.2 L1144.0,569.5 L1145.0,570.1 L1146.0,573.5 L1147.0,571.9 L1148.0,570.8 L1149.0,570.4 L1150.0,570.2 L1151.0,570.5 L1152.0,571.5 L1153.0,572.2 L1154.0,571.6 L1155.0,573.3 L1156.0,571.4 L1157.0,571.8 L1158.0,570.6 L1159.0,571.4 L1160.0,572.4 L1161.0,572.9 L1162.0,570.5 L1163.0,570.0 L1164.0,570.7 L1165.0,570.3 L1166.0,569.1 L1167.0,571.5 L1168.0,571.2 L1169.0,570.2 L1170.0,572.9 L1171.0,571.6 L1172.0,570.6 L1173.0,571.4 L1174.0,572.2 L1175.0,572.3 L1176.0,569.6 L1177.0,570.8 L1178.0,572.4 L1179.0,570.7 L1180.0,570.8 L1181.0,567.8 L1182.0,570.1 L1183.0,570.6 L1184.0,570.7 L1185.0,571.7 L1186.0,570.2 L1187.0,567.7 L1188.0,570.8 L1189.0,570.1 L1190.0,569.3 L1191.0,570.4 L1192.0,569.9 L1193.0,573.4 L1194.0,571.1 L1195.0,569.3 L1196.0,570.8 L1197.0,568.6 L1198.0,570.6 L1199.0,570.1 L1200.0,572.8 L1201.0,572.4 L1202.0,568.9 L1203.0,571.6 L1204.0,569.9 L1205.0,569.9 L1206.0,571.1 L1207.0,570.5 L1208.0,569.8 L1209.0,570.7 L1210.0,570.2 L1211.0,570.2 L1212.0,571.6 L1213.0,571.8 L1214.0,570.3 L1215.0,570.1 L1216.0,570.4 L1217.0,571.1 L1218.0,571.2 L1219.0,571.2 L1220.0,570.0 L1221.0,571.6 L1222.0,570.9 L1223.0,570.4 L1224.0,572.1 L1225.0,569.3 L1226.0,573.3 L1227.0,569.7 L1228.0,568.5 L1229.0,572.4 L1230.0,571.3 L1231.0,569.3 L1232.0,571.7 L1233.0,572.0 L1234.0,570.5 L1235.0,571.2 L1236.0,571.1 L1237.0,570.0 L1238.0,570.7 L1239.0,568.9 L1240.0,569.3 L1241.0,571.8 L1242.0,570.3 L1243.0,571.3 L1244.0,570.7 L1245.0,571.1 L1246.0,572.4 L1247.0,571.2 L1248.0,569.9 L1249.0,569.1 L1250.0,571.6 L1251.0,571.8 L1252.0,567.7 L1253.0,568.8 L1254.0,571.6 L1255.0,570.4 L1256.0,571.8 L1257.0,569.4 L1258.0,570.1 L1259.0,570.5 L1260.0,570.7 L1261.0,569.7 L1262.0,571.8 L1263.0,569.8 L1264.0,571.1 L1265.0,571.8 L1266.0,570.7 L1267.0,570.7 L1268.0,571.2 L1269.0,571.5 L1270.0,571.8 L1271.0,571.3 L1272.0,570.4 L1273.0,570.9 L1274.0,569.9 L1275.0,570.4 L1276.0,569.4 L1277.0,572.8 L1278.0,570.9 L1279.0,570.4 L1280.0,571.4 L1281.0,571.4 L1282.0,571.4 L1283.0,572.3 L1284.0,571.7 L1285.0,570.8 L1286.0,569.6 L1287.0,571.7 L1288.0,570.4 L1289.0,570.3 L1290.0,570.4 L1291.0,571.0 L1292.0,572.6 L1293.0,569.9 L1294.0,569.9 L1295.0,571.6 L1296.0,569.0 L1297.0,569.8 L1298.0,572.5 L1299.0,570.1 L1300.0,570.9 L1301.0,568.3 L1302.0,571.5 L1303.0,570.6 L1304.0,571.4 L1305.0,570.7 L1306.0,572.5 L1307.0,571.7 L1308.0,571.8 L1309.0,571.2 L1310.0,569.0 L1311.0,569.8 L1312.0,569.3 L1313.0,570.8 L1314.0,571.8 L1315.0,569.5 L1316.0,572.4 L1317.0,571.1 L1318.0,571.3 L1319.0,572.0 L1320.0,569.8 L1321.0,572.1 L1322.0,570.7 L1323.0,572.0 L1324.0,572.9 L1325.0,572.0 L1326.0,572.2 L1327.0,571.3 L1328.0,569.2 L1329.0,571.7 L1330.0,570.0 L1331.0,569.2 L1332.0,569.6 L1333.0,571.1 L1334.0,571.9 L1335.0,569.8 L1336.0,568.5 L1337.0,567.9 L1338.0,570.9 L1339.0,571.6 L1340.0,570.3 L1341.0,571.6 L1342.0,570.4 L1343.0,569.9 L1344.0,571.7 L1345.0,571.4 L1346.0,571.9 L1347.0,571.6 L1348.0,571.5 L1349.0,571.6 L1350.0,569.3 L1351.0,570.9 L1352.0,571.1 L1353.0,571.6 L1354.0,571.8 L1355.0,570.6 L1356.0,569.7 L1357.0,569.6 L1358.0,571.6 L1359.0,570.7 L1360.0,569.6 L1361.0,569.2 L1362.0,571.0 L1363.0,570.6 L1364.0,570.6 L1365.0,569.4 L1366.0,572.6 L1367.0,570.7 L1368.0,571.1 L1369.0,570.5 L1370.0,570.4 L1371.0,571.2 L1372.0,571.2 L1373.0,570.4 L1374.0,572.1 L1375.0,571.6 L1376.0,572.7 L1377.0,568.5 L1378.0,570.6 L1379.0,571.4 L1380.0,572.3 L1381.0,571.0 L1382.0,570.4 L1383.0,571.3 L1384.0,571.5 L1385.0,568.2 L1386.0,570.7 L1387.0,573.0 L1388.0,571.0 L1389.0,566.6 L1390.0,569.4 L1391.0,570.4 L1392.0,570.9 L1393.0,572.0 L1394.0,569.3 L1395.0,570.5 L1396.0,571.2 L1397.0,571.6 L1398.0,571.2 L1399.0,570.7 L1400.0,571.5 L1401.0,570.6 L1402.0,570.1 L1403.0,569.7 L1404.0,570.6 L1405.0,570.7 L1406.0,570.9 L1407.0,571.6 L1408.0,571.4 L1409.0,570.8 L1410.0,569.7 L1411.0,570.3 L1412.0,572.0 L1413.0,571.1 L1414.0,571.0 L1415.0,572.0 L1416.0,570.8 L1417.0,571.8 L1418.0,571.7 L1419.0,572.1 L1420.0,570.9 L1421.0,572.9 L1422.0,570.7 L1423.0,571.4 L1424.0,569.2 L1425.0,569.8 L1426.0,570.5 L1427.0,567.1 L1428.0,569.5 L1429.0,569.3 L1430.0,569.8 L1431.0,570.4 L1432.0,571.1 L1433.0,569.3 L1434.0,570.5 L1435.0,571.4 L1436.0,570.2 L1437.0,571.7 L1438.0,571.5 L1439.0,571.1 L1440.0,570.1 L1441.0,570.6 L1442.0,570.7 L1443.0,570.6 L1444.0,571.0 L1445.0,571.7 L1446.0,570.3 L1447.0,570.1 L1448.0,571.9 L1449.0,572.4 L1450.0,571.6 L1451.0,569.3 L1452.0,571.2 L1453.0,570.3 L1454.0,569.1 L1455.0,571.5 L1456.0,571.4 L1457.0,571.6 L1458.0,569.6 L1459.0,567.9 L1460.0,570.7 L1461.0,571.1 L1462.0,570.3 L1463.0,569.8 L1464.0,570.4 L1465.0,571.4 L1466.0,570.6 L1467.0,570.1 L1468.0,568.5 L1469.0,571.7 L1470.0,569.5 L1471.0,570.1 L1472.0,571.3 L1473.0,571.7 L1474.0,570.8 L1475.0,570.4 L1476.0,571.0 L1477.0,571.3 L1478.0,571.0 L1479.0,570.8 L1480.0,569.8 L1481.0,572.8 L1482.0,570.1 L1483.0,570.6 L1484.0,571.6 L1485.0,570.7 L1486.0,569.4 L1487.0,571.2 L1488.0,569.8 L1489.0,570.6 L1490.0,571.1 L1491.0,570.9 L1492.0,569.9 L1493.0,571.9 L1494.0,571.0 L1495.0,570.6 L1496.0,569.8 L1497.0,571.1 L1498.0,568.5 L1499.0,569.5 L1500.0,568.8 L1501.0,569.8 L1502.0,571.9 L1503.0,571.1 L1504.0,570.1 L1505.0,572.5 L1506.0,571.0 L1507.0,570.1 L1508.0,571.0 L1509.0,570.5 L1510.0,571.4 L1511.0,570.9 L1512.0,570.6 L1513.0,570.1 L1514.0,570.9 L1515.0,569.6 L1516.0,570.5 L1517.0,568.7 L1518.0,570.8 L1519.0,571.5 L1520.0,570.5 L1521.0,570.6 L1522.0,570.4 L1523.0,569.9 L1524.0,571.1 L1525.0,571.0 L1526.0,569.2 L1527.0,569.0 L1528.0,572.4 L1529.0,567.0 L1530.0,569.8 L1531.0,570.3 L1532.0,574.5 L1533.0,569.3" fill="none" stroke="#2ca02c" stroke-width="3.4" stroke-linejoin="miter" stroke-miterlimit="2" clip-path="url(#c5)" shape-rendering="crispEdges"/>
<rect x="1574" y="474" width="1" height="280" fill="#8a8a8a"/>
<rect x="1574" y="753" width="534" height="1" fill="#8a8a8a"/>
<rect x="1574" y="483" width="6" height="1" fill="#8a8a8a"/>
<text x="1569.2" y="487.3" font-size="12" fill="#a2a2a2" text-anchor="end" textLength="7.2" lengthAdjust="spacingAndGlyphs">2</text>
<rect x="1574" y="527" width="4" height="1" fill="#8a8a8a"/>
<text x="1569.2" y="531.2" font-size="12" fill="#a2a2a2" text-anchor="end" textLength="7.2" lengthAdjust="spacingAndGlyphs">1</text>
<rect x="1574" y="571" width="6" height="1" fill="#8a8a8a"/>
<text x="1569.2" y="575.1" font-size="12" fill="#a2a2a2" text-anchor="end" textLength="7.2" lengthAdjust="spacingAndGlyphs">0</text>
<rect x="1574" y="615" width="4" height="1" fill="#8a8a8a"/>
<text x="1569.2" y="619.0" font-size="12" fill="#a2a2a2" text-anchor="end" textLength="11.2" lengthAdjust="spacingAndGlyphs">-1</text>
<rect x="1574" y="659" width="6" height="1" fill="#8a8a8a"/>
<text x="1569.2" y="662.9" font-size="12" fill="#a2a2a2" text-anchor="end" textLength="11.2" lengthAdjust="spacingAndGlyphs">-2</text>
<rect x="1574" y="702" width="4" height="1" fill="#8a8a8a"/>
<text x="1569.2" y="706.8" font-size="12" fill="#a2a2a2" text-anchor="end" textLength="11.2" lengthAdjust="spacingAndGlyphs">-3</text>
<rect x="1574" y="746" width="6" height="1" fill="#8a8a8a"/>
<text x="1569.2" y="750.7" font-size="12" fill="#a2a2a2" text-anchor="end" textLength="11.2" lengthAdjust="spacingAndGlyphs">-4</text>
<rect x="1575" y="738" width="3" height="1" fill="#cccccc"/>
<rect x="1575" y="729" width="3" height="1" fill="#cccccc"/>
<rect x="1575" y="720" width="3" height="1" fill="#cccccc"/>
<rect x="1575" y="711" width="3" height="1" fill="#cccccc"/>
<rect x="1575" y="694" width="3" height="1" fill="#cccccc"/>
<rect x="1575" y="685" width="3" height="1" fill="#cccccc"/>
<rect x="1575" y="676" width="3" height="1" fill="#cccccc"/>
<rect x="1575" y="667" width="3" height="1" fill="#cccccc"/>
<rect x="1575" y="650" width="3" height="1" fill="#cccccc"/>
<rect x="1575" y="641" width="3" height="1" fill="#cccccc"/>
<rect x="1575" y="632" width="3" height="1" fill="#cccccc"/>
<rect x="1575" y="623" width="3" height="1" fill="#cccccc"/>
<rect x="1575" y="606" width="3" height="1" fill="#cccccc"/>
<rect x="1575" y="597" width="3" height="1" fill="#cccccc"/>
<rect x="1575" y="588" width="3" height="1" fill="#cccccc"/>
<rect x="1575" y="580" width="3" height="1" fill="#cccccc"/>
<rect x="1575" y="562" width="3" height="1" fill="#cccccc"/>
<rect x="1575" y="553" width="3" height="1" fill="#cccccc"/>
<rect x="1575" y="544" width="3" height="1" fill="#cccccc"/>
<rect x="1575" y="536" width="3" height="1" fill="#cccccc"/>
<rect x="1575" y="518" width="3" height="1" fill="#cccccc"/>
<rect x="1575" y="509" width="3" height="1" fill="#cccccc"/>
<rect x="1575" y="501" width="3" height="1" fill="#cccccc"/>
<rect x="1575" y="492" width="3" height="1" fill="#cccccc"/>
<rect x="1575" y="474" width="3" height="1" fill="#cccccc"/>
<rect x="1627" y="747" width="1" height="6" fill="#8a8a8a"/>
<text x="1626.6" y="765" font-size="12" fill="#a2a2a2" text-anchor="middle" textLength="24" lengthAdjust="spacingAndGlyphs">200</text>
<rect x="1698" y="747" width="1" height="6" fill="#8a8a8a"/>
<text x="1698.1" y="765" font-size="12" fill="#a2a2a2" text-anchor="middle" textLength="24" lengthAdjust="spacingAndGlyphs">400</text>
<rect x="1770" y="747" width="1" height="6" fill="#8a8a8a"/>
<text x="1769.5" y="765" font-size="12" fill="#a2a2a2" text-anchor="middle" textLength="24" lengthAdjust="spacingAndGlyphs">600</text>
<rect x="1841" y="747" width="1" height="6" fill="#8a8a8a"/>
<text x="1841.0" y="765" font-size="12" fill="#a2a2a2" text-anchor="middle" textLength="24" lengthAdjust="spacingAndGlyphs">800</text>
<rect x="1912" y="747" width="1" height="6" fill="#8a8a8a"/>
<text x="1912.5" y="765" font-size="12" fill="#a2a2a2" text-anchor="middle" textLength="32" lengthAdjust="spacingAndGlyphs">1000</text>
<rect x="1984" y="747" width="1" height="6" fill="#8a8a8a"/>
<text x="1984.0" y="765" font-size="12" fill="#a2a2a2" text-anchor="middle" textLength="32" lengthAdjust="spacingAndGlyphs">1200</text>
<rect x="2055" y="747" width="1" height="6" fill="#8a8a8a"/>
<text x="2055.5" y="765" font-size="12" fill="#a2a2a2" text-anchor="middle" textLength="32" lengthAdjust="spacingAndGlyphs">1400</text>
<rect x="1577" y="749" width="1" height="4" fill="#cccccc"/>
<rect x="1584" y="749" width="1" height="4" fill="#cccccc"/>
<rect x="1598" y="749" width="1" height="4" fill="#cccccc"/>
<rect x="1605" y="749" width="1" height="4" fill="#cccccc"/>
<rect x="1612" y="749" width="1" height="4" fill="#cccccc"/>
<rect x="1619" y="749" width="1" height="4" fill="#cccccc"/>
<rect x="1634" y="749" width="1" height="4" fill="#cccccc"/>
<rect x="1641" y="749" width="1" height="4" fill="#cccccc"/>
<rect x="1648" y="749" width="1" height="4" fill="#cccccc"/>
<rect x="1655" y="749" width="1" height="4" fill="#cccccc"/>
<rect x="1669" y="749" width="1" height="4" fill="#cccccc"/>
<rect x="1677" y="749" width="1" height="4" fill="#cccccc"/>
<rect x="1684" y="749" width="1" height="4" fill="#cccccc"/>
<rect x="1691" y="749" width="1" height="4" fill="#cccccc"/>
<rect x="1705" y="749" width="1" height="4" fill="#cccccc"/>
<rect x="1712" y="749" width="1" height="4" fill="#cccccc"/>
<rect x="1720" y="749" width="1" height="4" fill="#cccccc"/>
<rect x="1727" y="749" width="1" height="4" fill="#cccccc"/>
<rect x="1741" y="749" width="1" height="4" fill="#cccccc"/>
<rect x="1748" y="749" width="1" height="4" fill="#cccccc"/>
<rect x="1755" y="749" width="1" height="4" fill="#cccccc"/>
<rect x="1762" y="749" width="1" height="4" fill="#cccccc"/>
<rect x="1777" y="749" width="1" height="4" fill="#cccccc"/>
<rect x="1784" y="749" width="1" height="4" fill="#cccccc"/>
<rect x="1791" y="749" width="1" height="4" fill="#cccccc"/>
<rect x="1798" y="749" width="1" height="4" fill="#cccccc"/>
<rect x="1812" y="749" width="1" height="4" fill="#cccccc"/>
<rect x="1820" y="749" width="1" height="4" fill="#cccccc"/>
<rect x="1827" y="749" width="1" height="4" fill="#cccccc"/>
<rect x="1834" y="749" width="1" height="4" fill="#cccccc"/>
<rect x="1848" y="749" width="1" height="4" fill="#cccccc"/>
<rect x="1855" y="749" width="1" height="4" fill="#cccccc"/>
<rect x="1862" y="749" width="1" height="4" fill="#cccccc"/>
<rect x="1870" y="749" width="1" height="4" fill="#cccccc"/>
<rect x="1884" y="749" width="1" height="4" fill="#cccccc"/>
<rect x="1891" y="749" width="1" height="4" fill="#cccccc"/>
<rect x="1898" y="749" width="1" height="4" fill="#cccccc"/>
<rect x="1905" y="749" width="1" height="4" fill="#cccccc"/>
<rect x="1920" y="749" width="1" height="4" fill="#cccccc"/>
<rect x="1927" y="749" width="1" height="4" fill="#cccccc"/>
<rect x="1934" y="749" width="1" height="4" fill="#cccccc"/>
<rect x="1941" y="749" width="1" height="4" fill="#cccccc"/>
<rect x="1955" y="749" width="1" height="4" fill="#cccccc"/>
<rect x="1963" y="749" width="1" height="4" fill="#cccccc"/>
<rect x="1970" y="749" width="1" height="4" fill="#cccccc"/>
<rect x="1977" y="749" width="1" height="4" fill="#cccccc"/>
<rect x="1991" y="749" width="1" height="4" fill="#cccccc"/>
<rect x="1998" y="749" width="1" height="4" fill="#cccccc"/>
<rect x="2005" y="749" width="1" height="4" fill="#cccccc"/>
<rect x="2013" y="749" width="1" height="4" fill="#cccccc"/>
<rect x="2027" y="749" width="1" height="4" fill="#cccccc"/>
<rect x="2034" y="749" width="1" height="4" fill="#cccccc"/>
<rect x="2041" y="749" width="1" height="4" fill="#cccccc"/>
<rect x="2048" y="749" width="1" height="4" fill="#cccccc"/>
<rect x="2063" y="749" width="1" height="4" fill="#cccccc"/>
<rect x="2070" y="749" width="1" height="4" fill="#cccccc"/>
<rect x="2077" y="749" width="1" height="4" fill="#cccccc"/>
<rect x="2084" y="749" width="1" height="4" fill="#cccccc"/>
<rect x="2098" y="749" width="1" height="4" fill="#cccccc"/>
<rect x="2105" y="749" width="1" height="4" fill="#cccccc"/>
<rect x="1591" y="748" width="1" height="5" fill="#b8b8b8"/>
<rect x="1662" y="748" width="1" height="5" fill="#b8b8b8"/>
<rect x="1734" y="748" width="1" height="5" fill="#b8b8b8"/>
<rect x="1805" y="748" width="1" height="5" fill="#b8b8b8"/>
<rect x="1877" y="748" width="1" height="5" fill="#b8b8b8"/>
<rect x="1948" y="748" width="1" height="5" fill="#b8b8b8"/>
<rect x="2020" y="748" width="1" height="5" fill="#b8b8b8"/>
<rect x="2091" y="748" width="1" height="5" fill="#b8b8b8"/>
<text x="1549.5" y="615" font-size="12" fill="#a2a2a2" text-anchor="middle" transform="rotate(-90 1549.5 615)" textLength="31" lengthAdjust="spacingAndGlyphs">E-4 T</text>
<path d="M1576.0,570.5 L1620.0,570.5 L1626.0,571.8 L1640.0,571.8 L1646.0,570.5 L2107.5,570.5" fill="none" stroke="#1f77b4" stroke-width="3.2" stroke-linejoin="miter" stroke-miterlimit="2" clip-path="url(#c6)" shape-rendering="crispEdges"/>
<path d="M1576.0,571.7 L1620.0,571.7 L1626.0,574.6 L1640.0,574.6 L1646.0,571.7 L2090.0,571.7 L2095.0,570.2 L2100.0,571.5 L2107.5,571.5" fill="none" stroke="#2ca02c" stroke-width="2.0" stroke-linejoin="miter" stroke-miterlimit="2" clip-path="url(#c6)" shape-rendering="crispEdges"/>
<path d="M1576.3,623.6 L1580.7,625.0 L1585.0,626.8 L1589.4,629.7 L1593.7,629.7 L1595.2,628.7 L1599.5,628.7 L1602.4,629.7 L1605.3,630.8 L1620.5,630.8 L1622.7,631.9 L1625.6,633.0 L1633.5,633.0 L1637.2,631.4 L1641.5,630.7 L1645.1,632.1 L1647.3,633.0 L1658.2,633.0 L1660.3,631.6 L1666.1,633.7 L1671.9,633.7 L1674.1,632.6 L1678.4,632.6 L1682.1,634.3 L1685.0,633.7 L1690.0,633.0 L1696.5,633.7 L1698.0,635.0 L1709.6,635.0 L1711.8,635.9 L1713.9,635.0 L1720.0,634.7 L1728.4,634.7 L1730.2,633.8 L1742.3,633.8 L1747.9,635.9 L1754.4,632.6 L1758.1,633.1 L1762.7,633.8 L1769.2,636.2 L1772.0,634.7 L1781.3,634.7 L1784.1,635.9 L1789.6,635.9 L1792.4,635.4 L1805.4,636.8 L1809.1,634.7 L1816.6,635.6 L1826.8,635.6 L1828.6,634.7 L1840.7,634.7 L1847.2,636.8 L1859.3,636.8 L1861.1,635.6 L1880.6,635.6 L1883.4,636.8 L1890.8,634.7 L1893.6,635.6 L1902.9,635.6 L1904.8,634.7 L1909.4,635.9 L1915.0,635.9 L1917.8,634.7 L1922.4,635.9 L1937.3,635.9 L1938.2,636.8 L1943.8,636.8 L1945.6,635.6 L1950.3,635.6 L1954.9,637.7 L1960.5,635.6 L1967.0,635.6 L1968.9,636.8 L1974.4,636.8 L1976.3,637.7 L1980.0,636.8 L1984.6,635.6 L1994.9,635.6 L1995.8,636.8 L2004.1,636.8 L2006.0,635.6 L2010.6,637.7 L2017.1,636.8 L2019.9,636.2 L2026.4,638.7 L2030.1,637.7 L2043.1,637.7 L2045.9,638.7 L2054.3,636.8 L2058.9,637.7 L2078.4,637.7 L2081.2,639.1 L2085.8,639.1 L2091.4,634.0 L2099.8,634.7 L2103.5,636.8 L2107.5,636.8" fill="none" stroke="#ff7f0e" stroke-width="2.0" stroke-linejoin="miter" stroke-miterlimit="2" clip-path="url(#c6)" shape-rendering="crispEdges"/>
<path d="M1576.3,630.8 L1576.3,633.0 L1590.5,648.9 L1593.7,646.0 L1598.1,644.6 L1601.0,645.7 L1605.3,647.1 L1608.2,645.7 L1616.9,645.7 L1619.1,647.1 L1624.9,648.2 L1627.0,648.9 L1629.2,647.8 L1635.7,647.1 L1644.4,647.1 L1648.0,647.8 L1654.5,644.9 L1671.9,644.9 L1674.1,643.9 L1678.4,643.9 L1680.6,644.9 L1687.9,644.9 L1689.3,643.9 L1693.6,643.9 L1698.0,641.8 L1700.9,643.9 L1705.2,645.2 L1707.4,643.9 L1713.2,643.9 L1714.7,642.8 L1720.0,642.7 L1723.7,644.0 L1729.3,644.0 L1730.2,642.7 L1742.3,643.0 L1747.9,644.7 L1752.5,642.7 L1779.4,642.9 L1781.3,644.0 L1802.6,644.0 L1805.4,644.9 L1808.2,644.0 L1829.6,644.0 L1831.4,642.7 L1835.1,643.0 L1838.9,644.9 L1846.3,644.9 L1848.1,644.0 L1852.8,642.7 L1857.4,643.0 L1862.1,644.9 L1866.7,644.0 L1881.6,644.5 L1887.1,644.0 L1895.5,642.9 L1915.0,642.7 L1919.6,644.0 L1925.2,641.9 L1929.9,643.0 L1938.2,644.0 L1942.9,642.7 L1961.4,642.7 L1963.3,641.9 L1976.3,642.4 L1983.7,640.8 L1992.1,640.8 L1996.7,643.0 L2002.3,641.9 L2008.8,641.9 L2012.5,643.8 L2019.0,639.9 L2026.4,641.9 L2030.1,640.8 L2038.5,639.9 L2046.8,641.9 L2054.3,640.8 L2067.3,641.9 L2078.4,641.9 L2080.3,640.8 L2089.6,640.8 L2097.0,646.6 L2100.7,648.0 L2107.5,648.9" fill="none" stroke="#9467bd" stroke-width="2.0" stroke-linejoin="miter" stroke-miterlimit="2" clip-path="url(#c6)" shape-rendering="crispEdges"/>
<path d="M1576.3,635.5 L1579.2,637.3 L1583.6,639.9 L1590.5,646.8 L1593.0,645.7 L1599.5,644.6 L1605.3,643.9 L1619.1,643.9 L1622.7,645.5 L1628.5,646.9 L1635.0,648.2 L1642.2,648.2 L1645.9,650.0 L1650.9,651.1 L1656.7,651.1 L1660.3,648.6 L1666.1,648.9 L1669.0,650.4 L1675.5,647.8 L1680.6,649.7 L1688.6,651.1 L1695.1,648.9 L1705.2,648.9 L1706.7,650.0 L1711.8,650.4 L1713.9,649.7 L1720.0,649.8 L1725.6,650.7 L1730.2,648.9 L1738.6,648.9 L1742.3,650.5 L1747.9,652.9 L1754.4,648.9 L1761.8,648.9 L1763.6,649.8 L1772.9,649.8 L1774.8,648.9 L1779.4,648.9 L1781.3,649.8 L1786.9,650.7 L1799.9,650.7 L1804.5,652.6 L1809.1,650.7 L1811.9,649.5 L1813.8,650.7 L1837.9,650.7 L1839.8,652.1 L1846.3,652.9 L1851.8,651.7 L1863.0,651.7 L1869.5,653.8 L1874.1,652.0 L1880.6,650.7 L1885.3,651.7 L1891.8,652.9 L1913.1,652.9 L1915.0,653.1 L1918.7,652.0 L1927.1,652.0 L1933.6,654.5 L1943.8,654.5 L1950.3,652.9 L1957.7,652.9 L1970.7,653.8 L1976.3,656.6 L1985.6,653.8 L1991.1,652.9 L1998.6,654.7 L2006.0,655.9 L2013.4,655.9 L2019.9,653.8 L2030.1,653.8 L2033.8,655.9 L2035.7,654.9 L2067.3,654.9 L2069.1,653.8 L2077.5,653.8 L2083.1,656.8 L2088.6,656.8 L2092.3,655.4 L2097.9,654.0 L2107.5,658.6" fill="none" stroke="#d62728" stroke-width="2.0" stroke-linejoin="miter" stroke-miterlimit="2" clip-path="url(#c6)" shape-rendering="crispEdges"/>
</svg></body></html>
